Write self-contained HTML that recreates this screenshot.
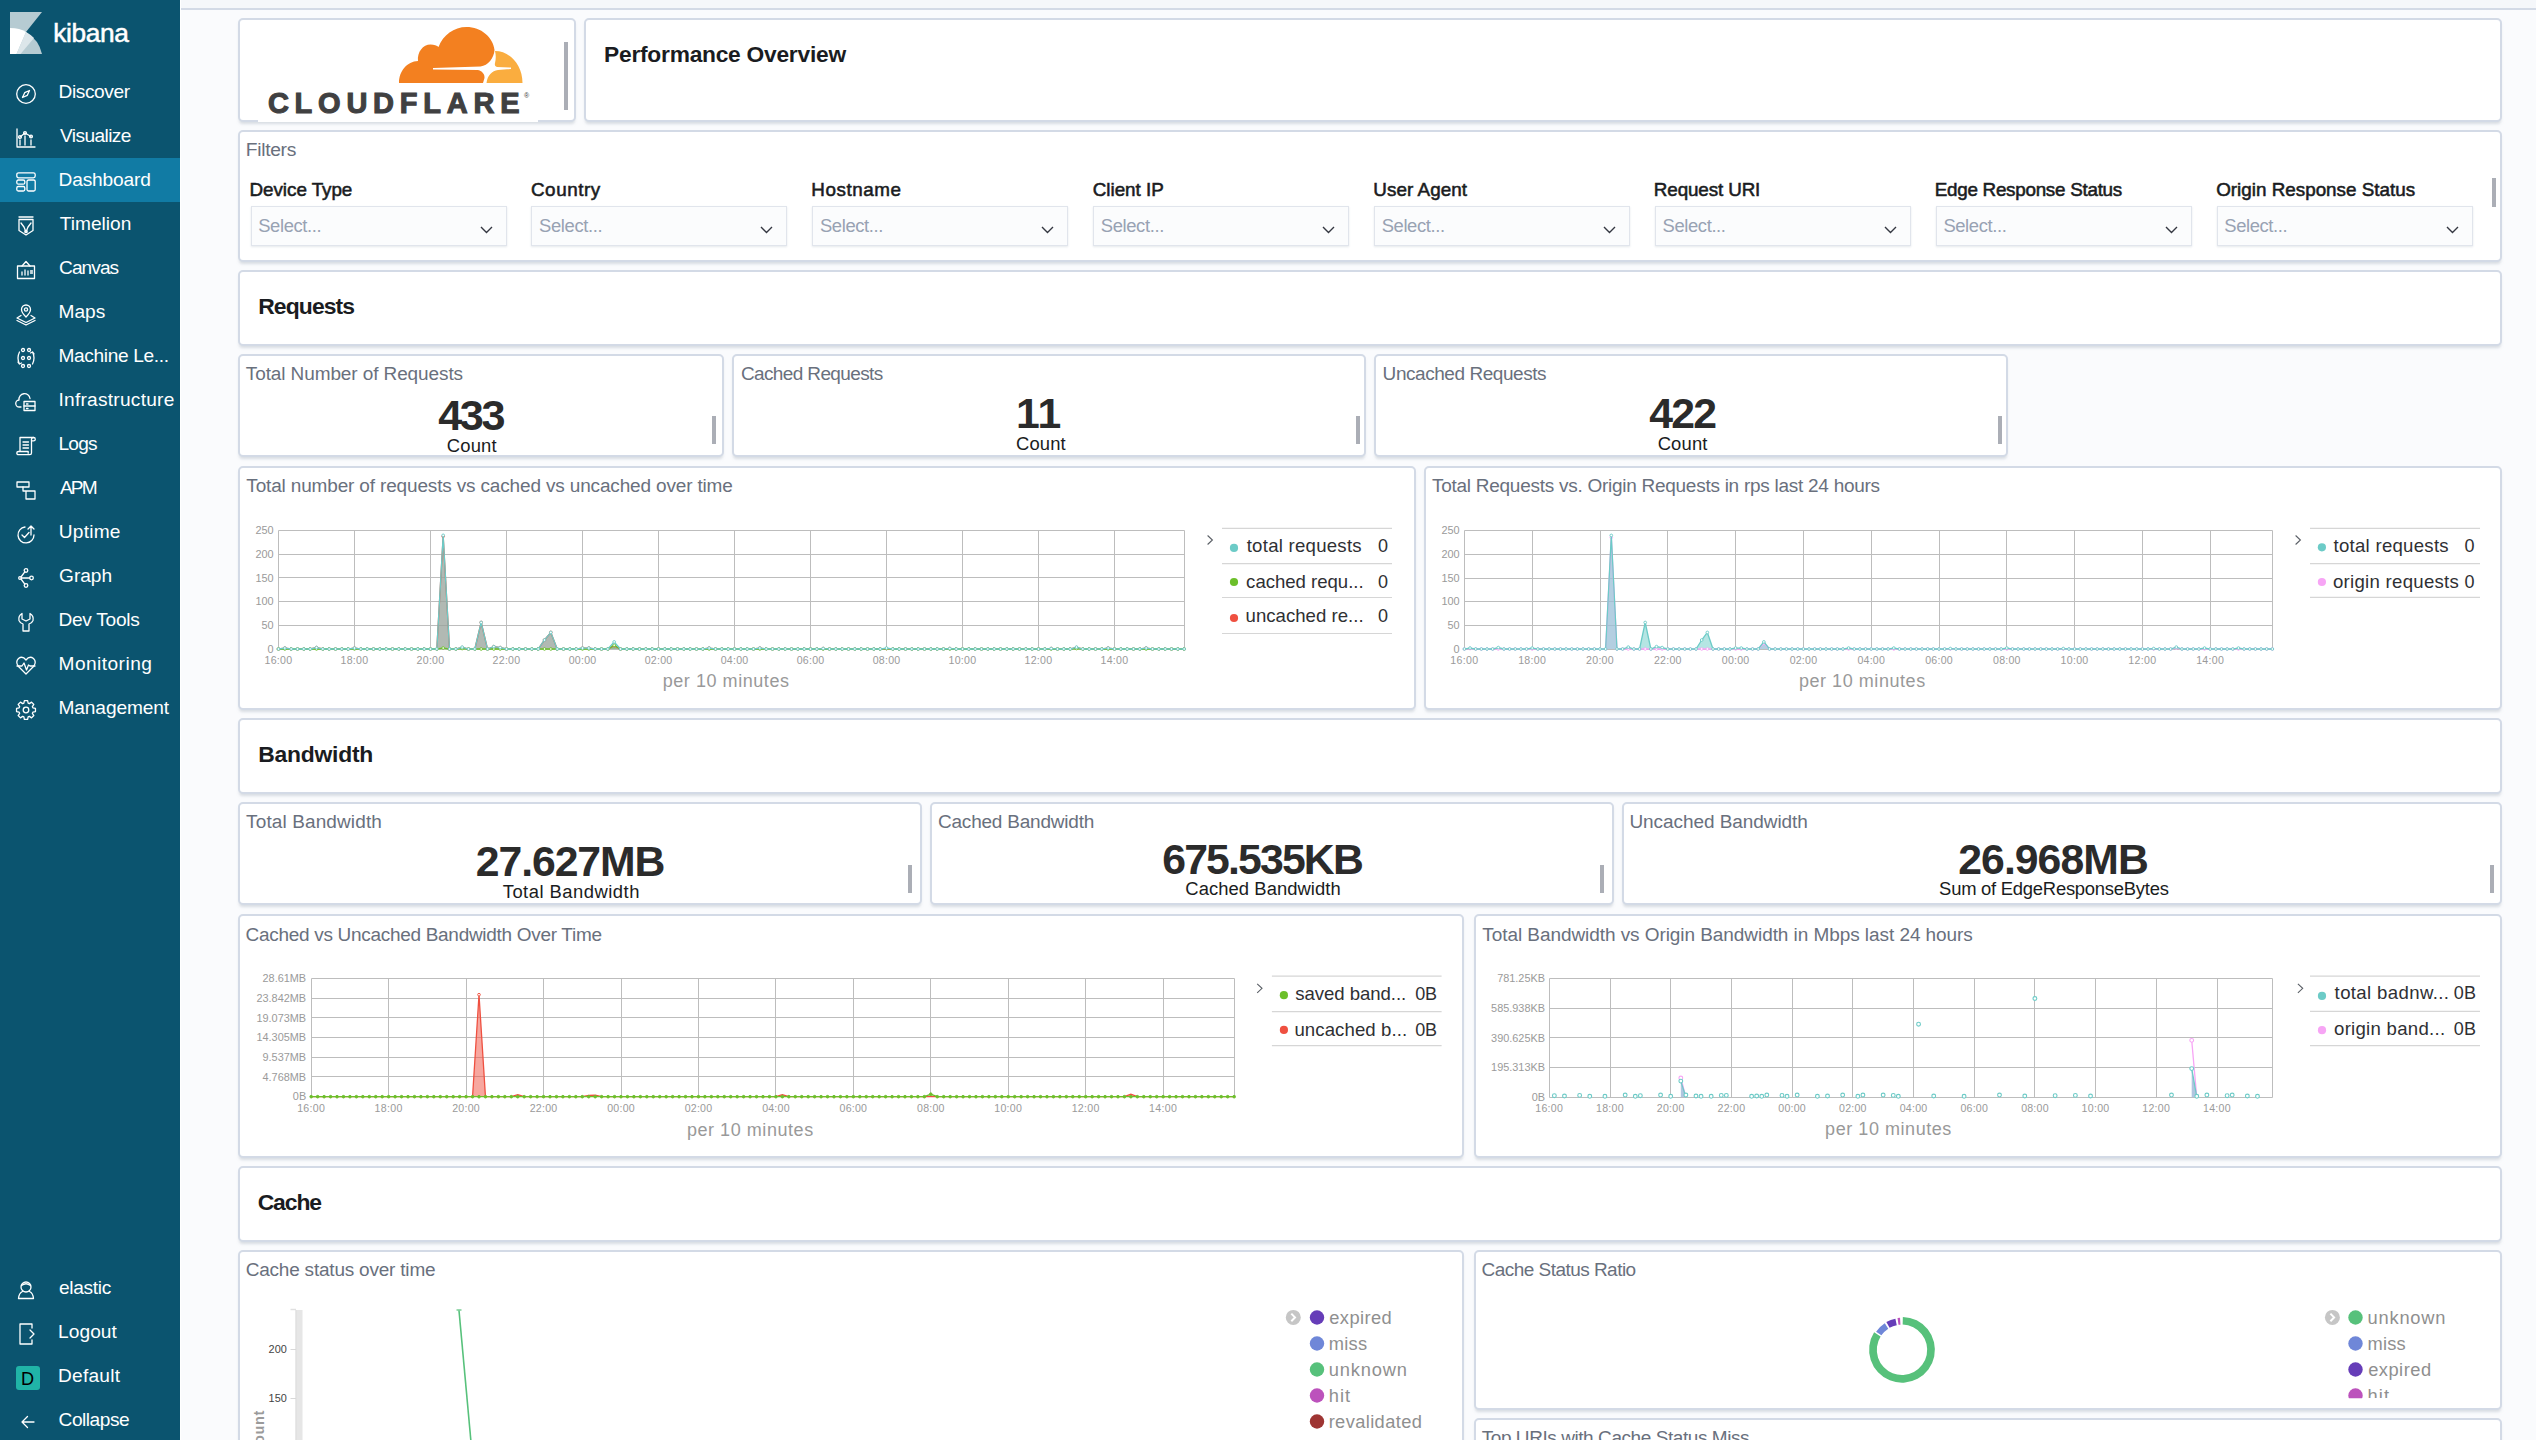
<!DOCTYPE html><html><head><meta charset="utf-8"><title>Performance Overview - Kibana</title><style>

*{margin:0;padding:0;box-sizing:border-box}
html,body{width:2536px;height:1440px;overflow:hidden;background:#fafbfd;font-family:"Liberation Sans",sans-serif}
.t{position:absolute;line-height:0;white-space:pre}
.a{position:absolute}
.p{position:absolute;background:#fff;border:2px solid #d3dae6;border-radius:5px;box-shadow:0 3px 3px -1px rgba(152,162,179,.35)}
.sel{position:absolute;background:#fbfcfd;border:1px solid #e1e5ec;box-shadow:0 1px 2px rgba(152,162,179,.25)}
.sb{position:absolute;background:#abaeb6;width:4px}
svg{position:absolute;overflow:visible}

</style></head><body>
<div class="a" style="left:180px;top:0;width:2356px;height:8px;background:#f5f7fa"></div>
<div class="a" style="left:180px;top:8px;width:2356px;height:2px;background:#d3dae6"></div>
<div class="a" style="left:0;top:0;width:180px;height:1440px;background:#0b546f"></div>
<div class="a" style="left:180px;top:0;width:1px;height:1440px;background:#ffffff"></div>
<div class="a" style="left:0;top:158px;width:180px;height:44px;background:#117ba4"></div>
<svg style="left:10px;top:12px" width="32" height="42" viewBox="0 0 32 42" ><path d="M0 0 H32 L16 20 Q29 28 32 42 H0 Z" fill="#b6cbd2"/><path d="M0 16 Q10 16 16 20 L6.5 42 H0 Z" fill="#ffffff"/><path d="M16 20 Q20.5 22.5 24 26 L10.5 42 H6.5 Z" fill="#dce6ea"/></svg>
<svg style="left:16px;top:83.5px" width="20" height="20" viewBox="0 0 20 20" ><circle cx="10" cy="10" r="9.3" fill="none" stroke="#fff" stroke-width="1.3" stroke-linejoin="round" stroke-linecap="round"/><path d="M13.5 6.5 L11.3 11.3 L6.5 13.5 L8.7 8.7 Z" fill="none" stroke="#fff" stroke-width="1.3" stroke-linejoin="round" stroke-linecap="round"/></svg>
<svg style="left:16px;top:127.5px" width="20" height="20" viewBox="0 0 20 20" ><path d="M1 1 V19 H19" fill="none" stroke="#fff" stroke-width="1.3" stroke-linejoin="round" stroke-linecap="round"/><path d="M4 9 L9 5 L15 8.5" fill="none" stroke="#fff" stroke-width="1.3" stroke-linejoin="round" stroke-linecap="round"/><circle cx="4" cy="9" r="1.4" fill="none" stroke="#fff" stroke-width="1.3" stroke-linejoin="round" stroke-linecap="round"/><circle cx="9" cy="5" r="1.4" fill="none" stroke="#fff" stroke-width="1.3" stroke-linejoin="round" stroke-linecap="round"/><circle cx="15" cy="8.5" r="1.4" fill="none" stroke="#fff" stroke-width="1.3" stroke-linejoin="round" stroke-linecap="round"/><path d="M4 12 V17 M9 8 V17 M15 12 V17" fill="none" stroke="#fff" stroke-width="1.3" stroke-linejoin="round" stroke-linecap="round"/></svg>
<svg style="left:16px;top:171.5px" width="20" height="20" viewBox="0 0 20 20" ><rect x="0.8" y="0.8" width="18.4" height="5" rx="1.8" fill="none" stroke="#fff" stroke-width="1.3" stroke-linejoin="round" stroke-linecap="round"/><rect x="0.8" y="8" width="8" height="4.2" rx="1.5" fill="none" stroke="#fff" stroke-width="1.3" stroke-linejoin="round" stroke-linecap="round"/><rect x="0.8" y="14.5" width="8" height="4.5" rx="1.5" fill="none" stroke="#fff" stroke-width="1.3" stroke-linejoin="round" stroke-linecap="round"/><rect x="11" y="8" width="8.2" height="11" rx="1.5" fill="none" stroke="#fff" stroke-width="1.3" stroke-linejoin="round" stroke-linecap="round"/></svg>
<svg style="left:16px;top:215.5px" width="20" height="20" viewBox="0 0 20 20" ><path d="M3 1 H17" fill="none" stroke="#fff" stroke-width="1.3" stroke-linejoin="round" stroke-linecap="round"/><path d="M3 3.5 H17 V14.5 L10 19 L3 14.5 Z" fill="none" stroke="#fff" stroke-width="1.3" stroke-linejoin="round" stroke-linecap="round"/><path d="M5 7 L8 11 L10 16 L12 11 L15 7" fill="none" stroke="#fff" stroke-width="1.3" stroke-linejoin="round" stroke-linecap="round"/><circle cx="10" cy="15.5" r="1.2" fill="none" stroke="#fff" stroke-width="1.3" stroke-linejoin="round" stroke-linecap="round"/></svg>
<svg style="left:16px;top:259.5px" width="20" height="20" viewBox="0 0 20 20" ><path d="M1.5 6 H18.5 V18.5 H1.5 Z" fill="none" stroke="#fff" stroke-width="1.3" stroke-linejoin="round" stroke-linecap="round"/><path d="M6 6 L10 1.5 L14 6" fill="none" stroke="#fff" stroke-width="1.3" stroke-linejoin="round" stroke-linecap="round"/><path d="M6 15 V12 M9 15 V10 M12 15 V11 M14.5 11 H16.5 M14.5 13 H16.5" fill="none" stroke="#fff" stroke-width="1.3" stroke-linejoin="round" stroke-linecap="round"/></svg>
<svg style="left:16px;top:303.5px" width="20" height="20" viewBox="0 0 20 20" ><path d="M10 13 C6 9 5.5 7.5 5.5 5.5 A4.5 4.5 0 0 1 14.5 5.5 C14.5 7.5 14 9 10 13 Z" fill="none" stroke="#fff" stroke-width="1.3" stroke-linejoin="round" stroke-linecap="round"/><circle cx="10" cy="5.5" r="1.6" fill="none" stroke="#fff" stroke-width="1.3" stroke-linejoin="round" stroke-linecap="round"/><path d="M5 11.5 L1 14 L10 18.5 L19 14 L15 11.5" fill="none" stroke="#fff" stroke-width="1.3" stroke-linejoin="round" stroke-linecap="round"/><path d="M1 16.5 L10 21 L19 16.5" fill="none" stroke="#fff" stroke-width="1.3" stroke-linejoin="round" stroke-linecap="round"/></svg>
<svg style="left:16px;top:347.5px" width="20" height="20" viewBox="0 0 20 20" ><circle cx="7" cy="2" r="1.5" fill="none" stroke="#fff" stroke-width="1.3" stroke-linejoin="round" stroke-linecap="round"/><circle cx="13" cy="2" r="1.5" fill="none" stroke="#fff" stroke-width="1.3" stroke-linejoin="round" stroke-linecap="round"/><circle cx="7" cy="10" r="1.5" fill="none" stroke="#fff" stroke-width="1.3" stroke-linejoin="round" stroke-linecap="round"/><circle cx="13" cy="10" r="1.5" fill="none" stroke="#fff" stroke-width="1.3" stroke-linejoin="round" stroke-linecap="round"/><circle cx="7" cy="18" r="1.5" fill="none" stroke="#fff" stroke-width="1.3" stroke-linejoin="round" stroke-linecap="round"/><circle cx="13" cy="18" r="1.5" fill="none" stroke="#fff" stroke-width="1.3" stroke-linejoin="round" stroke-linecap="round"/><path d="M3.5 4 Q0.5 10 3.5 16 M16.5 4 Q19.5 10 16.5 16 M2 14 L3.5 16 L5.5 15 M18 6 L16.5 4 L14.5 5" fill="none" stroke="#fff" stroke-width="1.3" stroke-linejoin="round" stroke-linecap="round"/></svg>
<svg style="left:16px;top:391.5px" width="20" height="20" viewBox="0 0 20 20" ><path d="M5 15 H3.5 A3.5 3.5 0 0 1 3 8 A5.5 5.5 0 0 1 14 6.5" fill="none" stroke="#fff" stroke-width="1.3" stroke-linejoin="round" stroke-linecap="round"/><rect x="8" y="9.5" width="11" height="9" fill="none" stroke="#fff" stroke-width="1.3" stroke-linejoin="round" stroke-linecap="round"/><path d="M8 14 H19 M10.5 12 H12 M10.5 16.5 H12" fill="none" stroke="#fff" stroke-width="1.3" stroke-linejoin="round" stroke-linecap="round"/></svg>
<svg style="left:16px;top:435.5px" width="20" height="20" viewBox="0 0 20 20" ><path d="M4 15.5 V1.5 H17.5 Q19.3 1.5 19.3 3.2 Q19.3 4.8 17.5 4.8 H15.5 V17 Q15.5 18.7 13.8 18.7 H2.5 Q0.8 18.7 0.8 17.1 Q0.8 15.5 2.5 15.5 H12.2 V17.2" fill="none" stroke="#fff" stroke-width="1.3" stroke-linejoin="round" stroke-linecap="round"/><path d="M15.5 4.8 V3.2 Q15.5 1.5 17.5 1.5 M7 6 H12.5 M7 9 H12.5 M7 12 H12.5" fill="none" stroke="#fff" stroke-width="1.3" stroke-linejoin="round" stroke-linecap="round"/></svg>
<svg style="left:16px;top:479.5px" width="20" height="20" viewBox="0 0 20 20" ><path d="M1 2 H13 V7 H1 Z" fill="none" stroke="#fff" stroke-width="1.3" stroke-linejoin="round" stroke-linecap="round"/><path d="M7 7 V11 H19 V19 H10 V11" fill="none" stroke="#fff" stroke-width="1.3" stroke-linejoin="round" stroke-linecap="round"/></svg>
<svg style="left:16px;top:523.5px" width="20" height="20" viewBox="0 0 20 20" ><path d="M9 3 A8 8 0 1 0 18 11" fill="none" stroke="#fff" stroke-width="1.3" stroke-linejoin="round" stroke-linecap="round"/><path d="M15 11 V2 M12 5 L15 2 L18 5" fill="none" stroke="#fff" stroke-width="1.3" stroke-linejoin="round" stroke-linecap="round"/><path d="M6 11 L8.5 13.5 L13 8.5" fill="none" stroke="#fff" stroke-width="1.3" stroke-linejoin="round" stroke-linecap="round"/></svg>
<svg style="left:16px;top:567.5px" width="20" height="20" viewBox="0 0 20 20" ><circle cx="10" cy="2.5" r="1.8" fill="none" stroke="#fff" stroke-width="1.3" stroke-linejoin="round" stroke-linecap="round"/><circle cx="15.5" cy="10" r="1.8" fill="none" stroke="#fff" stroke-width="1.3" stroke-linejoin="round" stroke-linecap="round"/><circle cx="10" cy="17.5" r="1.8" fill="none" stroke="#fff" stroke-width="1.3" stroke-linejoin="round" stroke-linecap="round"/><circle cx="4" cy="10" r="1.3" fill="none" stroke="#fff" stroke-width="1.3" stroke-linejoin="round" stroke-linecap="round"/><path d="M5.3 10 H13.7 M5 9 L8.8 3.8 M5 11 L8.8 16.2" fill="none" stroke="#fff" stroke-width="1.3" stroke-linejoin="round" stroke-linecap="round"/></svg>
<svg style="left:16px;top:611.5px" width="20" height="20" viewBox="0 0 20 20" ><path d="M6 1.5 Q2 4 3 8.5 Q4 11 7 12 V19 H13 V12 Q16 11 17 8.5 Q18 4 14 1.5 V7 L10 9 L6 7 Z" fill="none" stroke="#fff" stroke-width="1.3" stroke-linejoin="round" stroke-linecap="round"/></svg>
<svg style="left:16px;top:655.5px" width="20" height="20" viewBox="0 0 20 20" ><path d="M10 18 L2.5 10.5 Q-1 6 2.5 2.5 Q6.5 -0.5 10 4 Q13.5 -0.5 17.5 2.5 Q21 6 17.5 10.5 Z" fill="none" stroke="#fff" stroke-width="1.3" stroke-linejoin="round" stroke-linecap="round"/><path d="M1 10 H6 L8 7 L10.5 14 L12.5 9 L14 10 H19" fill="none" stroke="#fff" stroke-width="1.3" stroke-linejoin="round" stroke-linecap="round"/></svg>
<svg style="left:16px;top:699.5px" width="20" height="20" viewBox="0 0 20 20" ><path d="M16.88 7.87 L19.46 8.38 L19.46 11.62 L16.88 12.13 L16.37 13.36 L17.84 15.54 L15.54 17.84 L13.36 16.37 L12.13 16.88 L11.62 19.46 L8.38 19.46 L7.87 16.88 L6.64 16.37 L4.46 17.84 L2.16 15.54 L3.63 13.36 L3.12 12.13 L0.54 11.62 L0.54 8.38 L3.12 7.87 L3.63 6.64 L2.16 4.46 L4.46 2.16 L6.64 3.63 L7.87 3.12 L8.38 0.54 L11.62 0.54 L12.13 3.12 L13.36 3.63 L15.54 2.16 L17.84 4.46 L16.37 6.64 Z" fill="none" stroke="#fff" stroke-width="1.3" stroke-linejoin="round" stroke-linecap="round"/><circle cx="10" cy="10" r="2.8" fill="none" stroke="#fff" stroke-width="1.3" stroke-linejoin="round" stroke-linecap="round"/></svg>
<svg style="left:16px;top:1280px" width="20" height="20" viewBox="0 0 20 20" ><circle cx="10" cy="7" r="5" fill="none" stroke="#fff" stroke-width="1.3" stroke-linejoin="round" stroke-linecap="round"/><path d="M5.5 5.5 Q10 2 14.5 5.5" fill="none" stroke="#fff" stroke-width="1.3" stroke-linejoin="round" stroke-linecap="round"/><path d="M6.5 11.5 Q3 13 2.5 18.5 H17.5 Q17 13 13.5 11.5" fill="none" stroke="#fff" stroke-width="1.3" stroke-linejoin="round" stroke-linecap="round"/></svg>
<svg style="left:16px;top:1323px" width="20" height="22" viewBox="0 0 20 22" ><path d="M16 5 V1 H4 V21 H16 V17" fill="none" stroke="#fff" stroke-width="1.3" stroke-linejoin="round" stroke-linecap="round"/><path d="M14 7 L18 11 L14 15" fill="none" stroke="#fff" stroke-width="1.3" stroke-linejoin="round" stroke-linecap="round"/></svg>
<div class="a" style="left:16px;top:1366px;width:24px;height:24px;background:#20b4a7;border-radius:3px"></div>
<svg style="left:20px;top:1414px" width="16" height="16" viewBox="0 0 16 16" ><path d="M14 8 H2 M7.5 2.5 L2 8 L7.5 13.5" fill="none" stroke="#fff" stroke-width="1.3" stroke-linejoin="round" stroke-linecap="round"/></svg>
<div class="p" style="left:238px;top:18px;width:338px;height:104px"></div>
<div class="p" style="left:584px;top:18px;width:1918px;height:104px"></div>
<div class="p" style="left:238px;top:130px;width:2264px;height:132px"></div>
<div class="p" style="left:238px;top:270px;width:2264px;height:76px"></div>
<div class="p" style="left:238px;top:354px;width:486px;height:103px"></div>
<div class="p" style="left:732px;top:354px;width:634px;height:103px"></div>
<div class="p" style="left:1374px;top:354px;width:634px;height:103px"></div>
<div class="p" style="left:238px;top:466px;width:1178px;height:244px"></div>
<div class="p" style="left:1424px;top:466px;width:1078px;height:244px"></div>
<div class="p" style="left:238px;top:718px;width:2264px;height:76px"></div>
<div class="p" style="left:238px;top:802px;width:684px;height:103px"></div>
<div class="p" style="left:930px;top:802px;width:684px;height:103px"></div>
<div class="p" style="left:1622px;top:802px;width:880px;height:103px"></div>
<div class="p" style="left:238px;top:914px;width:1226px;height:244px"></div>
<div class="p" style="left:1474px;top:914px;width:1028px;height:244px"></div>
<div class="p" style="left:238px;top:1166px;width:2264px;height:76px"></div>
<div class="p" style="left:238px;top:1250px;width:1226px;height:210px"></div>
<div class="p" style="left:1474px;top:1250px;width:1028px;height:160px"></div>
<div class="p" style="left:1474px;top:1418px;width:1028px;height:42px"></div>
<div class="sb" style="left:564px;top:42px;height:68px"></div>
<div class="sb" style="left:712px;top:416px;height:28px"></div>
<div class="sb" style="left:1356px;top:416px;height:28px"></div>
<div class="sb" style="left:1998px;top:416px;height:28px"></div>
<div class="sb" style="left:2492px;top:178px;height:29px"></div>
<div class="sb" style="left:908px;top:865px;height:28px"></div>
<div class="sb" style="left:1600px;top:865px;height:28px"></div>
<div class="sb" style="left:2490px;top:865px;height:28px"></div>
<svg style="left:399px;top:27px" width="124" height="56" viewBox="0 0 124 56" ><path d="M0 56 C0 44 8 34.5 19 34 C18 25 24 17.5 31.5 17.5 C35 17.5 38 18.5 39.5 20 C44 8 55 0 67.5 0 C82 0 94 10 95.5 23 C95 31 89 38.5 81.5 39.5 L34 41 L34 42.5 L78.5 43 C83 43.5 86 47.5 85.5 51 L84 56 Z" fill="#f38020"/><path d="M96 24 C111 24 123.5 38 123.5 56 H87.5 C88.5 48 93 44 99 43 L112 42 L112 40.5 L98 40 C96 39.5 95.5 38 96 36 C97 32 97 28 96 24 Z" fill="#faad3f"/></svg>
<div class="a" style="left:258px;top:119px;width:280px;height:3px;background:#fff"></div>
<div class="sel" style="left:250.5px;top:206px;width:256px;height:40px"></div>
<svg style="left:479.5px;top:226px" width="13" height="8"><path d="M1 1 L6.5 6.5 L12 1" fill="none" stroke="#343741" stroke-width="1.4"/></svg>
<div class="sel" style="left:531.4px;top:206px;width:256px;height:40px"></div>
<svg style="left:760.4px;top:226px" width="13" height="8"><path d="M1 1 L6.5 6.5 L12 1" fill="none" stroke="#343741" stroke-width="1.4"/></svg>
<div class="sel" style="left:812.2px;top:206px;width:256px;height:40px"></div>
<svg style="left:1041.2px;top:226px" width="13" height="8"><path d="M1 1 L6.5 6.5 L12 1" fill="none" stroke="#343741" stroke-width="1.4"/></svg>
<div class="sel" style="left:1093.1px;top:206px;width:256px;height:40px"></div>
<svg style="left:1322.1px;top:226px" width="13" height="8"><path d="M1 1 L6.5 6.5 L12 1" fill="none" stroke="#343741" stroke-width="1.4"/></svg>
<div class="sel" style="left:1373.9px;top:206px;width:256px;height:40px"></div>
<svg style="left:1602.9px;top:226px" width="13" height="8"><path d="M1 1 L6.5 6.5 L12 1" fill="none" stroke="#343741" stroke-width="1.4"/></svg>
<div class="sel" style="left:1654.8px;top:206px;width:256px;height:40px"></div>
<svg style="left:1883.8px;top:226px" width="13" height="8"><path d="M1 1 L6.5 6.5 L12 1" fill="none" stroke="#343741" stroke-width="1.4"/></svg>
<div class="sel" style="left:1935.7px;top:206px;width:256px;height:40px"></div>
<svg style="left:2164.7px;top:226px" width="13" height="8"><path d="M1 1 L6.5 6.5 L12 1" fill="none" stroke="#343741" stroke-width="1.4"/></svg>
<div class="sel" style="left:2216.5px;top:206px;width:256px;height:40px"></div>
<svg style="left:2445.5px;top:226px" width="13" height="8"><path d="M1 1 L6.5 6.5 L12 1" fill="none" stroke="#343741" stroke-width="1.4"/></svg>
<svg style="left:0;top:0" width="2536" height="1440"><path d="M278.50 530.50 H1184.50" stroke="#bdbdbd" stroke-width="1"/><path d="M278.50 554.50 H1184.50" stroke="#bdbdbd" stroke-width="1"/><path d="M278.50 577.50 H1184.50" stroke="#bdbdbd" stroke-width="1"/><path d="M278.50 601.50 H1184.50" stroke="#bdbdbd" stroke-width="1"/><path d="M278.50 625.50 H1184.50" stroke="#bdbdbd" stroke-width="1"/><path d="M278.50 649.50 H1184.50" stroke="#bdbdbd" stroke-width="1"/><path d="M278.50 530.50 V649.50" stroke="#bdbdbd" stroke-width="1"/><path d="M354.50 530.50 V649.50" stroke="#bdbdbd" stroke-width="1"/><path d="M430.50 530.50 V649.50" stroke="#bdbdbd" stroke-width="1"/><path d="M506.50 530.50 V649.50" stroke="#bdbdbd" stroke-width="1"/><path d="M582.50 530.50 V649.50" stroke="#bdbdbd" stroke-width="1"/><path d="M658.50 530.50 V649.50" stroke="#bdbdbd" stroke-width="1"/><path d="M734.50 530.50 V649.50" stroke="#bdbdbd" stroke-width="1"/><path d="M810.50 530.50 V649.50" stroke="#bdbdbd" stroke-width="1"/><path d="M886.50 530.50 V649.50" stroke="#bdbdbd" stroke-width="1"/><path d="M962.50 530.50 V649.50" stroke="#bdbdbd" stroke-width="1"/><path d="M1038.50 530.50 V649.50" stroke="#bdbdbd" stroke-width="1"/><path d="M1114.50 530.50 V649.50" stroke="#bdbdbd" stroke-width="1"/><path d="M1184.50 530.50 V649.50" stroke="#bdbdbd" stroke-width="1"/><path d="M278.50 649.00 L284.83 648.05 L291.17 649.00 L297.50 649.00 L303.83 649.00 L310.17 649.00 L316.50 647.58 L322.83 649.00 L329.17 649.00 L335.50 649.00 L341.83 649.00 L348.17 649.00 L354.50 648.05 L360.83 649.00 L367.17 649.00 L373.50 649.00 L379.83 649.00 L386.17 649.00 L392.50 649.00 L398.83 649.00 L405.17 649.00 L411.50 649.00 L417.83 649.00 L424.17 649.00 L430.50 649.00 L436.83 649.00 L443.17 536.28 L449.50 649.00 L455.83 649.00 L462.17 647.58 L468.50 649.00 L474.83 649.00 L481.17 622.48 L487.50 649.00 L493.83 646.63 L500.17 647.58 L506.50 649.00 L512.83 649.00 L519.17 649.00 L525.50 649.00 L531.83 649.00 L538.17 649.00 L544.50 640.00 L550.83 632.42 L557.17 649.00 L563.50 649.00 L569.83 649.00 L576.17 649.00 L582.50 648.05 L588.83 648.05 L595.17 649.00 L601.50 649.00 L607.83 649.00 L614.17 645.68 L620.50 649.00 L626.83 649.00 L633.17 649.00 L639.50 649.00 L645.83 649.00 L652.17 649.00 L658.50 649.00 L664.83 649.00 L671.17 649.00 L677.50 649.00 L683.83 649.00 L690.17 649.00 L696.50 649.00 L702.83 649.00 L709.17 648.05 L715.50 649.00 L721.83 649.00 L728.17 649.00 L734.50 649.00 L740.83 649.00 L747.17 649.00 L753.50 649.00 L759.83 648.05 L766.17 649.00 L772.50 649.00 L778.83 649.00 L785.17 649.00 L791.50 649.00 L797.83 649.00 L804.17 649.00 L810.50 649.00 L816.83 649.00 L823.17 648.53 L829.50 649.00 L835.83 649.00 L842.17 649.00 L848.50 649.00 L854.83 649.00 L861.17 649.00 L867.50 649.00 L873.83 649.00 L880.17 649.00 L886.50 648.53 L892.83 649.00 L899.17 649.00 L905.50 649.00 L911.83 649.00 L918.17 649.00 L924.50 649.00 L930.83 649.00 L937.17 649.00 L943.50 649.00 L949.83 648.53 L956.17 649.00 L962.50 649.00 L968.83 649.00 L975.17 649.00 L981.50 649.00 L987.83 649.00 L994.17 649.00 L1000.50 649.00 L1006.83 649.00 L1013.17 649.00 L1019.50 649.00 L1025.83 649.00 L1032.17 649.00 L1038.50 649.00 L1044.83 649.00 L1051.17 648.53 L1057.50 649.00 L1063.83 649.00 L1070.17 649.00 L1076.50 647.58 L1082.83 649.00 L1089.17 649.00 L1095.50 649.00 L1101.83 649.00 L1108.17 648.05 L1114.50 649.00 L1120.83 649.00 L1127.17 649.00 L1133.50 649.00 L1139.83 649.00 L1146.17 648.05 L1152.50 649.00 L1158.83 649.00 L1165.17 649.00 L1171.50 649.00 L1177.83 649.00 L1184.17 649.00 L1184.17 649.00 L278.50 649.00 Z" fill="#ef5040" fill-opacity="0.5" stroke="none"/><path d="M278.50 649.00 L284.83 649.00 L291.17 649.00 L297.50 649.00 L303.83 649.00 L310.17 649.00 L316.50 649.00 L322.83 649.00 L329.17 649.00 L335.50 649.00 L341.83 649.00 L348.17 649.00 L354.50 649.00 L360.83 649.00 L367.17 649.00 L373.50 649.00 L379.83 649.00 L386.17 649.00 L392.50 649.00 L398.83 649.00 L405.17 649.00 L411.50 649.00 L417.83 649.00 L424.17 649.00 L430.50 649.00 L436.83 649.00 L443.17 648.05 L449.50 649.00 L455.83 649.00 L462.17 648.53 L468.50 649.00 L474.83 649.00 L481.17 649.00 L487.50 649.00 L493.83 649.00 L500.17 649.00 L506.50 649.00 L512.83 649.00 L519.17 649.00 L525.50 649.00 L531.83 649.00 L538.17 649.00 L544.50 649.00 L550.83 649.00 L557.17 649.00 L563.50 649.00 L569.83 649.00 L576.17 649.00 L582.50 649.00 L588.83 649.00 L595.17 649.00 L601.50 649.00 L607.83 649.00 L614.17 645.21 L620.50 649.00 L626.83 649.00 L633.17 649.00 L639.50 649.00 L645.83 649.00 L652.17 649.00 L658.50 649.00 L664.83 649.00 L671.17 649.00 L677.50 649.00 L683.83 649.00 L690.17 649.00 L696.50 649.00 L702.83 649.00 L709.17 649.00 L715.50 649.00 L721.83 649.00 L728.17 649.00 L734.50 649.00 L740.83 649.00 L747.17 649.00 L753.50 649.00 L759.83 649.00 L766.17 649.00 L772.50 649.00 L778.83 649.00 L785.17 649.00 L791.50 649.00 L797.83 649.00 L804.17 649.00 L810.50 649.00 L816.83 649.00 L823.17 649.00 L829.50 649.00 L835.83 649.00 L842.17 649.00 L848.50 649.00 L854.83 649.00 L861.17 649.00 L867.50 649.00 L873.83 649.00 L880.17 649.00 L886.50 648.53 L892.83 649.00 L899.17 649.00 L905.50 649.00 L911.83 649.00 L918.17 649.00 L924.50 649.00 L930.83 649.00 L937.17 649.00 L943.50 649.00 L949.83 649.00 L956.17 649.00 L962.50 649.00 L968.83 649.00 L975.17 649.00 L981.50 649.00 L987.83 649.00 L994.17 649.00 L1000.50 649.00 L1006.83 649.00 L1013.17 649.00 L1019.50 649.00 L1025.83 649.00 L1032.17 649.00 L1038.50 649.00 L1044.83 649.00 L1051.17 649.00 L1057.50 649.00 L1063.83 649.00 L1070.17 649.00 L1076.50 648.53 L1082.83 649.00 L1089.17 649.00 L1095.50 649.00 L1101.83 649.00 L1108.17 649.00 L1114.50 649.00 L1120.83 649.00 L1127.17 649.00 L1133.50 649.00 L1139.83 649.00 L1146.17 649.00 L1152.50 649.00 L1158.83 649.00 L1165.17 649.00 L1171.50 649.00 L1177.83 649.00 L1184.17 649.00 L1184.17 649.00 L278.50 649.00 Z" fill="#6cbf2a" fill-opacity="0.5" stroke="none"/><path d="M278.50 649.00 L284.83 648.05 L291.17 649.00 L297.50 649.00 L303.83 649.00 L310.17 649.00 L316.50 647.58 L322.83 649.00 L329.17 649.00 L335.50 649.00 L341.83 649.00 L348.17 649.00 L354.50 648.05 L360.83 649.00 L367.17 649.00 L373.50 649.00 L379.83 649.00 L386.17 649.00 L392.50 649.00 L398.83 649.00 L405.17 649.00 L411.50 649.00 L417.83 649.00 L424.17 649.00 L430.50 649.00 L436.83 649.00 L443.17 535.34 L449.50 649.00 L455.83 649.00 L462.17 647.11 L468.50 649.00 L474.83 649.00 L481.17 622.48 L487.50 649.00 L493.83 646.63 L500.17 647.58 L506.50 649.00 L512.83 649.00 L519.17 649.00 L525.50 649.00 L531.83 649.00 L538.17 649.00 L544.50 640.00 L550.83 632.42 L557.17 649.00 L563.50 649.00 L569.83 649.00 L576.17 649.00 L582.50 648.05 L588.83 648.05 L595.17 649.00 L601.50 649.00 L607.83 649.00 L614.17 641.90 L620.50 649.00 L626.83 649.00 L633.17 649.00 L639.50 649.00 L645.83 649.00 L652.17 649.00 L658.50 649.00 L664.83 649.00 L671.17 649.00 L677.50 649.00 L683.83 649.00 L690.17 649.00 L696.50 649.00 L702.83 649.00 L709.17 648.05 L715.50 649.00 L721.83 649.00 L728.17 649.00 L734.50 649.00 L740.83 649.00 L747.17 649.00 L753.50 649.00 L759.83 648.05 L766.17 649.00 L772.50 649.00 L778.83 649.00 L785.17 649.00 L791.50 649.00 L797.83 649.00 L804.17 649.00 L810.50 649.00 L816.83 649.00 L823.17 648.53 L829.50 649.00 L835.83 649.00 L842.17 649.00 L848.50 649.00 L854.83 649.00 L861.17 649.00 L867.50 649.00 L873.83 649.00 L880.17 649.00 L886.50 648.05 L892.83 649.00 L899.17 649.00 L905.50 649.00 L911.83 649.00 L918.17 649.00 L924.50 649.00 L930.83 649.00 L937.17 649.00 L943.50 649.00 L949.83 648.53 L956.17 649.00 L962.50 649.00 L968.83 649.00 L975.17 649.00 L981.50 649.00 L987.83 649.00 L994.17 649.00 L1000.50 649.00 L1006.83 649.00 L1013.17 649.00 L1019.50 649.00 L1025.83 649.00 L1032.17 649.00 L1038.50 649.00 L1044.83 649.00 L1051.17 648.53 L1057.50 649.00 L1063.83 649.00 L1070.17 649.00 L1076.50 647.11 L1082.83 649.00 L1089.17 649.00 L1095.50 649.00 L1101.83 649.00 L1108.17 648.05 L1114.50 649.00 L1120.83 649.00 L1127.17 649.00 L1133.50 649.00 L1139.83 649.00 L1146.17 648.05 L1152.50 649.00 L1158.83 649.00 L1165.17 649.00 L1171.50 649.00 L1177.83 649.00 L1184.17 649.00 L1184.17 649.00 L278.50 649.00 Z" fill="#6ccbc7" fill-opacity="0.5" stroke="none"/><path d="M278.50 649.00 L284.83 648.05 L291.17 649.00 L297.50 649.00 L303.83 649.00 L310.17 649.00 L316.50 647.58 L322.83 649.00 L329.17 649.00 L335.50 649.00 L341.83 649.00 L348.17 649.00 L354.50 648.05 L360.83 649.00 L367.17 649.00 L373.50 649.00 L379.83 649.00 L386.17 649.00 L392.50 649.00 L398.83 649.00 L405.17 649.00 L411.50 649.00 L417.83 649.00 L424.17 649.00 L430.50 649.00 L436.83 649.00 L443.17 536.28 L449.50 649.00 L455.83 649.00 L462.17 647.58 L468.50 649.00 L474.83 649.00 L481.17 622.48 L487.50 649.00 L493.83 646.63 L500.17 647.58 L506.50 649.00 L512.83 649.00 L519.17 649.00 L525.50 649.00 L531.83 649.00 L538.17 649.00 L544.50 640.00 L550.83 632.42 L557.17 649.00 L563.50 649.00 L569.83 649.00 L576.17 649.00 L582.50 648.05 L588.83 648.05 L595.17 649.00 L601.50 649.00 L607.83 649.00 L614.17 645.68 L620.50 649.00 L626.83 649.00 L633.17 649.00 L639.50 649.00 L645.83 649.00 L652.17 649.00 L658.50 649.00 L664.83 649.00 L671.17 649.00 L677.50 649.00 L683.83 649.00 L690.17 649.00 L696.50 649.00 L702.83 649.00 L709.17 648.05 L715.50 649.00 L721.83 649.00 L728.17 649.00 L734.50 649.00 L740.83 649.00 L747.17 649.00 L753.50 649.00 L759.83 648.05 L766.17 649.00 L772.50 649.00 L778.83 649.00 L785.17 649.00 L791.50 649.00 L797.83 649.00 L804.17 649.00 L810.50 649.00 L816.83 649.00 L823.17 648.53 L829.50 649.00 L835.83 649.00 L842.17 649.00 L848.50 649.00 L854.83 649.00 L861.17 649.00 L867.50 649.00 L873.83 649.00 L880.17 649.00 L886.50 648.53 L892.83 649.00 L899.17 649.00 L905.50 649.00 L911.83 649.00 L918.17 649.00 L924.50 649.00 L930.83 649.00 L937.17 649.00 L943.50 649.00 L949.83 648.53 L956.17 649.00 L962.50 649.00 L968.83 649.00 L975.17 649.00 L981.50 649.00 L987.83 649.00 L994.17 649.00 L1000.50 649.00 L1006.83 649.00 L1013.17 649.00 L1019.50 649.00 L1025.83 649.00 L1032.17 649.00 L1038.50 649.00 L1044.83 649.00 L1051.17 648.53 L1057.50 649.00 L1063.83 649.00 L1070.17 649.00 L1076.50 647.58 L1082.83 649.00 L1089.17 649.00 L1095.50 649.00 L1101.83 649.00 L1108.17 648.05 L1114.50 649.00 L1120.83 649.00 L1127.17 649.00 L1133.50 649.00 L1139.83 649.00 L1146.17 648.05 L1152.50 649.00 L1158.83 649.00 L1165.17 649.00 L1171.50 649.00 L1177.83 649.00 L1184.17 649.00" fill="none" stroke="#ef5040" stroke-width="1.3"/><circle cx="278.50" cy="649.00" r="1.35" fill="#fff" stroke="#ef5040" stroke-width="0.9"/><circle cx="284.83" cy="648.05" r="1.35" fill="#fff" stroke="#ef5040" stroke-width="0.9"/><circle cx="291.17" cy="649.00" r="1.35" fill="#fff" stroke="#ef5040" stroke-width="0.9"/><circle cx="297.50" cy="649.00" r="1.35" fill="#fff" stroke="#ef5040" stroke-width="0.9"/><circle cx="303.83" cy="649.00" r="1.35" fill="#fff" stroke="#ef5040" stroke-width="0.9"/><circle cx="310.17" cy="649.00" r="1.35" fill="#fff" stroke="#ef5040" stroke-width="0.9"/><circle cx="316.50" cy="647.58" r="1.35" fill="#fff" stroke="#ef5040" stroke-width="0.9"/><circle cx="322.83" cy="649.00" r="1.35" fill="#fff" stroke="#ef5040" stroke-width="0.9"/><circle cx="329.17" cy="649.00" r="1.35" fill="#fff" stroke="#ef5040" stroke-width="0.9"/><circle cx="335.50" cy="649.00" r="1.35" fill="#fff" stroke="#ef5040" stroke-width="0.9"/><circle cx="341.83" cy="649.00" r="1.35" fill="#fff" stroke="#ef5040" stroke-width="0.9"/><circle cx="348.17" cy="649.00" r="1.35" fill="#fff" stroke="#ef5040" stroke-width="0.9"/><circle cx="354.50" cy="648.05" r="1.35" fill="#fff" stroke="#ef5040" stroke-width="0.9"/><circle cx="360.83" cy="649.00" r="1.35" fill="#fff" stroke="#ef5040" stroke-width="0.9"/><circle cx="367.17" cy="649.00" r="1.35" fill="#fff" stroke="#ef5040" stroke-width="0.9"/><circle cx="373.50" cy="649.00" r="1.35" fill="#fff" stroke="#ef5040" stroke-width="0.9"/><circle cx="379.83" cy="649.00" r="1.35" fill="#fff" stroke="#ef5040" stroke-width="0.9"/><circle cx="386.17" cy="649.00" r="1.35" fill="#fff" stroke="#ef5040" stroke-width="0.9"/><circle cx="392.50" cy="649.00" r="1.35" fill="#fff" stroke="#ef5040" stroke-width="0.9"/><circle cx="398.83" cy="649.00" r="1.35" fill="#fff" stroke="#ef5040" stroke-width="0.9"/><circle cx="405.17" cy="649.00" r="1.35" fill="#fff" stroke="#ef5040" stroke-width="0.9"/><circle cx="411.50" cy="649.00" r="1.35" fill="#fff" stroke="#ef5040" stroke-width="0.9"/><circle cx="417.83" cy="649.00" r="1.35" fill="#fff" stroke="#ef5040" stroke-width="0.9"/><circle cx="424.17" cy="649.00" r="1.35" fill="#fff" stroke="#ef5040" stroke-width="0.9"/><circle cx="430.50" cy="649.00" r="1.35" fill="#fff" stroke="#ef5040" stroke-width="0.9"/><circle cx="436.83" cy="649.00" r="1.35" fill="#fff" stroke="#ef5040" stroke-width="0.9"/><circle cx="443.17" cy="536.28" r="1.35" fill="#fff" stroke="#ef5040" stroke-width="0.9"/><circle cx="449.50" cy="649.00" r="1.35" fill="#fff" stroke="#ef5040" stroke-width="0.9"/><circle cx="455.83" cy="649.00" r="1.35" fill="#fff" stroke="#ef5040" stroke-width="0.9"/><circle cx="462.17" cy="647.58" r="1.35" fill="#fff" stroke="#ef5040" stroke-width="0.9"/><circle cx="468.50" cy="649.00" r="1.35" fill="#fff" stroke="#ef5040" stroke-width="0.9"/><circle cx="474.83" cy="649.00" r="1.35" fill="#fff" stroke="#ef5040" stroke-width="0.9"/><circle cx="481.17" cy="622.48" r="1.35" fill="#fff" stroke="#ef5040" stroke-width="0.9"/><circle cx="487.50" cy="649.00" r="1.35" fill="#fff" stroke="#ef5040" stroke-width="0.9"/><circle cx="493.83" cy="646.63" r="1.35" fill="#fff" stroke="#ef5040" stroke-width="0.9"/><circle cx="500.17" cy="647.58" r="1.35" fill="#fff" stroke="#ef5040" stroke-width="0.9"/><circle cx="506.50" cy="649.00" r="1.35" fill="#fff" stroke="#ef5040" stroke-width="0.9"/><circle cx="512.83" cy="649.00" r="1.35" fill="#fff" stroke="#ef5040" stroke-width="0.9"/><circle cx="519.17" cy="649.00" r="1.35" fill="#fff" stroke="#ef5040" stroke-width="0.9"/><circle cx="525.50" cy="649.00" r="1.35" fill="#fff" stroke="#ef5040" stroke-width="0.9"/><circle cx="531.83" cy="649.00" r="1.35" fill="#fff" stroke="#ef5040" stroke-width="0.9"/><circle cx="538.17" cy="649.00" r="1.35" fill="#fff" stroke="#ef5040" stroke-width="0.9"/><circle cx="544.50" cy="640.00" r="1.35" fill="#fff" stroke="#ef5040" stroke-width="0.9"/><circle cx="550.83" cy="632.42" r="1.35" fill="#fff" stroke="#ef5040" stroke-width="0.9"/><circle cx="557.17" cy="649.00" r="1.35" fill="#fff" stroke="#ef5040" stroke-width="0.9"/><circle cx="563.50" cy="649.00" r="1.35" fill="#fff" stroke="#ef5040" stroke-width="0.9"/><circle cx="569.83" cy="649.00" r="1.35" fill="#fff" stroke="#ef5040" stroke-width="0.9"/><circle cx="576.17" cy="649.00" r="1.35" fill="#fff" stroke="#ef5040" stroke-width="0.9"/><circle cx="582.50" cy="648.05" r="1.35" fill="#fff" stroke="#ef5040" stroke-width="0.9"/><circle cx="588.83" cy="648.05" r="1.35" fill="#fff" stroke="#ef5040" stroke-width="0.9"/><circle cx="595.17" cy="649.00" r="1.35" fill="#fff" stroke="#ef5040" stroke-width="0.9"/><circle cx="601.50" cy="649.00" r="1.35" fill="#fff" stroke="#ef5040" stroke-width="0.9"/><circle cx="607.83" cy="649.00" r="1.35" fill="#fff" stroke="#ef5040" stroke-width="0.9"/><circle cx="614.17" cy="645.68" r="1.35" fill="#fff" stroke="#ef5040" stroke-width="0.9"/><circle cx="620.50" cy="649.00" r="1.35" fill="#fff" stroke="#ef5040" stroke-width="0.9"/><circle cx="626.83" cy="649.00" r="1.35" fill="#fff" stroke="#ef5040" stroke-width="0.9"/><circle cx="633.17" cy="649.00" r="1.35" fill="#fff" stroke="#ef5040" stroke-width="0.9"/><circle cx="639.50" cy="649.00" r="1.35" fill="#fff" stroke="#ef5040" stroke-width="0.9"/><circle cx="645.83" cy="649.00" r="1.35" fill="#fff" stroke="#ef5040" stroke-width="0.9"/><circle cx="652.17" cy="649.00" r="1.35" fill="#fff" stroke="#ef5040" stroke-width="0.9"/><circle cx="658.50" cy="649.00" r="1.35" fill="#fff" stroke="#ef5040" stroke-width="0.9"/><circle cx="664.83" cy="649.00" r="1.35" fill="#fff" stroke="#ef5040" stroke-width="0.9"/><circle cx="671.17" cy="649.00" r="1.35" fill="#fff" stroke="#ef5040" stroke-width="0.9"/><circle cx="677.50" cy="649.00" r="1.35" fill="#fff" stroke="#ef5040" stroke-width="0.9"/><circle cx="683.83" cy="649.00" r="1.35" fill="#fff" stroke="#ef5040" stroke-width="0.9"/><circle cx="690.17" cy="649.00" r="1.35" fill="#fff" stroke="#ef5040" stroke-width="0.9"/><circle cx="696.50" cy="649.00" r="1.35" fill="#fff" stroke="#ef5040" stroke-width="0.9"/><circle cx="702.83" cy="649.00" r="1.35" fill="#fff" stroke="#ef5040" stroke-width="0.9"/><circle cx="709.17" cy="648.05" r="1.35" fill="#fff" stroke="#ef5040" stroke-width="0.9"/><circle cx="715.50" cy="649.00" r="1.35" fill="#fff" stroke="#ef5040" stroke-width="0.9"/><circle cx="721.83" cy="649.00" r="1.35" fill="#fff" stroke="#ef5040" stroke-width="0.9"/><circle cx="728.17" cy="649.00" r="1.35" fill="#fff" stroke="#ef5040" stroke-width="0.9"/><circle cx="734.50" cy="649.00" r="1.35" fill="#fff" stroke="#ef5040" stroke-width="0.9"/><circle cx="740.83" cy="649.00" r="1.35" fill="#fff" stroke="#ef5040" stroke-width="0.9"/><circle cx="747.17" cy="649.00" r="1.35" fill="#fff" stroke="#ef5040" stroke-width="0.9"/><circle cx="753.50" cy="649.00" r="1.35" fill="#fff" stroke="#ef5040" stroke-width="0.9"/><circle cx="759.83" cy="648.05" r="1.35" fill="#fff" stroke="#ef5040" stroke-width="0.9"/><circle cx="766.17" cy="649.00" r="1.35" fill="#fff" stroke="#ef5040" stroke-width="0.9"/><circle cx="772.50" cy="649.00" r="1.35" fill="#fff" stroke="#ef5040" stroke-width="0.9"/><circle cx="778.83" cy="649.00" r="1.35" fill="#fff" stroke="#ef5040" stroke-width="0.9"/><circle cx="785.17" cy="649.00" r="1.35" fill="#fff" stroke="#ef5040" stroke-width="0.9"/><circle cx="791.50" cy="649.00" r="1.35" fill="#fff" stroke="#ef5040" stroke-width="0.9"/><circle cx="797.83" cy="649.00" r="1.35" fill="#fff" stroke="#ef5040" stroke-width="0.9"/><circle cx="804.17" cy="649.00" r="1.35" fill="#fff" stroke="#ef5040" stroke-width="0.9"/><circle cx="810.50" cy="649.00" r="1.35" fill="#fff" stroke="#ef5040" stroke-width="0.9"/><circle cx="816.83" cy="649.00" r="1.35" fill="#fff" stroke="#ef5040" stroke-width="0.9"/><circle cx="823.17" cy="648.53" r="1.35" fill="#fff" stroke="#ef5040" stroke-width="0.9"/><circle cx="829.50" cy="649.00" r="1.35" fill="#fff" stroke="#ef5040" stroke-width="0.9"/><circle cx="835.83" cy="649.00" r="1.35" fill="#fff" stroke="#ef5040" stroke-width="0.9"/><circle cx="842.17" cy="649.00" r="1.35" fill="#fff" stroke="#ef5040" stroke-width="0.9"/><circle cx="848.50" cy="649.00" r="1.35" fill="#fff" stroke="#ef5040" stroke-width="0.9"/><circle cx="854.83" cy="649.00" r="1.35" fill="#fff" stroke="#ef5040" stroke-width="0.9"/><circle cx="861.17" cy="649.00" r="1.35" fill="#fff" stroke="#ef5040" stroke-width="0.9"/><circle cx="867.50" cy="649.00" r="1.35" fill="#fff" stroke="#ef5040" stroke-width="0.9"/><circle cx="873.83" cy="649.00" r="1.35" fill="#fff" stroke="#ef5040" stroke-width="0.9"/><circle cx="880.17" cy="649.00" r="1.35" fill="#fff" stroke="#ef5040" stroke-width="0.9"/><circle cx="886.50" cy="648.53" r="1.35" fill="#fff" stroke="#ef5040" stroke-width="0.9"/><circle cx="892.83" cy="649.00" r="1.35" fill="#fff" stroke="#ef5040" stroke-width="0.9"/><circle cx="899.17" cy="649.00" r="1.35" fill="#fff" stroke="#ef5040" stroke-width="0.9"/><circle cx="905.50" cy="649.00" r="1.35" fill="#fff" stroke="#ef5040" stroke-width="0.9"/><circle cx="911.83" cy="649.00" r="1.35" fill="#fff" stroke="#ef5040" stroke-width="0.9"/><circle cx="918.17" cy="649.00" r="1.35" fill="#fff" stroke="#ef5040" stroke-width="0.9"/><circle cx="924.50" cy="649.00" r="1.35" fill="#fff" stroke="#ef5040" stroke-width="0.9"/><circle cx="930.83" cy="649.00" r="1.35" fill="#fff" stroke="#ef5040" stroke-width="0.9"/><circle cx="937.17" cy="649.00" r="1.35" fill="#fff" stroke="#ef5040" stroke-width="0.9"/><circle cx="943.50" cy="649.00" r="1.35" fill="#fff" stroke="#ef5040" stroke-width="0.9"/><circle cx="949.83" cy="648.53" r="1.35" fill="#fff" stroke="#ef5040" stroke-width="0.9"/><circle cx="956.17" cy="649.00" r="1.35" fill="#fff" stroke="#ef5040" stroke-width="0.9"/><circle cx="962.50" cy="649.00" r="1.35" fill="#fff" stroke="#ef5040" stroke-width="0.9"/><circle cx="968.83" cy="649.00" r="1.35" fill="#fff" stroke="#ef5040" stroke-width="0.9"/><circle cx="975.17" cy="649.00" r="1.35" fill="#fff" stroke="#ef5040" stroke-width="0.9"/><circle cx="981.50" cy="649.00" r="1.35" fill="#fff" stroke="#ef5040" stroke-width="0.9"/><circle cx="987.83" cy="649.00" r="1.35" fill="#fff" stroke="#ef5040" stroke-width="0.9"/><circle cx="994.17" cy="649.00" r="1.35" fill="#fff" stroke="#ef5040" stroke-width="0.9"/><circle cx="1000.50" cy="649.00" r="1.35" fill="#fff" stroke="#ef5040" stroke-width="0.9"/><circle cx="1006.83" cy="649.00" r="1.35" fill="#fff" stroke="#ef5040" stroke-width="0.9"/><circle cx="1013.17" cy="649.00" r="1.35" fill="#fff" stroke="#ef5040" stroke-width="0.9"/><circle cx="1019.50" cy="649.00" r="1.35" fill="#fff" stroke="#ef5040" stroke-width="0.9"/><circle cx="1025.83" cy="649.00" r="1.35" fill="#fff" stroke="#ef5040" stroke-width="0.9"/><circle cx="1032.17" cy="649.00" r="1.35" fill="#fff" stroke="#ef5040" stroke-width="0.9"/><circle cx="1038.50" cy="649.00" r="1.35" fill="#fff" stroke="#ef5040" stroke-width="0.9"/><circle cx="1044.83" cy="649.00" r="1.35" fill="#fff" stroke="#ef5040" stroke-width="0.9"/><circle cx="1051.17" cy="648.53" r="1.35" fill="#fff" stroke="#ef5040" stroke-width="0.9"/><circle cx="1057.50" cy="649.00" r="1.35" fill="#fff" stroke="#ef5040" stroke-width="0.9"/><circle cx="1063.83" cy="649.00" r="1.35" fill="#fff" stroke="#ef5040" stroke-width="0.9"/><circle cx="1070.17" cy="649.00" r="1.35" fill="#fff" stroke="#ef5040" stroke-width="0.9"/><circle cx="1076.50" cy="647.58" r="1.35" fill="#fff" stroke="#ef5040" stroke-width="0.9"/><circle cx="1082.83" cy="649.00" r="1.35" fill="#fff" stroke="#ef5040" stroke-width="0.9"/><circle cx="1089.17" cy="649.00" r="1.35" fill="#fff" stroke="#ef5040" stroke-width="0.9"/><circle cx="1095.50" cy="649.00" r="1.35" fill="#fff" stroke="#ef5040" stroke-width="0.9"/><circle cx="1101.83" cy="649.00" r="1.35" fill="#fff" stroke="#ef5040" stroke-width="0.9"/><circle cx="1108.17" cy="648.05" r="1.35" fill="#fff" stroke="#ef5040" stroke-width="0.9"/><circle cx="1114.50" cy="649.00" r="1.35" fill="#fff" stroke="#ef5040" stroke-width="0.9"/><circle cx="1120.83" cy="649.00" r="1.35" fill="#fff" stroke="#ef5040" stroke-width="0.9"/><circle cx="1127.17" cy="649.00" r="1.35" fill="#fff" stroke="#ef5040" stroke-width="0.9"/><circle cx="1133.50" cy="649.00" r="1.35" fill="#fff" stroke="#ef5040" stroke-width="0.9"/><circle cx="1139.83" cy="649.00" r="1.35" fill="#fff" stroke="#ef5040" stroke-width="0.9"/><circle cx="1146.17" cy="648.05" r="1.35" fill="#fff" stroke="#ef5040" stroke-width="0.9"/><circle cx="1152.50" cy="649.00" r="1.35" fill="#fff" stroke="#ef5040" stroke-width="0.9"/><circle cx="1158.83" cy="649.00" r="1.35" fill="#fff" stroke="#ef5040" stroke-width="0.9"/><circle cx="1165.17" cy="649.00" r="1.35" fill="#fff" stroke="#ef5040" stroke-width="0.9"/><circle cx="1171.50" cy="649.00" r="1.35" fill="#fff" stroke="#ef5040" stroke-width="0.9"/><circle cx="1177.83" cy="649.00" r="1.35" fill="#fff" stroke="#ef5040" stroke-width="0.9"/><circle cx="1184.17" cy="649.00" r="1.35" fill="#fff" stroke="#ef5040" stroke-width="0.9"/><path d="M278.50 649.00 L284.83 649.00 L291.17 649.00 L297.50 649.00 L303.83 649.00 L310.17 649.00 L316.50 649.00 L322.83 649.00 L329.17 649.00 L335.50 649.00 L341.83 649.00 L348.17 649.00 L354.50 649.00 L360.83 649.00 L367.17 649.00 L373.50 649.00 L379.83 649.00 L386.17 649.00 L392.50 649.00 L398.83 649.00 L405.17 649.00 L411.50 649.00 L417.83 649.00 L424.17 649.00 L430.50 649.00 L436.83 649.00 L443.17 648.05 L449.50 649.00 L455.83 649.00 L462.17 648.53 L468.50 649.00 L474.83 649.00 L481.17 649.00 L487.50 649.00 L493.83 649.00 L500.17 649.00 L506.50 649.00 L512.83 649.00 L519.17 649.00 L525.50 649.00 L531.83 649.00 L538.17 649.00 L544.50 649.00 L550.83 649.00 L557.17 649.00 L563.50 649.00 L569.83 649.00 L576.17 649.00 L582.50 649.00 L588.83 649.00 L595.17 649.00 L601.50 649.00 L607.83 649.00 L614.17 645.21 L620.50 649.00 L626.83 649.00 L633.17 649.00 L639.50 649.00 L645.83 649.00 L652.17 649.00 L658.50 649.00 L664.83 649.00 L671.17 649.00 L677.50 649.00 L683.83 649.00 L690.17 649.00 L696.50 649.00 L702.83 649.00 L709.17 649.00 L715.50 649.00 L721.83 649.00 L728.17 649.00 L734.50 649.00 L740.83 649.00 L747.17 649.00 L753.50 649.00 L759.83 649.00 L766.17 649.00 L772.50 649.00 L778.83 649.00 L785.17 649.00 L791.50 649.00 L797.83 649.00 L804.17 649.00 L810.50 649.00 L816.83 649.00 L823.17 649.00 L829.50 649.00 L835.83 649.00 L842.17 649.00 L848.50 649.00 L854.83 649.00 L861.17 649.00 L867.50 649.00 L873.83 649.00 L880.17 649.00 L886.50 648.53 L892.83 649.00 L899.17 649.00 L905.50 649.00 L911.83 649.00 L918.17 649.00 L924.50 649.00 L930.83 649.00 L937.17 649.00 L943.50 649.00 L949.83 649.00 L956.17 649.00 L962.50 649.00 L968.83 649.00 L975.17 649.00 L981.50 649.00 L987.83 649.00 L994.17 649.00 L1000.50 649.00 L1006.83 649.00 L1013.17 649.00 L1019.50 649.00 L1025.83 649.00 L1032.17 649.00 L1038.50 649.00 L1044.83 649.00 L1051.17 649.00 L1057.50 649.00 L1063.83 649.00 L1070.17 649.00 L1076.50 648.53 L1082.83 649.00 L1089.17 649.00 L1095.50 649.00 L1101.83 649.00 L1108.17 649.00 L1114.50 649.00 L1120.83 649.00 L1127.17 649.00 L1133.50 649.00 L1139.83 649.00 L1146.17 649.00 L1152.50 649.00 L1158.83 649.00 L1165.17 649.00 L1171.50 649.00 L1177.83 649.00 L1184.17 649.00" fill="none" stroke="#6cbf2a" stroke-width="1.3"/><circle cx="278.50" cy="649.00" r="1.35" fill="#fff" stroke="#6cbf2a" stroke-width="0.9"/><circle cx="284.83" cy="649.00" r="1.35" fill="#fff" stroke="#6cbf2a" stroke-width="0.9"/><circle cx="291.17" cy="649.00" r="1.35" fill="#fff" stroke="#6cbf2a" stroke-width="0.9"/><circle cx="297.50" cy="649.00" r="1.35" fill="#fff" stroke="#6cbf2a" stroke-width="0.9"/><circle cx="303.83" cy="649.00" r="1.35" fill="#fff" stroke="#6cbf2a" stroke-width="0.9"/><circle cx="310.17" cy="649.00" r="1.35" fill="#fff" stroke="#6cbf2a" stroke-width="0.9"/><circle cx="316.50" cy="649.00" r="1.35" fill="#fff" stroke="#6cbf2a" stroke-width="0.9"/><circle cx="322.83" cy="649.00" r="1.35" fill="#fff" stroke="#6cbf2a" stroke-width="0.9"/><circle cx="329.17" cy="649.00" r="1.35" fill="#fff" stroke="#6cbf2a" stroke-width="0.9"/><circle cx="335.50" cy="649.00" r="1.35" fill="#fff" stroke="#6cbf2a" stroke-width="0.9"/><circle cx="341.83" cy="649.00" r="1.35" fill="#fff" stroke="#6cbf2a" stroke-width="0.9"/><circle cx="348.17" cy="649.00" r="1.35" fill="#fff" stroke="#6cbf2a" stroke-width="0.9"/><circle cx="354.50" cy="649.00" r="1.35" fill="#fff" stroke="#6cbf2a" stroke-width="0.9"/><circle cx="360.83" cy="649.00" r="1.35" fill="#fff" stroke="#6cbf2a" stroke-width="0.9"/><circle cx="367.17" cy="649.00" r="1.35" fill="#fff" stroke="#6cbf2a" stroke-width="0.9"/><circle cx="373.50" cy="649.00" r="1.35" fill="#fff" stroke="#6cbf2a" stroke-width="0.9"/><circle cx="379.83" cy="649.00" r="1.35" fill="#fff" stroke="#6cbf2a" stroke-width="0.9"/><circle cx="386.17" cy="649.00" r="1.35" fill="#fff" stroke="#6cbf2a" stroke-width="0.9"/><circle cx="392.50" cy="649.00" r="1.35" fill="#fff" stroke="#6cbf2a" stroke-width="0.9"/><circle cx="398.83" cy="649.00" r="1.35" fill="#fff" stroke="#6cbf2a" stroke-width="0.9"/><circle cx="405.17" cy="649.00" r="1.35" fill="#fff" stroke="#6cbf2a" stroke-width="0.9"/><circle cx="411.50" cy="649.00" r="1.35" fill="#fff" stroke="#6cbf2a" stroke-width="0.9"/><circle cx="417.83" cy="649.00" r="1.35" fill="#fff" stroke="#6cbf2a" stroke-width="0.9"/><circle cx="424.17" cy="649.00" r="1.35" fill="#fff" stroke="#6cbf2a" stroke-width="0.9"/><circle cx="430.50" cy="649.00" r="1.35" fill="#fff" stroke="#6cbf2a" stroke-width="0.9"/><circle cx="436.83" cy="649.00" r="1.35" fill="#fff" stroke="#6cbf2a" stroke-width="0.9"/><circle cx="443.17" cy="648.05" r="1.35" fill="#fff" stroke="#6cbf2a" stroke-width="0.9"/><circle cx="449.50" cy="649.00" r="1.35" fill="#fff" stroke="#6cbf2a" stroke-width="0.9"/><circle cx="455.83" cy="649.00" r="1.35" fill="#fff" stroke="#6cbf2a" stroke-width="0.9"/><circle cx="462.17" cy="648.53" r="1.35" fill="#fff" stroke="#6cbf2a" stroke-width="0.9"/><circle cx="468.50" cy="649.00" r="1.35" fill="#fff" stroke="#6cbf2a" stroke-width="0.9"/><circle cx="474.83" cy="649.00" r="1.35" fill="#fff" stroke="#6cbf2a" stroke-width="0.9"/><circle cx="481.17" cy="649.00" r="1.35" fill="#fff" stroke="#6cbf2a" stroke-width="0.9"/><circle cx="487.50" cy="649.00" r="1.35" fill="#fff" stroke="#6cbf2a" stroke-width="0.9"/><circle cx="493.83" cy="649.00" r="1.35" fill="#fff" stroke="#6cbf2a" stroke-width="0.9"/><circle cx="500.17" cy="649.00" r="1.35" fill="#fff" stroke="#6cbf2a" stroke-width="0.9"/><circle cx="506.50" cy="649.00" r="1.35" fill="#fff" stroke="#6cbf2a" stroke-width="0.9"/><circle cx="512.83" cy="649.00" r="1.35" fill="#fff" stroke="#6cbf2a" stroke-width="0.9"/><circle cx="519.17" cy="649.00" r="1.35" fill="#fff" stroke="#6cbf2a" stroke-width="0.9"/><circle cx="525.50" cy="649.00" r="1.35" fill="#fff" stroke="#6cbf2a" stroke-width="0.9"/><circle cx="531.83" cy="649.00" r="1.35" fill="#fff" stroke="#6cbf2a" stroke-width="0.9"/><circle cx="538.17" cy="649.00" r="1.35" fill="#fff" stroke="#6cbf2a" stroke-width="0.9"/><circle cx="544.50" cy="649.00" r="1.35" fill="#fff" stroke="#6cbf2a" stroke-width="0.9"/><circle cx="550.83" cy="649.00" r="1.35" fill="#fff" stroke="#6cbf2a" stroke-width="0.9"/><circle cx="557.17" cy="649.00" r="1.35" fill="#fff" stroke="#6cbf2a" stroke-width="0.9"/><circle cx="563.50" cy="649.00" r="1.35" fill="#fff" stroke="#6cbf2a" stroke-width="0.9"/><circle cx="569.83" cy="649.00" r="1.35" fill="#fff" stroke="#6cbf2a" stroke-width="0.9"/><circle cx="576.17" cy="649.00" r="1.35" fill="#fff" stroke="#6cbf2a" stroke-width="0.9"/><circle cx="582.50" cy="649.00" r="1.35" fill="#fff" stroke="#6cbf2a" stroke-width="0.9"/><circle cx="588.83" cy="649.00" r="1.35" fill="#fff" stroke="#6cbf2a" stroke-width="0.9"/><circle cx="595.17" cy="649.00" r="1.35" fill="#fff" stroke="#6cbf2a" stroke-width="0.9"/><circle cx="601.50" cy="649.00" r="1.35" fill="#fff" stroke="#6cbf2a" stroke-width="0.9"/><circle cx="607.83" cy="649.00" r="1.35" fill="#fff" stroke="#6cbf2a" stroke-width="0.9"/><circle cx="614.17" cy="645.21" r="1.35" fill="#fff" stroke="#6cbf2a" stroke-width="0.9"/><circle cx="620.50" cy="649.00" r="1.35" fill="#fff" stroke="#6cbf2a" stroke-width="0.9"/><circle cx="626.83" cy="649.00" r="1.35" fill="#fff" stroke="#6cbf2a" stroke-width="0.9"/><circle cx="633.17" cy="649.00" r="1.35" fill="#fff" stroke="#6cbf2a" stroke-width="0.9"/><circle cx="639.50" cy="649.00" r="1.35" fill="#fff" stroke="#6cbf2a" stroke-width="0.9"/><circle cx="645.83" cy="649.00" r="1.35" fill="#fff" stroke="#6cbf2a" stroke-width="0.9"/><circle cx="652.17" cy="649.00" r="1.35" fill="#fff" stroke="#6cbf2a" stroke-width="0.9"/><circle cx="658.50" cy="649.00" r="1.35" fill="#fff" stroke="#6cbf2a" stroke-width="0.9"/><circle cx="664.83" cy="649.00" r="1.35" fill="#fff" stroke="#6cbf2a" stroke-width="0.9"/><circle cx="671.17" cy="649.00" r="1.35" fill="#fff" stroke="#6cbf2a" stroke-width="0.9"/><circle cx="677.50" cy="649.00" r="1.35" fill="#fff" stroke="#6cbf2a" stroke-width="0.9"/><circle cx="683.83" cy="649.00" r="1.35" fill="#fff" stroke="#6cbf2a" stroke-width="0.9"/><circle cx="690.17" cy="649.00" r="1.35" fill="#fff" stroke="#6cbf2a" stroke-width="0.9"/><circle cx="696.50" cy="649.00" r="1.35" fill="#fff" stroke="#6cbf2a" stroke-width="0.9"/><circle cx="702.83" cy="649.00" r="1.35" fill="#fff" stroke="#6cbf2a" stroke-width="0.9"/><circle cx="709.17" cy="649.00" r="1.35" fill="#fff" stroke="#6cbf2a" stroke-width="0.9"/><circle cx="715.50" cy="649.00" r="1.35" fill="#fff" stroke="#6cbf2a" stroke-width="0.9"/><circle cx="721.83" cy="649.00" r="1.35" fill="#fff" stroke="#6cbf2a" stroke-width="0.9"/><circle cx="728.17" cy="649.00" r="1.35" fill="#fff" stroke="#6cbf2a" stroke-width="0.9"/><circle cx="734.50" cy="649.00" r="1.35" fill="#fff" stroke="#6cbf2a" stroke-width="0.9"/><circle cx="740.83" cy="649.00" r="1.35" fill="#fff" stroke="#6cbf2a" stroke-width="0.9"/><circle cx="747.17" cy="649.00" r="1.35" fill="#fff" stroke="#6cbf2a" stroke-width="0.9"/><circle cx="753.50" cy="649.00" r="1.35" fill="#fff" stroke="#6cbf2a" stroke-width="0.9"/><circle cx="759.83" cy="649.00" r="1.35" fill="#fff" stroke="#6cbf2a" stroke-width="0.9"/><circle cx="766.17" cy="649.00" r="1.35" fill="#fff" stroke="#6cbf2a" stroke-width="0.9"/><circle cx="772.50" cy="649.00" r="1.35" fill="#fff" stroke="#6cbf2a" stroke-width="0.9"/><circle cx="778.83" cy="649.00" r="1.35" fill="#fff" stroke="#6cbf2a" stroke-width="0.9"/><circle cx="785.17" cy="649.00" r="1.35" fill="#fff" stroke="#6cbf2a" stroke-width="0.9"/><circle cx="791.50" cy="649.00" r="1.35" fill="#fff" stroke="#6cbf2a" stroke-width="0.9"/><circle cx="797.83" cy="649.00" r="1.35" fill="#fff" stroke="#6cbf2a" stroke-width="0.9"/><circle cx="804.17" cy="649.00" r="1.35" fill="#fff" stroke="#6cbf2a" stroke-width="0.9"/><circle cx="810.50" cy="649.00" r="1.35" fill="#fff" stroke="#6cbf2a" stroke-width="0.9"/><circle cx="816.83" cy="649.00" r="1.35" fill="#fff" stroke="#6cbf2a" stroke-width="0.9"/><circle cx="823.17" cy="649.00" r="1.35" fill="#fff" stroke="#6cbf2a" stroke-width="0.9"/><circle cx="829.50" cy="649.00" r="1.35" fill="#fff" stroke="#6cbf2a" stroke-width="0.9"/><circle cx="835.83" cy="649.00" r="1.35" fill="#fff" stroke="#6cbf2a" stroke-width="0.9"/><circle cx="842.17" cy="649.00" r="1.35" fill="#fff" stroke="#6cbf2a" stroke-width="0.9"/><circle cx="848.50" cy="649.00" r="1.35" fill="#fff" stroke="#6cbf2a" stroke-width="0.9"/><circle cx="854.83" cy="649.00" r="1.35" fill="#fff" stroke="#6cbf2a" stroke-width="0.9"/><circle cx="861.17" cy="649.00" r="1.35" fill="#fff" stroke="#6cbf2a" stroke-width="0.9"/><circle cx="867.50" cy="649.00" r="1.35" fill="#fff" stroke="#6cbf2a" stroke-width="0.9"/><circle cx="873.83" cy="649.00" r="1.35" fill="#fff" stroke="#6cbf2a" stroke-width="0.9"/><circle cx="880.17" cy="649.00" r="1.35" fill="#fff" stroke="#6cbf2a" stroke-width="0.9"/><circle cx="886.50" cy="648.53" r="1.35" fill="#fff" stroke="#6cbf2a" stroke-width="0.9"/><circle cx="892.83" cy="649.00" r="1.35" fill="#fff" stroke="#6cbf2a" stroke-width="0.9"/><circle cx="899.17" cy="649.00" r="1.35" fill="#fff" stroke="#6cbf2a" stroke-width="0.9"/><circle cx="905.50" cy="649.00" r="1.35" fill="#fff" stroke="#6cbf2a" stroke-width="0.9"/><circle cx="911.83" cy="649.00" r="1.35" fill="#fff" stroke="#6cbf2a" stroke-width="0.9"/><circle cx="918.17" cy="649.00" r="1.35" fill="#fff" stroke="#6cbf2a" stroke-width="0.9"/><circle cx="924.50" cy="649.00" r="1.35" fill="#fff" stroke="#6cbf2a" stroke-width="0.9"/><circle cx="930.83" cy="649.00" r="1.35" fill="#fff" stroke="#6cbf2a" stroke-width="0.9"/><circle cx="937.17" cy="649.00" r="1.35" fill="#fff" stroke="#6cbf2a" stroke-width="0.9"/><circle cx="943.50" cy="649.00" r="1.35" fill="#fff" stroke="#6cbf2a" stroke-width="0.9"/><circle cx="949.83" cy="649.00" r="1.35" fill="#fff" stroke="#6cbf2a" stroke-width="0.9"/><circle cx="956.17" cy="649.00" r="1.35" fill="#fff" stroke="#6cbf2a" stroke-width="0.9"/><circle cx="962.50" cy="649.00" r="1.35" fill="#fff" stroke="#6cbf2a" stroke-width="0.9"/><circle cx="968.83" cy="649.00" r="1.35" fill="#fff" stroke="#6cbf2a" stroke-width="0.9"/><circle cx="975.17" cy="649.00" r="1.35" fill="#fff" stroke="#6cbf2a" stroke-width="0.9"/><circle cx="981.50" cy="649.00" r="1.35" fill="#fff" stroke="#6cbf2a" stroke-width="0.9"/><circle cx="987.83" cy="649.00" r="1.35" fill="#fff" stroke="#6cbf2a" stroke-width="0.9"/><circle cx="994.17" cy="649.00" r="1.35" fill="#fff" stroke="#6cbf2a" stroke-width="0.9"/><circle cx="1000.50" cy="649.00" r="1.35" fill="#fff" stroke="#6cbf2a" stroke-width="0.9"/><circle cx="1006.83" cy="649.00" r="1.35" fill="#fff" stroke="#6cbf2a" stroke-width="0.9"/><circle cx="1013.17" cy="649.00" r="1.35" fill="#fff" stroke="#6cbf2a" stroke-width="0.9"/><circle cx="1019.50" cy="649.00" r="1.35" fill="#fff" stroke="#6cbf2a" stroke-width="0.9"/><circle cx="1025.83" cy="649.00" r="1.35" fill="#fff" stroke="#6cbf2a" stroke-width="0.9"/><circle cx="1032.17" cy="649.00" r="1.35" fill="#fff" stroke="#6cbf2a" stroke-width="0.9"/><circle cx="1038.50" cy="649.00" r="1.35" fill="#fff" stroke="#6cbf2a" stroke-width="0.9"/><circle cx="1044.83" cy="649.00" r="1.35" fill="#fff" stroke="#6cbf2a" stroke-width="0.9"/><circle cx="1051.17" cy="649.00" r="1.35" fill="#fff" stroke="#6cbf2a" stroke-width="0.9"/><circle cx="1057.50" cy="649.00" r="1.35" fill="#fff" stroke="#6cbf2a" stroke-width="0.9"/><circle cx="1063.83" cy="649.00" r="1.35" fill="#fff" stroke="#6cbf2a" stroke-width="0.9"/><circle cx="1070.17" cy="649.00" r="1.35" fill="#fff" stroke="#6cbf2a" stroke-width="0.9"/><circle cx="1076.50" cy="648.53" r="1.35" fill="#fff" stroke="#6cbf2a" stroke-width="0.9"/><circle cx="1082.83" cy="649.00" r="1.35" fill="#fff" stroke="#6cbf2a" stroke-width="0.9"/><circle cx="1089.17" cy="649.00" r="1.35" fill="#fff" stroke="#6cbf2a" stroke-width="0.9"/><circle cx="1095.50" cy="649.00" r="1.35" fill="#fff" stroke="#6cbf2a" stroke-width="0.9"/><circle cx="1101.83" cy="649.00" r="1.35" fill="#fff" stroke="#6cbf2a" stroke-width="0.9"/><circle cx="1108.17" cy="649.00" r="1.35" fill="#fff" stroke="#6cbf2a" stroke-width="0.9"/><circle cx="1114.50" cy="649.00" r="1.35" fill="#fff" stroke="#6cbf2a" stroke-width="0.9"/><circle cx="1120.83" cy="649.00" r="1.35" fill="#fff" stroke="#6cbf2a" stroke-width="0.9"/><circle cx="1127.17" cy="649.00" r="1.35" fill="#fff" stroke="#6cbf2a" stroke-width="0.9"/><circle cx="1133.50" cy="649.00" r="1.35" fill="#fff" stroke="#6cbf2a" stroke-width="0.9"/><circle cx="1139.83" cy="649.00" r="1.35" fill="#fff" stroke="#6cbf2a" stroke-width="0.9"/><circle cx="1146.17" cy="649.00" r="1.35" fill="#fff" stroke="#6cbf2a" stroke-width="0.9"/><circle cx="1152.50" cy="649.00" r="1.35" fill="#fff" stroke="#6cbf2a" stroke-width="0.9"/><circle cx="1158.83" cy="649.00" r="1.35" fill="#fff" stroke="#6cbf2a" stroke-width="0.9"/><circle cx="1165.17" cy="649.00" r="1.35" fill="#fff" stroke="#6cbf2a" stroke-width="0.9"/><circle cx="1171.50" cy="649.00" r="1.35" fill="#fff" stroke="#6cbf2a" stroke-width="0.9"/><circle cx="1177.83" cy="649.00" r="1.35" fill="#fff" stroke="#6cbf2a" stroke-width="0.9"/><circle cx="1184.17" cy="649.00" r="1.35" fill="#fff" stroke="#6cbf2a" stroke-width="0.9"/><path d="M278.50 649.00 L284.83 648.05 L291.17 649.00 L297.50 649.00 L303.83 649.00 L310.17 649.00 L316.50 647.58 L322.83 649.00 L329.17 649.00 L335.50 649.00 L341.83 649.00 L348.17 649.00 L354.50 648.05 L360.83 649.00 L367.17 649.00 L373.50 649.00 L379.83 649.00 L386.17 649.00 L392.50 649.00 L398.83 649.00 L405.17 649.00 L411.50 649.00 L417.83 649.00 L424.17 649.00 L430.50 649.00 L436.83 649.00 L443.17 535.34 L449.50 649.00 L455.83 649.00 L462.17 647.11 L468.50 649.00 L474.83 649.00 L481.17 622.48 L487.50 649.00 L493.83 646.63 L500.17 647.58 L506.50 649.00 L512.83 649.00 L519.17 649.00 L525.50 649.00 L531.83 649.00 L538.17 649.00 L544.50 640.00 L550.83 632.42 L557.17 649.00 L563.50 649.00 L569.83 649.00 L576.17 649.00 L582.50 648.05 L588.83 648.05 L595.17 649.00 L601.50 649.00 L607.83 649.00 L614.17 641.90 L620.50 649.00 L626.83 649.00 L633.17 649.00 L639.50 649.00 L645.83 649.00 L652.17 649.00 L658.50 649.00 L664.83 649.00 L671.17 649.00 L677.50 649.00 L683.83 649.00 L690.17 649.00 L696.50 649.00 L702.83 649.00 L709.17 648.05 L715.50 649.00 L721.83 649.00 L728.17 649.00 L734.50 649.00 L740.83 649.00 L747.17 649.00 L753.50 649.00 L759.83 648.05 L766.17 649.00 L772.50 649.00 L778.83 649.00 L785.17 649.00 L791.50 649.00 L797.83 649.00 L804.17 649.00 L810.50 649.00 L816.83 649.00 L823.17 648.53 L829.50 649.00 L835.83 649.00 L842.17 649.00 L848.50 649.00 L854.83 649.00 L861.17 649.00 L867.50 649.00 L873.83 649.00 L880.17 649.00 L886.50 648.05 L892.83 649.00 L899.17 649.00 L905.50 649.00 L911.83 649.00 L918.17 649.00 L924.50 649.00 L930.83 649.00 L937.17 649.00 L943.50 649.00 L949.83 648.53 L956.17 649.00 L962.50 649.00 L968.83 649.00 L975.17 649.00 L981.50 649.00 L987.83 649.00 L994.17 649.00 L1000.50 649.00 L1006.83 649.00 L1013.17 649.00 L1019.50 649.00 L1025.83 649.00 L1032.17 649.00 L1038.50 649.00 L1044.83 649.00 L1051.17 648.53 L1057.50 649.00 L1063.83 649.00 L1070.17 649.00 L1076.50 647.11 L1082.83 649.00 L1089.17 649.00 L1095.50 649.00 L1101.83 649.00 L1108.17 648.05 L1114.50 649.00 L1120.83 649.00 L1127.17 649.00 L1133.50 649.00 L1139.83 649.00 L1146.17 648.05 L1152.50 649.00 L1158.83 649.00 L1165.17 649.00 L1171.50 649.00 L1177.83 649.00 L1184.17 649.00" fill="none" stroke="#6ccbc7" stroke-width="1.3"/><circle cx="278.50" cy="649.00" r="1.35" fill="#fff" stroke="#6ccbc7" stroke-width="0.9"/><circle cx="284.83" cy="648.05" r="1.35" fill="#fff" stroke="#6ccbc7" stroke-width="0.9"/><circle cx="291.17" cy="649.00" r="1.35" fill="#fff" stroke="#6ccbc7" stroke-width="0.9"/><circle cx="297.50" cy="649.00" r="1.35" fill="#fff" stroke="#6ccbc7" stroke-width="0.9"/><circle cx="303.83" cy="649.00" r="1.35" fill="#fff" stroke="#6ccbc7" stroke-width="0.9"/><circle cx="310.17" cy="649.00" r="1.35" fill="#fff" stroke="#6ccbc7" stroke-width="0.9"/><circle cx="316.50" cy="647.58" r="1.35" fill="#fff" stroke="#6ccbc7" stroke-width="0.9"/><circle cx="322.83" cy="649.00" r="1.35" fill="#fff" stroke="#6ccbc7" stroke-width="0.9"/><circle cx="329.17" cy="649.00" r="1.35" fill="#fff" stroke="#6ccbc7" stroke-width="0.9"/><circle cx="335.50" cy="649.00" r="1.35" fill="#fff" stroke="#6ccbc7" stroke-width="0.9"/><circle cx="341.83" cy="649.00" r="1.35" fill="#fff" stroke="#6ccbc7" stroke-width="0.9"/><circle cx="348.17" cy="649.00" r="1.35" fill="#fff" stroke="#6ccbc7" stroke-width="0.9"/><circle cx="354.50" cy="648.05" r="1.35" fill="#fff" stroke="#6ccbc7" stroke-width="0.9"/><circle cx="360.83" cy="649.00" r="1.35" fill="#fff" stroke="#6ccbc7" stroke-width="0.9"/><circle cx="367.17" cy="649.00" r="1.35" fill="#fff" stroke="#6ccbc7" stroke-width="0.9"/><circle cx="373.50" cy="649.00" r="1.35" fill="#fff" stroke="#6ccbc7" stroke-width="0.9"/><circle cx="379.83" cy="649.00" r="1.35" fill="#fff" stroke="#6ccbc7" stroke-width="0.9"/><circle cx="386.17" cy="649.00" r="1.35" fill="#fff" stroke="#6ccbc7" stroke-width="0.9"/><circle cx="392.50" cy="649.00" r="1.35" fill="#fff" stroke="#6ccbc7" stroke-width="0.9"/><circle cx="398.83" cy="649.00" r="1.35" fill="#fff" stroke="#6ccbc7" stroke-width="0.9"/><circle cx="405.17" cy="649.00" r="1.35" fill="#fff" stroke="#6ccbc7" stroke-width="0.9"/><circle cx="411.50" cy="649.00" r="1.35" fill="#fff" stroke="#6ccbc7" stroke-width="0.9"/><circle cx="417.83" cy="649.00" r="1.35" fill="#fff" stroke="#6ccbc7" stroke-width="0.9"/><circle cx="424.17" cy="649.00" r="1.35" fill="#fff" stroke="#6ccbc7" stroke-width="0.9"/><circle cx="430.50" cy="649.00" r="1.35" fill="#fff" stroke="#6ccbc7" stroke-width="0.9"/><circle cx="436.83" cy="649.00" r="1.35" fill="#fff" stroke="#6ccbc7" stroke-width="0.9"/><circle cx="443.17" cy="535.34" r="1.35" fill="#fff" stroke="#6ccbc7" stroke-width="0.9"/><circle cx="449.50" cy="649.00" r="1.35" fill="#fff" stroke="#6ccbc7" stroke-width="0.9"/><circle cx="455.83" cy="649.00" r="1.35" fill="#fff" stroke="#6ccbc7" stroke-width="0.9"/><circle cx="462.17" cy="647.11" r="1.35" fill="#fff" stroke="#6ccbc7" stroke-width="0.9"/><circle cx="468.50" cy="649.00" r="1.35" fill="#fff" stroke="#6ccbc7" stroke-width="0.9"/><circle cx="474.83" cy="649.00" r="1.35" fill="#fff" stroke="#6ccbc7" stroke-width="0.9"/><circle cx="481.17" cy="622.48" r="1.35" fill="#fff" stroke="#6ccbc7" stroke-width="0.9"/><circle cx="487.50" cy="649.00" r="1.35" fill="#fff" stroke="#6ccbc7" stroke-width="0.9"/><circle cx="493.83" cy="646.63" r="1.35" fill="#fff" stroke="#6ccbc7" stroke-width="0.9"/><circle cx="500.17" cy="647.58" r="1.35" fill="#fff" stroke="#6ccbc7" stroke-width="0.9"/><circle cx="506.50" cy="649.00" r="1.35" fill="#fff" stroke="#6ccbc7" stroke-width="0.9"/><circle cx="512.83" cy="649.00" r="1.35" fill="#fff" stroke="#6ccbc7" stroke-width="0.9"/><circle cx="519.17" cy="649.00" r="1.35" fill="#fff" stroke="#6ccbc7" stroke-width="0.9"/><circle cx="525.50" cy="649.00" r="1.35" fill="#fff" stroke="#6ccbc7" stroke-width="0.9"/><circle cx="531.83" cy="649.00" r="1.35" fill="#fff" stroke="#6ccbc7" stroke-width="0.9"/><circle cx="538.17" cy="649.00" r="1.35" fill="#fff" stroke="#6ccbc7" stroke-width="0.9"/><circle cx="544.50" cy="640.00" r="1.35" fill="#fff" stroke="#6ccbc7" stroke-width="0.9"/><circle cx="550.83" cy="632.42" r="1.35" fill="#fff" stroke="#6ccbc7" stroke-width="0.9"/><circle cx="557.17" cy="649.00" r="1.35" fill="#fff" stroke="#6ccbc7" stroke-width="0.9"/><circle cx="563.50" cy="649.00" r="1.35" fill="#fff" stroke="#6ccbc7" stroke-width="0.9"/><circle cx="569.83" cy="649.00" r="1.35" fill="#fff" stroke="#6ccbc7" stroke-width="0.9"/><circle cx="576.17" cy="649.00" r="1.35" fill="#fff" stroke="#6ccbc7" stroke-width="0.9"/><circle cx="582.50" cy="648.05" r="1.35" fill="#fff" stroke="#6ccbc7" stroke-width="0.9"/><circle cx="588.83" cy="648.05" r="1.35" fill="#fff" stroke="#6ccbc7" stroke-width="0.9"/><circle cx="595.17" cy="649.00" r="1.35" fill="#fff" stroke="#6ccbc7" stroke-width="0.9"/><circle cx="601.50" cy="649.00" r="1.35" fill="#fff" stroke="#6ccbc7" stroke-width="0.9"/><circle cx="607.83" cy="649.00" r="1.35" fill="#fff" stroke="#6ccbc7" stroke-width="0.9"/><circle cx="614.17" cy="641.90" r="1.35" fill="#fff" stroke="#6ccbc7" stroke-width="0.9"/><circle cx="620.50" cy="649.00" r="1.35" fill="#fff" stroke="#6ccbc7" stroke-width="0.9"/><circle cx="626.83" cy="649.00" r="1.35" fill="#fff" stroke="#6ccbc7" stroke-width="0.9"/><circle cx="633.17" cy="649.00" r="1.35" fill="#fff" stroke="#6ccbc7" stroke-width="0.9"/><circle cx="639.50" cy="649.00" r="1.35" fill="#fff" stroke="#6ccbc7" stroke-width="0.9"/><circle cx="645.83" cy="649.00" r="1.35" fill="#fff" stroke="#6ccbc7" stroke-width="0.9"/><circle cx="652.17" cy="649.00" r="1.35" fill="#fff" stroke="#6ccbc7" stroke-width="0.9"/><circle cx="658.50" cy="649.00" r="1.35" fill="#fff" stroke="#6ccbc7" stroke-width="0.9"/><circle cx="664.83" cy="649.00" r="1.35" fill="#fff" stroke="#6ccbc7" stroke-width="0.9"/><circle cx="671.17" cy="649.00" r="1.35" fill="#fff" stroke="#6ccbc7" stroke-width="0.9"/><circle cx="677.50" cy="649.00" r="1.35" fill="#fff" stroke="#6ccbc7" stroke-width="0.9"/><circle cx="683.83" cy="649.00" r="1.35" fill="#fff" stroke="#6ccbc7" stroke-width="0.9"/><circle cx="690.17" cy="649.00" r="1.35" fill="#fff" stroke="#6ccbc7" stroke-width="0.9"/><circle cx="696.50" cy="649.00" r="1.35" fill="#fff" stroke="#6ccbc7" stroke-width="0.9"/><circle cx="702.83" cy="649.00" r="1.35" fill="#fff" stroke="#6ccbc7" stroke-width="0.9"/><circle cx="709.17" cy="648.05" r="1.35" fill="#fff" stroke="#6ccbc7" stroke-width="0.9"/><circle cx="715.50" cy="649.00" r="1.35" fill="#fff" stroke="#6ccbc7" stroke-width="0.9"/><circle cx="721.83" cy="649.00" r="1.35" fill="#fff" stroke="#6ccbc7" stroke-width="0.9"/><circle cx="728.17" cy="649.00" r="1.35" fill="#fff" stroke="#6ccbc7" stroke-width="0.9"/><circle cx="734.50" cy="649.00" r="1.35" fill="#fff" stroke="#6ccbc7" stroke-width="0.9"/><circle cx="740.83" cy="649.00" r="1.35" fill="#fff" stroke="#6ccbc7" stroke-width="0.9"/><circle cx="747.17" cy="649.00" r="1.35" fill="#fff" stroke="#6ccbc7" stroke-width="0.9"/><circle cx="753.50" cy="649.00" r="1.35" fill="#fff" stroke="#6ccbc7" stroke-width="0.9"/><circle cx="759.83" cy="648.05" r="1.35" fill="#fff" stroke="#6ccbc7" stroke-width="0.9"/><circle cx="766.17" cy="649.00" r="1.35" fill="#fff" stroke="#6ccbc7" stroke-width="0.9"/><circle cx="772.50" cy="649.00" r="1.35" fill="#fff" stroke="#6ccbc7" stroke-width="0.9"/><circle cx="778.83" cy="649.00" r="1.35" fill="#fff" stroke="#6ccbc7" stroke-width="0.9"/><circle cx="785.17" cy="649.00" r="1.35" fill="#fff" stroke="#6ccbc7" stroke-width="0.9"/><circle cx="791.50" cy="649.00" r="1.35" fill="#fff" stroke="#6ccbc7" stroke-width="0.9"/><circle cx="797.83" cy="649.00" r="1.35" fill="#fff" stroke="#6ccbc7" stroke-width="0.9"/><circle cx="804.17" cy="649.00" r="1.35" fill="#fff" stroke="#6ccbc7" stroke-width="0.9"/><circle cx="810.50" cy="649.00" r="1.35" fill="#fff" stroke="#6ccbc7" stroke-width="0.9"/><circle cx="816.83" cy="649.00" r="1.35" fill="#fff" stroke="#6ccbc7" stroke-width="0.9"/><circle cx="823.17" cy="648.53" r="1.35" fill="#fff" stroke="#6ccbc7" stroke-width="0.9"/><circle cx="829.50" cy="649.00" r="1.35" fill="#fff" stroke="#6ccbc7" stroke-width="0.9"/><circle cx="835.83" cy="649.00" r="1.35" fill="#fff" stroke="#6ccbc7" stroke-width="0.9"/><circle cx="842.17" cy="649.00" r="1.35" fill="#fff" stroke="#6ccbc7" stroke-width="0.9"/><circle cx="848.50" cy="649.00" r="1.35" fill="#fff" stroke="#6ccbc7" stroke-width="0.9"/><circle cx="854.83" cy="649.00" r="1.35" fill="#fff" stroke="#6ccbc7" stroke-width="0.9"/><circle cx="861.17" cy="649.00" r="1.35" fill="#fff" stroke="#6ccbc7" stroke-width="0.9"/><circle cx="867.50" cy="649.00" r="1.35" fill="#fff" stroke="#6ccbc7" stroke-width="0.9"/><circle cx="873.83" cy="649.00" r="1.35" fill="#fff" stroke="#6ccbc7" stroke-width="0.9"/><circle cx="880.17" cy="649.00" r="1.35" fill="#fff" stroke="#6ccbc7" stroke-width="0.9"/><circle cx="886.50" cy="648.05" r="1.35" fill="#fff" stroke="#6ccbc7" stroke-width="0.9"/><circle cx="892.83" cy="649.00" r="1.35" fill="#fff" stroke="#6ccbc7" stroke-width="0.9"/><circle cx="899.17" cy="649.00" r="1.35" fill="#fff" stroke="#6ccbc7" stroke-width="0.9"/><circle cx="905.50" cy="649.00" r="1.35" fill="#fff" stroke="#6ccbc7" stroke-width="0.9"/><circle cx="911.83" cy="649.00" r="1.35" fill="#fff" stroke="#6ccbc7" stroke-width="0.9"/><circle cx="918.17" cy="649.00" r="1.35" fill="#fff" stroke="#6ccbc7" stroke-width="0.9"/><circle cx="924.50" cy="649.00" r="1.35" fill="#fff" stroke="#6ccbc7" stroke-width="0.9"/><circle cx="930.83" cy="649.00" r="1.35" fill="#fff" stroke="#6ccbc7" stroke-width="0.9"/><circle cx="937.17" cy="649.00" r="1.35" fill="#fff" stroke="#6ccbc7" stroke-width="0.9"/><circle cx="943.50" cy="649.00" r="1.35" fill="#fff" stroke="#6ccbc7" stroke-width="0.9"/><circle cx="949.83" cy="648.53" r="1.35" fill="#fff" stroke="#6ccbc7" stroke-width="0.9"/><circle cx="956.17" cy="649.00" r="1.35" fill="#fff" stroke="#6ccbc7" stroke-width="0.9"/><circle cx="962.50" cy="649.00" r="1.35" fill="#fff" stroke="#6ccbc7" stroke-width="0.9"/><circle cx="968.83" cy="649.00" r="1.35" fill="#fff" stroke="#6ccbc7" stroke-width="0.9"/><circle cx="975.17" cy="649.00" r="1.35" fill="#fff" stroke="#6ccbc7" stroke-width="0.9"/><circle cx="981.50" cy="649.00" r="1.35" fill="#fff" stroke="#6ccbc7" stroke-width="0.9"/><circle cx="987.83" cy="649.00" r="1.35" fill="#fff" stroke="#6ccbc7" stroke-width="0.9"/><circle cx="994.17" cy="649.00" r="1.35" fill="#fff" stroke="#6ccbc7" stroke-width="0.9"/><circle cx="1000.50" cy="649.00" r="1.35" fill="#fff" stroke="#6ccbc7" stroke-width="0.9"/><circle cx="1006.83" cy="649.00" r="1.35" fill="#fff" stroke="#6ccbc7" stroke-width="0.9"/><circle cx="1013.17" cy="649.00" r="1.35" fill="#fff" stroke="#6ccbc7" stroke-width="0.9"/><circle cx="1019.50" cy="649.00" r="1.35" fill="#fff" stroke="#6ccbc7" stroke-width="0.9"/><circle cx="1025.83" cy="649.00" r="1.35" fill="#fff" stroke="#6ccbc7" stroke-width="0.9"/><circle cx="1032.17" cy="649.00" r="1.35" fill="#fff" stroke="#6ccbc7" stroke-width="0.9"/><circle cx="1038.50" cy="649.00" r="1.35" fill="#fff" stroke="#6ccbc7" stroke-width="0.9"/><circle cx="1044.83" cy="649.00" r="1.35" fill="#fff" stroke="#6ccbc7" stroke-width="0.9"/><circle cx="1051.17" cy="648.53" r="1.35" fill="#fff" stroke="#6ccbc7" stroke-width="0.9"/><circle cx="1057.50" cy="649.00" r="1.35" fill="#fff" stroke="#6ccbc7" stroke-width="0.9"/><circle cx="1063.83" cy="649.00" r="1.35" fill="#fff" stroke="#6ccbc7" stroke-width="0.9"/><circle cx="1070.17" cy="649.00" r="1.35" fill="#fff" stroke="#6ccbc7" stroke-width="0.9"/><circle cx="1076.50" cy="647.11" r="1.35" fill="#fff" stroke="#6ccbc7" stroke-width="0.9"/><circle cx="1082.83" cy="649.00" r="1.35" fill="#fff" stroke="#6ccbc7" stroke-width="0.9"/><circle cx="1089.17" cy="649.00" r="1.35" fill="#fff" stroke="#6ccbc7" stroke-width="0.9"/><circle cx="1095.50" cy="649.00" r="1.35" fill="#fff" stroke="#6ccbc7" stroke-width="0.9"/><circle cx="1101.83" cy="649.00" r="1.35" fill="#fff" stroke="#6ccbc7" stroke-width="0.9"/><circle cx="1108.17" cy="648.05" r="1.35" fill="#fff" stroke="#6ccbc7" stroke-width="0.9"/><circle cx="1114.50" cy="649.00" r="1.35" fill="#fff" stroke="#6ccbc7" stroke-width="0.9"/><circle cx="1120.83" cy="649.00" r="1.35" fill="#fff" stroke="#6ccbc7" stroke-width="0.9"/><circle cx="1127.17" cy="649.00" r="1.35" fill="#fff" stroke="#6ccbc7" stroke-width="0.9"/><circle cx="1133.50" cy="649.00" r="1.35" fill="#fff" stroke="#6ccbc7" stroke-width="0.9"/><circle cx="1139.83" cy="649.00" r="1.35" fill="#fff" stroke="#6ccbc7" stroke-width="0.9"/><circle cx="1146.17" cy="648.05" r="1.35" fill="#fff" stroke="#6ccbc7" stroke-width="0.9"/><circle cx="1152.50" cy="649.00" r="1.35" fill="#fff" stroke="#6ccbc7" stroke-width="0.9"/><circle cx="1158.83" cy="649.00" r="1.35" fill="#fff" stroke="#6ccbc7" stroke-width="0.9"/><circle cx="1165.17" cy="649.00" r="1.35" fill="#fff" stroke="#6ccbc7" stroke-width="0.9"/><circle cx="1171.50" cy="649.00" r="1.35" fill="#fff" stroke="#6ccbc7" stroke-width="0.9"/><circle cx="1177.83" cy="649.00" r="1.35" fill="#fff" stroke="#6ccbc7" stroke-width="0.9"/><circle cx="1184.17" cy="649.00" r="1.35" fill="#fff" stroke="#6ccbc7" stroke-width="0.9"/></svg>
<svg style="left:0;top:0" width="2536" height="1440"><path d="M1207.60 535.50 L1212.40 540.00 L1207.60 544.50" fill="none" stroke="#5a5f66" stroke-width="1.1"/><path d="M1222.00 528.40 H1392.00" stroke="#d6d6d6" stroke-width="1.2"/><path d="M1222.00 563.60 H1392.00" stroke="#d6d6d6" stroke-width="1.2"/><path d="M1222.00 597.50 H1392.00" stroke="#d6d6d6" stroke-width="1.2"/><path d="M1222.00 633.50 H1392.00" stroke="#d6d6d6" stroke-width="1.2"/><circle cx="1234.00" cy="547.90" r="4.1" fill="#6ccbc7"/><circle cx="1234.00" cy="582.00" r="4.1" fill="#6cbf2a"/><circle cx="1234.00" cy="618.00" r="4.1" fill="#ef5040"/></svg>
<svg style="left:0;top:0" width="2536" height="1440"><path d="M1464.50 530.50 H2272.50" stroke="#bdbdbd" stroke-width="1"/><path d="M1464.50 554.50 H2272.50" stroke="#bdbdbd" stroke-width="1"/><path d="M1464.50 578.50 H2272.50" stroke="#bdbdbd" stroke-width="1"/><path d="M1464.50 601.50 H2272.50" stroke="#bdbdbd" stroke-width="1"/><path d="M1464.50 625.50 H2272.50" stroke="#bdbdbd" stroke-width="1"/><path d="M1464.50 649.50 H2272.50" stroke="#bdbdbd" stroke-width="1"/><path d="M1464.50 530.50 V649.50" stroke="#bdbdbd" stroke-width="1"/><path d="M1532.50 530.50 V649.50" stroke="#bdbdbd" stroke-width="1"/><path d="M1600.50 530.50 V649.50" stroke="#bdbdbd" stroke-width="1"/><path d="M1667.50 530.50 V649.50" stroke="#bdbdbd" stroke-width="1"/><path d="M1735.50 530.50 V649.50" stroke="#bdbdbd" stroke-width="1"/><path d="M1803.50 530.50 V649.50" stroke="#bdbdbd" stroke-width="1"/><path d="M1871.50 530.50 V649.50" stroke="#bdbdbd" stroke-width="1"/><path d="M1939.50 530.50 V649.50" stroke="#bdbdbd" stroke-width="1"/><path d="M2006.50 530.50 V649.50" stroke="#bdbdbd" stroke-width="1"/><path d="M2074.50 530.50 V649.50" stroke="#bdbdbd" stroke-width="1"/><path d="M2142.50 530.50 V649.50" stroke="#bdbdbd" stroke-width="1"/><path d="M2210.50 530.50 V649.50" stroke="#bdbdbd" stroke-width="1"/><path d="M2272.50 530.50 V649.50" stroke="#bdbdbd" stroke-width="1"/><path d="M1464.40 649.00 L1470.05 648.53 L1475.70 649.00 L1481.35 649.00 L1487.00 649.00 L1492.65 649.00 L1498.30 649.00 L1503.95 649.00 L1509.60 649.00 L1515.25 649.00 L1520.90 649.00 L1526.55 649.00 L1532.20 649.00 L1537.85 649.00 L1543.50 649.00 L1549.15 649.00 L1554.80 649.00 L1560.45 649.00 L1566.10 649.00 L1571.75 649.00 L1577.40 649.00 L1583.05 649.00 L1588.70 649.00 L1594.35 649.00 L1600.00 649.00 L1605.65 649.00 L1611.30 537.32 L1616.95 649.00 L1622.60 649.00 L1628.25 649.00 L1633.90 649.00 L1639.55 649.00 L1645.20 649.00 L1650.85 649.00 L1656.50 649.00 L1662.15 649.00 L1667.80 649.00 L1673.45 649.00 L1679.10 649.00 L1684.75 649.00 L1690.40 649.00 L1696.05 649.00 L1701.70 649.00 L1707.35 649.00 L1713.00 649.00 L1718.65 649.00 L1724.30 649.00 L1729.95 649.00 L1735.60 649.00 L1741.25 649.00 L1746.90 649.00 L1752.55 649.00 L1758.20 649.00 L1763.85 643.32 L1769.50 649.00 L1775.15 649.00 L1780.80 649.00 L1786.45 649.00 L1792.10 649.00 L1797.75 649.00 L1803.40 649.00 L1809.05 649.00 L1814.70 649.00 L1820.35 649.00 L1826.00 649.00 L1831.65 649.00 L1837.30 649.00 L1842.95 649.00 L1848.60 649.00 L1854.25 649.00 L1859.90 649.00 L1865.55 649.00 L1871.20 649.00 L1876.85 649.00 L1882.50 649.00 L1888.15 649.00 L1893.80 649.00 L1899.45 649.00 L1905.10 649.00 L1910.75 649.00 L1916.40 649.00 L1922.05 649.00 L1927.70 649.00 L1933.35 649.00 L1939.00 649.00 L1944.65 649.00 L1950.30 649.00 L1955.95 649.00 L1961.60 649.00 L1967.25 649.00 L1972.90 649.00 L1978.55 649.00 L1984.20 649.00 L1989.85 649.00 L1995.50 649.00 L2001.15 649.00 L2006.80 649.00 L2012.45 649.00 L2018.10 649.00 L2023.75 649.00 L2029.40 649.00 L2035.05 649.00 L2040.70 649.00 L2046.35 649.00 L2052.00 649.00 L2057.65 649.00 L2063.30 649.00 L2068.95 649.00 L2074.60 649.00 L2080.25 649.00 L2085.90 649.00 L2091.55 649.00 L2097.20 649.00 L2102.85 649.00 L2108.50 649.00 L2114.15 649.00 L2119.80 649.00 L2125.45 649.00 L2131.10 649.00 L2136.75 649.00 L2142.40 649.00 L2148.05 649.00 L2153.70 649.00 L2159.35 649.00 L2165.00 649.00 L2170.65 649.00 L2176.30 648.05 L2181.95 649.00 L2187.60 649.00 L2193.25 649.00 L2198.90 649.00 L2204.55 649.00 L2210.20 649.00 L2215.85 649.00 L2221.50 649.00 L2227.15 649.00 L2232.80 649.00 L2238.45 649.00 L2244.10 649.00 L2249.75 649.00 L2255.40 649.00 L2261.05 649.00 L2266.70 649.00 L2272.35 649.00 L2272.35 649.00 L1464.40 649.00 Z" fill="#f7a5f5" fill-opacity="0.5" stroke="none"/><path d="M1464.40 649.00 L1470.05 648.05 L1475.70 649.00 L1481.35 649.00 L1487.00 649.00 L1492.65 649.00 L1498.30 647.58 L1503.95 649.00 L1509.60 649.00 L1515.25 649.00 L1520.90 649.00 L1526.55 649.00 L1532.20 648.05 L1537.85 649.00 L1543.50 649.00 L1549.15 649.00 L1554.80 649.00 L1560.45 649.00 L1566.10 649.00 L1571.75 649.00 L1577.40 649.00 L1583.05 649.00 L1588.70 649.00 L1594.35 649.00 L1600.00 649.00 L1605.65 649.00 L1611.30 535.43 L1616.95 649.00 L1622.60 649.00 L1628.25 647.11 L1633.90 649.00 L1639.55 649.00 L1645.20 622.50 L1650.85 649.00 L1656.50 646.63 L1662.15 647.58 L1667.80 649.00 L1673.45 649.00 L1679.10 649.00 L1684.75 649.00 L1690.40 649.00 L1696.05 649.00 L1701.70 640.01 L1707.35 632.44 L1713.00 649.00 L1718.65 649.00 L1724.30 649.00 L1729.95 649.00 L1735.60 648.05 L1741.25 648.05 L1746.90 649.00 L1752.55 649.00 L1758.20 649.00 L1763.85 641.90 L1769.50 649.00 L1775.15 649.00 L1780.80 649.00 L1786.45 649.00 L1792.10 649.00 L1797.75 649.00 L1803.40 649.00 L1809.05 649.00 L1814.70 649.00 L1820.35 649.00 L1826.00 649.00 L1831.65 649.00 L1837.30 649.00 L1842.95 649.00 L1848.60 648.05 L1854.25 649.00 L1859.90 649.00 L1865.55 649.00 L1871.20 649.00 L1876.85 649.00 L1882.50 649.00 L1888.15 649.00 L1893.80 648.05 L1899.45 649.00 L1905.10 649.00 L1910.75 649.00 L1916.40 649.00 L1922.05 649.00 L1927.70 649.00 L1933.35 649.00 L1939.00 649.00 L1944.65 649.00 L1950.30 648.53 L1955.95 649.00 L1961.60 649.00 L1967.25 649.00 L1972.90 649.00 L1978.55 649.00 L1984.20 649.00 L1989.85 649.00 L1995.50 649.00 L2001.15 649.00 L2006.80 648.05 L2012.45 649.00 L2018.10 649.00 L2023.75 649.00 L2029.40 649.00 L2035.05 649.00 L2040.70 649.00 L2046.35 649.00 L2052.00 649.00 L2057.65 649.00 L2063.30 648.53 L2068.95 649.00 L2074.60 649.00 L2080.25 649.00 L2085.90 649.00 L2091.55 649.00 L2097.20 649.00 L2102.85 649.00 L2108.50 649.00 L2114.15 649.00 L2119.80 649.00 L2125.45 649.00 L2131.10 649.00 L2136.75 649.00 L2142.40 649.00 L2148.05 649.00 L2153.70 648.53 L2159.35 649.00 L2165.00 649.00 L2170.65 649.00 L2176.30 647.11 L2181.95 649.00 L2187.60 649.00 L2193.25 649.00 L2198.90 649.00 L2204.55 648.05 L2210.20 649.00 L2215.85 649.00 L2221.50 649.00 L2227.15 649.00 L2232.80 649.00 L2238.45 648.05 L2244.10 649.00 L2249.75 649.00 L2255.40 649.00 L2261.05 649.00 L2266.70 649.00 L2272.35 649.00 L2272.35 649.00 L1464.40 649.00 Z" fill="#6ccbc7" fill-opacity="0.5" stroke="none"/><path d="M1464.40 649.00 L1470.05 648.53 L1475.70 649.00 L1481.35 649.00 L1487.00 649.00 L1492.65 649.00 L1498.30 649.00 L1503.95 649.00 L1509.60 649.00 L1515.25 649.00 L1520.90 649.00 L1526.55 649.00 L1532.20 649.00 L1537.85 649.00 L1543.50 649.00 L1549.15 649.00 L1554.80 649.00 L1560.45 649.00 L1566.10 649.00 L1571.75 649.00 L1577.40 649.00 L1583.05 649.00 L1588.70 649.00 L1594.35 649.00 L1600.00 649.00 L1605.65 649.00 L1611.30 537.32 L1616.95 649.00 L1622.60 649.00 L1628.25 649.00 L1633.90 649.00 L1639.55 649.00 L1645.20 649.00 L1650.85 649.00 L1656.50 649.00 L1662.15 649.00 L1667.80 649.00 L1673.45 649.00 L1679.10 649.00 L1684.75 649.00 L1690.40 649.00 L1696.05 649.00 L1701.70 649.00 L1707.35 649.00 L1713.00 649.00 L1718.65 649.00 L1724.30 649.00 L1729.95 649.00 L1735.60 649.00 L1741.25 649.00 L1746.90 649.00 L1752.55 649.00 L1758.20 649.00 L1763.85 643.32 L1769.50 649.00 L1775.15 649.00 L1780.80 649.00 L1786.45 649.00 L1792.10 649.00 L1797.75 649.00 L1803.40 649.00 L1809.05 649.00 L1814.70 649.00 L1820.35 649.00 L1826.00 649.00 L1831.65 649.00 L1837.30 649.00 L1842.95 649.00 L1848.60 649.00 L1854.25 649.00 L1859.90 649.00 L1865.55 649.00 L1871.20 649.00 L1876.85 649.00 L1882.50 649.00 L1888.15 649.00 L1893.80 649.00 L1899.45 649.00 L1905.10 649.00 L1910.75 649.00 L1916.40 649.00 L1922.05 649.00 L1927.70 649.00 L1933.35 649.00 L1939.00 649.00 L1944.65 649.00 L1950.30 649.00 L1955.95 649.00 L1961.60 649.00 L1967.25 649.00 L1972.90 649.00 L1978.55 649.00 L1984.20 649.00 L1989.85 649.00 L1995.50 649.00 L2001.15 649.00 L2006.80 649.00 L2012.45 649.00 L2018.10 649.00 L2023.75 649.00 L2029.40 649.00 L2035.05 649.00 L2040.70 649.00 L2046.35 649.00 L2052.00 649.00 L2057.65 649.00 L2063.30 649.00 L2068.95 649.00 L2074.60 649.00 L2080.25 649.00 L2085.90 649.00 L2091.55 649.00 L2097.20 649.00 L2102.85 649.00 L2108.50 649.00 L2114.15 649.00 L2119.80 649.00 L2125.45 649.00 L2131.10 649.00 L2136.75 649.00 L2142.40 649.00 L2148.05 649.00 L2153.70 649.00 L2159.35 649.00 L2165.00 649.00 L2170.65 649.00 L2176.30 648.05 L2181.95 649.00 L2187.60 649.00 L2193.25 649.00 L2198.90 649.00 L2204.55 649.00 L2210.20 649.00 L2215.85 649.00 L2221.50 649.00 L2227.15 649.00 L2232.80 649.00 L2238.45 649.00 L2244.10 649.00 L2249.75 649.00 L2255.40 649.00 L2261.05 649.00 L2266.70 649.00 L2272.35 649.00" fill="none" stroke="#f7a5f5" stroke-width="1.3"/><circle cx="1464.40" cy="649.00" r="1.35" fill="#fff" stroke="#f7a5f5" stroke-width="0.9"/><circle cx="1470.05" cy="648.53" r="1.35" fill="#fff" stroke="#f7a5f5" stroke-width="0.9"/><circle cx="1475.70" cy="649.00" r="1.35" fill="#fff" stroke="#f7a5f5" stroke-width="0.9"/><circle cx="1481.35" cy="649.00" r="1.35" fill="#fff" stroke="#f7a5f5" stroke-width="0.9"/><circle cx="1487.00" cy="649.00" r="1.35" fill="#fff" stroke="#f7a5f5" stroke-width="0.9"/><circle cx="1492.65" cy="649.00" r="1.35" fill="#fff" stroke="#f7a5f5" stroke-width="0.9"/><circle cx="1498.30" cy="649.00" r="1.35" fill="#fff" stroke="#f7a5f5" stroke-width="0.9"/><circle cx="1503.95" cy="649.00" r="1.35" fill="#fff" stroke="#f7a5f5" stroke-width="0.9"/><circle cx="1509.60" cy="649.00" r="1.35" fill="#fff" stroke="#f7a5f5" stroke-width="0.9"/><circle cx="1515.25" cy="649.00" r="1.35" fill="#fff" stroke="#f7a5f5" stroke-width="0.9"/><circle cx="1520.90" cy="649.00" r="1.35" fill="#fff" stroke="#f7a5f5" stroke-width="0.9"/><circle cx="1526.55" cy="649.00" r="1.35" fill="#fff" stroke="#f7a5f5" stroke-width="0.9"/><circle cx="1532.20" cy="649.00" r="1.35" fill="#fff" stroke="#f7a5f5" stroke-width="0.9"/><circle cx="1537.85" cy="649.00" r="1.35" fill="#fff" stroke="#f7a5f5" stroke-width="0.9"/><circle cx="1543.50" cy="649.00" r="1.35" fill="#fff" stroke="#f7a5f5" stroke-width="0.9"/><circle cx="1549.15" cy="649.00" r="1.35" fill="#fff" stroke="#f7a5f5" stroke-width="0.9"/><circle cx="1554.80" cy="649.00" r="1.35" fill="#fff" stroke="#f7a5f5" stroke-width="0.9"/><circle cx="1560.45" cy="649.00" r="1.35" fill="#fff" stroke="#f7a5f5" stroke-width="0.9"/><circle cx="1566.10" cy="649.00" r="1.35" fill="#fff" stroke="#f7a5f5" stroke-width="0.9"/><circle cx="1571.75" cy="649.00" r="1.35" fill="#fff" stroke="#f7a5f5" stroke-width="0.9"/><circle cx="1577.40" cy="649.00" r="1.35" fill="#fff" stroke="#f7a5f5" stroke-width="0.9"/><circle cx="1583.05" cy="649.00" r="1.35" fill="#fff" stroke="#f7a5f5" stroke-width="0.9"/><circle cx="1588.70" cy="649.00" r="1.35" fill="#fff" stroke="#f7a5f5" stroke-width="0.9"/><circle cx="1594.35" cy="649.00" r="1.35" fill="#fff" stroke="#f7a5f5" stroke-width="0.9"/><circle cx="1600.00" cy="649.00" r="1.35" fill="#fff" stroke="#f7a5f5" stroke-width="0.9"/><circle cx="1605.65" cy="649.00" r="1.35" fill="#fff" stroke="#f7a5f5" stroke-width="0.9"/><circle cx="1611.30" cy="537.32" r="1.35" fill="#fff" stroke="#f7a5f5" stroke-width="0.9"/><circle cx="1616.95" cy="649.00" r="1.35" fill="#fff" stroke="#f7a5f5" stroke-width="0.9"/><circle cx="1622.60" cy="649.00" r="1.35" fill="#fff" stroke="#f7a5f5" stroke-width="0.9"/><circle cx="1628.25" cy="649.00" r="1.35" fill="#fff" stroke="#f7a5f5" stroke-width="0.9"/><circle cx="1633.90" cy="649.00" r="1.35" fill="#fff" stroke="#f7a5f5" stroke-width="0.9"/><circle cx="1639.55" cy="649.00" r="1.35" fill="#fff" stroke="#f7a5f5" stroke-width="0.9"/><circle cx="1645.20" cy="649.00" r="1.35" fill="#fff" stroke="#f7a5f5" stroke-width="0.9"/><circle cx="1650.85" cy="649.00" r="1.35" fill="#fff" stroke="#f7a5f5" stroke-width="0.9"/><circle cx="1656.50" cy="649.00" r="1.35" fill="#fff" stroke="#f7a5f5" stroke-width="0.9"/><circle cx="1662.15" cy="649.00" r="1.35" fill="#fff" stroke="#f7a5f5" stroke-width="0.9"/><circle cx="1667.80" cy="649.00" r="1.35" fill="#fff" stroke="#f7a5f5" stroke-width="0.9"/><circle cx="1673.45" cy="649.00" r="1.35" fill="#fff" stroke="#f7a5f5" stroke-width="0.9"/><circle cx="1679.10" cy="649.00" r="1.35" fill="#fff" stroke="#f7a5f5" stroke-width="0.9"/><circle cx="1684.75" cy="649.00" r="1.35" fill="#fff" stroke="#f7a5f5" stroke-width="0.9"/><circle cx="1690.40" cy="649.00" r="1.35" fill="#fff" stroke="#f7a5f5" stroke-width="0.9"/><circle cx="1696.05" cy="649.00" r="1.35" fill="#fff" stroke="#f7a5f5" stroke-width="0.9"/><circle cx="1701.70" cy="649.00" r="1.35" fill="#fff" stroke="#f7a5f5" stroke-width="0.9"/><circle cx="1707.35" cy="649.00" r="1.35" fill="#fff" stroke="#f7a5f5" stroke-width="0.9"/><circle cx="1713.00" cy="649.00" r="1.35" fill="#fff" stroke="#f7a5f5" stroke-width="0.9"/><circle cx="1718.65" cy="649.00" r="1.35" fill="#fff" stroke="#f7a5f5" stroke-width="0.9"/><circle cx="1724.30" cy="649.00" r="1.35" fill="#fff" stroke="#f7a5f5" stroke-width="0.9"/><circle cx="1729.95" cy="649.00" r="1.35" fill="#fff" stroke="#f7a5f5" stroke-width="0.9"/><circle cx="1735.60" cy="649.00" r="1.35" fill="#fff" stroke="#f7a5f5" stroke-width="0.9"/><circle cx="1741.25" cy="649.00" r="1.35" fill="#fff" stroke="#f7a5f5" stroke-width="0.9"/><circle cx="1746.90" cy="649.00" r="1.35" fill="#fff" stroke="#f7a5f5" stroke-width="0.9"/><circle cx="1752.55" cy="649.00" r="1.35" fill="#fff" stroke="#f7a5f5" stroke-width="0.9"/><circle cx="1758.20" cy="649.00" r="1.35" fill="#fff" stroke="#f7a5f5" stroke-width="0.9"/><circle cx="1763.85" cy="643.32" r="1.35" fill="#fff" stroke="#f7a5f5" stroke-width="0.9"/><circle cx="1769.50" cy="649.00" r="1.35" fill="#fff" stroke="#f7a5f5" stroke-width="0.9"/><circle cx="1775.15" cy="649.00" r="1.35" fill="#fff" stroke="#f7a5f5" stroke-width="0.9"/><circle cx="1780.80" cy="649.00" r="1.35" fill="#fff" stroke="#f7a5f5" stroke-width="0.9"/><circle cx="1786.45" cy="649.00" r="1.35" fill="#fff" stroke="#f7a5f5" stroke-width="0.9"/><circle cx="1792.10" cy="649.00" r="1.35" fill="#fff" stroke="#f7a5f5" stroke-width="0.9"/><circle cx="1797.75" cy="649.00" r="1.35" fill="#fff" stroke="#f7a5f5" stroke-width="0.9"/><circle cx="1803.40" cy="649.00" r="1.35" fill="#fff" stroke="#f7a5f5" stroke-width="0.9"/><circle cx="1809.05" cy="649.00" r="1.35" fill="#fff" stroke="#f7a5f5" stroke-width="0.9"/><circle cx="1814.70" cy="649.00" r="1.35" fill="#fff" stroke="#f7a5f5" stroke-width="0.9"/><circle cx="1820.35" cy="649.00" r="1.35" fill="#fff" stroke="#f7a5f5" stroke-width="0.9"/><circle cx="1826.00" cy="649.00" r="1.35" fill="#fff" stroke="#f7a5f5" stroke-width="0.9"/><circle cx="1831.65" cy="649.00" r="1.35" fill="#fff" stroke="#f7a5f5" stroke-width="0.9"/><circle cx="1837.30" cy="649.00" r="1.35" fill="#fff" stroke="#f7a5f5" stroke-width="0.9"/><circle cx="1842.95" cy="649.00" r="1.35" fill="#fff" stroke="#f7a5f5" stroke-width="0.9"/><circle cx="1848.60" cy="649.00" r="1.35" fill="#fff" stroke="#f7a5f5" stroke-width="0.9"/><circle cx="1854.25" cy="649.00" r="1.35" fill="#fff" stroke="#f7a5f5" stroke-width="0.9"/><circle cx="1859.90" cy="649.00" r="1.35" fill="#fff" stroke="#f7a5f5" stroke-width="0.9"/><circle cx="1865.55" cy="649.00" r="1.35" fill="#fff" stroke="#f7a5f5" stroke-width="0.9"/><circle cx="1871.20" cy="649.00" r="1.35" fill="#fff" stroke="#f7a5f5" stroke-width="0.9"/><circle cx="1876.85" cy="649.00" r="1.35" fill="#fff" stroke="#f7a5f5" stroke-width="0.9"/><circle cx="1882.50" cy="649.00" r="1.35" fill="#fff" stroke="#f7a5f5" stroke-width="0.9"/><circle cx="1888.15" cy="649.00" r="1.35" fill="#fff" stroke="#f7a5f5" stroke-width="0.9"/><circle cx="1893.80" cy="649.00" r="1.35" fill="#fff" stroke="#f7a5f5" stroke-width="0.9"/><circle cx="1899.45" cy="649.00" r="1.35" fill="#fff" stroke="#f7a5f5" stroke-width="0.9"/><circle cx="1905.10" cy="649.00" r="1.35" fill="#fff" stroke="#f7a5f5" stroke-width="0.9"/><circle cx="1910.75" cy="649.00" r="1.35" fill="#fff" stroke="#f7a5f5" stroke-width="0.9"/><circle cx="1916.40" cy="649.00" r="1.35" fill="#fff" stroke="#f7a5f5" stroke-width="0.9"/><circle cx="1922.05" cy="649.00" r="1.35" fill="#fff" stroke="#f7a5f5" stroke-width="0.9"/><circle cx="1927.70" cy="649.00" r="1.35" fill="#fff" stroke="#f7a5f5" stroke-width="0.9"/><circle cx="1933.35" cy="649.00" r="1.35" fill="#fff" stroke="#f7a5f5" stroke-width="0.9"/><circle cx="1939.00" cy="649.00" r="1.35" fill="#fff" stroke="#f7a5f5" stroke-width="0.9"/><circle cx="1944.65" cy="649.00" r="1.35" fill="#fff" stroke="#f7a5f5" stroke-width="0.9"/><circle cx="1950.30" cy="649.00" r="1.35" fill="#fff" stroke="#f7a5f5" stroke-width="0.9"/><circle cx="1955.95" cy="649.00" r="1.35" fill="#fff" stroke="#f7a5f5" stroke-width="0.9"/><circle cx="1961.60" cy="649.00" r="1.35" fill="#fff" stroke="#f7a5f5" stroke-width="0.9"/><circle cx="1967.25" cy="649.00" r="1.35" fill="#fff" stroke="#f7a5f5" stroke-width="0.9"/><circle cx="1972.90" cy="649.00" r="1.35" fill="#fff" stroke="#f7a5f5" stroke-width="0.9"/><circle cx="1978.55" cy="649.00" r="1.35" fill="#fff" stroke="#f7a5f5" stroke-width="0.9"/><circle cx="1984.20" cy="649.00" r="1.35" fill="#fff" stroke="#f7a5f5" stroke-width="0.9"/><circle cx="1989.85" cy="649.00" r="1.35" fill="#fff" stroke="#f7a5f5" stroke-width="0.9"/><circle cx="1995.50" cy="649.00" r="1.35" fill="#fff" stroke="#f7a5f5" stroke-width="0.9"/><circle cx="2001.15" cy="649.00" r="1.35" fill="#fff" stroke="#f7a5f5" stroke-width="0.9"/><circle cx="2006.80" cy="649.00" r="1.35" fill="#fff" stroke="#f7a5f5" stroke-width="0.9"/><circle cx="2012.45" cy="649.00" r="1.35" fill="#fff" stroke="#f7a5f5" stroke-width="0.9"/><circle cx="2018.10" cy="649.00" r="1.35" fill="#fff" stroke="#f7a5f5" stroke-width="0.9"/><circle cx="2023.75" cy="649.00" r="1.35" fill="#fff" stroke="#f7a5f5" stroke-width="0.9"/><circle cx="2029.40" cy="649.00" r="1.35" fill="#fff" stroke="#f7a5f5" stroke-width="0.9"/><circle cx="2035.05" cy="649.00" r="1.35" fill="#fff" stroke="#f7a5f5" stroke-width="0.9"/><circle cx="2040.70" cy="649.00" r="1.35" fill="#fff" stroke="#f7a5f5" stroke-width="0.9"/><circle cx="2046.35" cy="649.00" r="1.35" fill="#fff" stroke="#f7a5f5" stroke-width="0.9"/><circle cx="2052.00" cy="649.00" r="1.35" fill="#fff" stroke="#f7a5f5" stroke-width="0.9"/><circle cx="2057.65" cy="649.00" r="1.35" fill="#fff" stroke="#f7a5f5" stroke-width="0.9"/><circle cx="2063.30" cy="649.00" r="1.35" fill="#fff" stroke="#f7a5f5" stroke-width="0.9"/><circle cx="2068.95" cy="649.00" r="1.35" fill="#fff" stroke="#f7a5f5" stroke-width="0.9"/><circle cx="2074.60" cy="649.00" r="1.35" fill="#fff" stroke="#f7a5f5" stroke-width="0.9"/><circle cx="2080.25" cy="649.00" r="1.35" fill="#fff" stroke="#f7a5f5" stroke-width="0.9"/><circle cx="2085.90" cy="649.00" r="1.35" fill="#fff" stroke="#f7a5f5" stroke-width="0.9"/><circle cx="2091.55" cy="649.00" r="1.35" fill="#fff" stroke="#f7a5f5" stroke-width="0.9"/><circle cx="2097.20" cy="649.00" r="1.35" fill="#fff" stroke="#f7a5f5" stroke-width="0.9"/><circle cx="2102.85" cy="649.00" r="1.35" fill="#fff" stroke="#f7a5f5" stroke-width="0.9"/><circle cx="2108.50" cy="649.00" r="1.35" fill="#fff" stroke="#f7a5f5" stroke-width="0.9"/><circle cx="2114.15" cy="649.00" r="1.35" fill="#fff" stroke="#f7a5f5" stroke-width="0.9"/><circle cx="2119.80" cy="649.00" r="1.35" fill="#fff" stroke="#f7a5f5" stroke-width="0.9"/><circle cx="2125.45" cy="649.00" r="1.35" fill="#fff" stroke="#f7a5f5" stroke-width="0.9"/><circle cx="2131.10" cy="649.00" r="1.35" fill="#fff" stroke="#f7a5f5" stroke-width="0.9"/><circle cx="2136.75" cy="649.00" r="1.35" fill="#fff" stroke="#f7a5f5" stroke-width="0.9"/><circle cx="2142.40" cy="649.00" r="1.35" fill="#fff" stroke="#f7a5f5" stroke-width="0.9"/><circle cx="2148.05" cy="649.00" r="1.35" fill="#fff" stroke="#f7a5f5" stroke-width="0.9"/><circle cx="2153.70" cy="649.00" r="1.35" fill="#fff" stroke="#f7a5f5" stroke-width="0.9"/><circle cx="2159.35" cy="649.00" r="1.35" fill="#fff" stroke="#f7a5f5" stroke-width="0.9"/><circle cx="2165.00" cy="649.00" r="1.35" fill="#fff" stroke="#f7a5f5" stroke-width="0.9"/><circle cx="2170.65" cy="649.00" r="1.35" fill="#fff" stroke="#f7a5f5" stroke-width="0.9"/><circle cx="2176.30" cy="648.05" r="1.35" fill="#fff" stroke="#f7a5f5" stroke-width="0.9"/><circle cx="2181.95" cy="649.00" r="1.35" fill="#fff" stroke="#f7a5f5" stroke-width="0.9"/><circle cx="2187.60" cy="649.00" r="1.35" fill="#fff" stroke="#f7a5f5" stroke-width="0.9"/><circle cx="2193.25" cy="649.00" r="1.35" fill="#fff" stroke="#f7a5f5" stroke-width="0.9"/><circle cx="2198.90" cy="649.00" r="1.35" fill="#fff" stroke="#f7a5f5" stroke-width="0.9"/><circle cx="2204.55" cy="649.00" r="1.35" fill="#fff" stroke="#f7a5f5" stroke-width="0.9"/><circle cx="2210.20" cy="649.00" r="1.35" fill="#fff" stroke="#f7a5f5" stroke-width="0.9"/><circle cx="2215.85" cy="649.00" r="1.35" fill="#fff" stroke="#f7a5f5" stroke-width="0.9"/><circle cx="2221.50" cy="649.00" r="1.35" fill="#fff" stroke="#f7a5f5" stroke-width="0.9"/><circle cx="2227.15" cy="649.00" r="1.35" fill="#fff" stroke="#f7a5f5" stroke-width="0.9"/><circle cx="2232.80" cy="649.00" r="1.35" fill="#fff" stroke="#f7a5f5" stroke-width="0.9"/><circle cx="2238.45" cy="649.00" r="1.35" fill="#fff" stroke="#f7a5f5" stroke-width="0.9"/><circle cx="2244.10" cy="649.00" r="1.35" fill="#fff" stroke="#f7a5f5" stroke-width="0.9"/><circle cx="2249.75" cy="649.00" r="1.35" fill="#fff" stroke="#f7a5f5" stroke-width="0.9"/><circle cx="2255.40" cy="649.00" r="1.35" fill="#fff" stroke="#f7a5f5" stroke-width="0.9"/><circle cx="2261.05" cy="649.00" r="1.35" fill="#fff" stroke="#f7a5f5" stroke-width="0.9"/><circle cx="2266.70" cy="649.00" r="1.35" fill="#fff" stroke="#f7a5f5" stroke-width="0.9"/><circle cx="2272.35" cy="649.00" r="1.35" fill="#fff" stroke="#f7a5f5" stroke-width="0.9"/><path d="M1464.40 649.00 L1470.05 648.05 L1475.70 649.00 L1481.35 649.00 L1487.00 649.00 L1492.65 649.00 L1498.30 647.58 L1503.95 649.00 L1509.60 649.00 L1515.25 649.00 L1520.90 649.00 L1526.55 649.00 L1532.20 648.05 L1537.85 649.00 L1543.50 649.00 L1549.15 649.00 L1554.80 649.00 L1560.45 649.00 L1566.10 649.00 L1571.75 649.00 L1577.40 649.00 L1583.05 649.00 L1588.70 649.00 L1594.35 649.00 L1600.00 649.00 L1605.65 649.00 L1611.30 535.43 L1616.95 649.00 L1622.60 649.00 L1628.25 647.11 L1633.90 649.00 L1639.55 649.00 L1645.20 622.50 L1650.85 649.00 L1656.50 646.63 L1662.15 647.58 L1667.80 649.00 L1673.45 649.00 L1679.10 649.00 L1684.75 649.00 L1690.40 649.00 L1696.05 649.00 L1701.70 640.01 L1707.35 632.44 L1713.00 649.00 L1718.65 649.00 L1724.30 649.00 L1729.95 649.00 L1735.60 648.05 L1741.25 648.05 L1746.90 649.00 L1752.55 649.00 L1758.20 649.00 L1763.85 641.90 L1769.50 649.00 L1775.15 649.00 L1780.80 649.00 L1786.45 649.00 L1792.10 649.00 L1797.75 649.00 L1803.40 649.00 L1809.05 649.00 L1814.70 649.00 L1820.35 649.00 L1826.00 649.00 L1831.65 649.00 L1837.30 649.00 L1842.95 649.00 L1848.60 648.05 L1854.25 649.00 L1859.90 649.00 L1865.55 649.00 L1871.20 649.00 L1876.85 649.00 L1882.50 649.00 L1888.15 649.00 L1893.80 648.05 L1899.45 649.00 L1905.10 649.00 L1910.75 649.00 L1916.40 649.00 L1922.05 649.00 L1927.70 649.00 L1933.35 649.00 L1939.00 649.00 L1944.65 649.00 L1950.30 648.53 L1955.95 649.00 L1961.60 649.00 L1967.25 649.00 L1972.90 649.00 L1978.55 649.00 L1984.20 649.00 L1989.85 649.00 L1995.50 649.00 L2001.15 649.00 L2006.80 648.05 L2012.45 649.00 L2018.10 649.00 L2023.75 649.00 L2029.40 649.00 L2035.05 649.00 L2040.70 649.00 L2046.35 649.00 L2052.00 649.00 L2057.65 649.00 L2063.30 648.53 L2068.95 649.00 L2074.60 649.00 L2080.25 649.00 L2085.90 649.00 L2091.55 649.00 L2097.20 649.00 L2102.85 649.00 L2108.50 649.00 L2114.15 649.00 L2119.80 649.00 L2125.45 649.00 L2131.10 649.00 L2136.75 649.00 L2142.40 649.00 L2148.05 649.00 L2153.70 648.53 L2159.35 649.00 L2165.00 649.00 L2170.65 649.00 L2176.30 647.11 L2181.95 649.00 L2187.60 649.00 L2193.25 649.00 L2198.90 649.00 L2204.55 648.05 L2210.20 649.00 L2215.85 649.00 L2221.50 649.00 L2227.15 649.00 L2232.80 649.00 L2238.45 648.05 L2244.10 649.00 L2249.75 649.00 L2255.40 649.00 L2261.05 649.00 L2266.70 649.00 L2272.35 649.00" fill="none" stroke="#6ccbc7" stroke-width="1.3"/><circle cx="1464.40" cy="649.00" r="1.35" fill="#fff" stroke="#6ccbc7" stroke-width="0.9"/><circle cx="1470.05" cy="648.05" r="1.35" fill="#fff" stroke="#6ccbc7" stroke-width="0.9"/><circle cx="1475.70" cy="649.00" r="1.35" fill="#fff" stroke="#6ccbc7" stroke-width="0.9"/><circle cx="1481.35" cy="649.00" r="1.35" fill="#fff" stroke="#6ccbc7" stroke-width="0.9"/><circle cx="1487.00" cy="649.00" r="1.35" fill="#fff" stroke="#6ccbc7" stroke-width="0.9"/><circle cx="1492.65" cy="649.00" r="1.35" fill="#fff" stroke="#6ccbc7" stroke-width="0.9"/><circle cx="1498.30" cy="647.58" r="1.35" fill="#fff" stroke="#6ccbc7" stroke-width="0.9"/><circle cx="1503.95" cy="649.00" r="1.35" fill="#fff" stroke="#6ccbc7" stroke-width="0.9"/><circle cx="1509.60" cy="649.00" r="1.35" fill="#fff" stroke="#6ccbc7" stroke-width="0.9"/><circle cx="1515.25" cy="649.00" r="1.35" fill="#fff" stroke="#6ccbc7" stroke-width="0.9"/><circle cx="1520.90" cy="649.00" r="1.35" fill="#fff" stroke="#6ccbc7" stroke-width="0.9"/><circle cx="1526.55" cy="649.00" r="1.35" fill="#fff" stroke="#6ccbc7" stroke-width="0.9"/><circle cx="1532.20" cy="648.05" r="1.35" fill="#fff" stroke="#6ccbc7" stroke-width="0.9"/><circle cx="1537.85" cy="649.00" r="1.35" fill="#fff" stroke="#6ccbc7" stroke-width="0.9"/><circle cx="1543.50" cy="649.00" r="1.35" fill="#fff" stroke="#6ccbc7" stroke-width="0.9"/><circle cx="1549.15" cy="649.00" r="1.35" fill="#fff" stroke="#6ccbc7" stroke-width="0.9"/><circle cx="1554.80" cy="649.00" r="1.35" fill="#fff" stroke="#6ccbc7" stroke-width="0.9"/><circle cx="1560.45" cy="649.00" r="1.35" fill="#fff" stroke="#6ccbc7" stroke-width="0.9"/><circle cx="1566.10" cy="649.00" r="1.35" fill="#fff" stroke="#6ccbc7" stroke-width="0.9"/><circle cx="1571.75" cy="649.00" r="1.35" fill="#fff" stroke="#6ccbc7" stroke-width="0.9"/><circle cx="1577.40" cy="649.00" r="1.35" fill="#fff" stroke="#6ccbc7" stroke-width="0.9"/><circle cx="1583.05" cy="649.00" r="1.35" fill="#fff" stroke="#6ccbc7" stroke-width="0.9"/><circle cx="1588.70" cy="649.00" r="1.35" fill="#fff" stroke="#6ccbc7" stroke-width="0.9"/><circle cx="1594.35" cy="649.00" r="1.35" fill="#fff" stroke="#6ccbc7" stroke-width="0.9"/><circle cx="1600.00" cy="649.00" r="1.35" fill="#fff" stroke="#6ccbc7" stroke-width="0.9"/><circle cx="1605.65" cy="649.00" r="1.35" fill="#fff" stroke="#6ccbc7" stroke-width="0.9"/><circle cx="1611.30" cy="535.43" r="1.35" fill="#fff" stroke="#6ccbc7" stroke-width="0.9"/><circle cx="1616.95" cy="649.00" r="1.35" fill="#fff" stroke="#6ccbc7" stroke-width="0.9"/><circle cx="1622.60" cy="649.00" r="1.35" fill="#fff" stroke="#6ccbc7" stroke-width="0.9"/><circle cx="1628.25" cy="647.11" r="1.35" fill="#fff" stroke="#6ccbc7" stroke-width="0.9"/><circle cx="1633.90" cy="649.00" r="1.35" fill="#fff" stroke="#6ccbc7" stroke-width="0.9"/><circle cx="1639.55" cy="649.00" r="1.35" fill="#fff" stroke="#6ccbc7" stroke-width="0.9"/><circle cx="1645.20" cy="622.50" r="1.35" fill="#fff" stroke="#6ccbc7" stroke-width="0.9"/><circle cx="1650.85" cy="649.00" r="1.35" fill="#fff" stroke="#6ccbc7" stroke-width="0.9"/><circle cx="1656.50" cy="646.63" r="1.35" fill="#fff" stroke="#6ccbc7" stroke-width="0.9"/><circle cx="1662.15" cy="647.58" r="1.35" fill="#fff" stroke="#6ccbc7" stroke-width="0.9"/><circle cx="1667.80" cy="649.00" r="1.35" fill="#fff" stroke="#6ccbc7" stroke-width="0.9"/><circle cx="1673.45" cy="649.00" r="1.35" fill="#fff" stroke="#6ccbc7" stroke-width="0.9"/><circle cx="1679.10" cy="649.00" r="1.35" fill="#fff" stroke="#6ccbc7" stroke-width="0.9"/><circle cx="1684.75" cy="649.00" r="1.35" fill="#fff" stroke="#6ccbc7" stroke-width="0.9"/><circle cx="1690.40" cy="649.00" r="1.35" fill="#fff" stroke="#6ccbc7" stroke-width="0.9"/><circle cx="1696.05" cy="649.00" r="1.35" fill="#fff" stroke="#6ccbc7" stroke-width="0.9"/><circle cx="1701.70" cy="640.01" r="1.35" fill="#fff" stroke="#6ccbc7" stroke-width="0.9"/><circle cx="1707.35" cy="632.44" r="1.35" fill="#fff" stroke="#6ccbc7" stroke-width="0.9"/><circle cx="1713.00" cy="649.00" r="1.35" fill="#fff" stroke="#6ccbc7" stroke-width="0.9"/><circle cx="1718.65" cy="649.00" r="1.35" fill="#fff" stroke="#6ccbc7" stroke-width="0.9"/><circle cx="1724.30" cy="649.00" r="1.35" fill="#fff" stroke="#6ccbc7" stroke-width="0.9"/><circle cx="1729.95" cy="649.00" r="1.35" fill="#fff" stroke="#6ccbc7" stroke-width="0.9"/><circle cx="1735.60" cy="648.05" r="1.35" fill="#fff" stroke="#6ccbc7" stroke-width="0.9"/><circle cx="1741.25" cy="648.05" r="1.35" fill="#fff" stroke="#6ccbc7" stroke-width="0.9"/><circle cx="1746.90" cy="649.00" r="1.35" fill="#fff" stroke="#6ccbc7" stroke-width="0.9"/><circle cx="1752.55" cy="649.00" r="1.35" fill="#fff" stroke="#6ccbc7" stroke-width="0.9"/><circle cx="1758.20" cy="649.00" r="1.35" fill="#fff" stroke="#6ccbc7" stroke-width="0.9"/><circle cx="1763.85" cy="641.90" r="1.35" fill="#fff" stroke="#6ccbc7" stroke-width="0.9"/><circle cx="1769.50" cy="649.00" r="1.35" fill="#fff" stroke="#6ccbc7" stroke-width="0.9"/><circle cx="1775.15" cy="649.00" r="1.35" fill="#fff" stroke="#6ccbc7" stroke-width="0.9"/><circle cx="1780.80" cy="649.00" r="1.35" fill="#fff" stroke="#6ccbc7" stroke-width="0.9"/><circle cx="1786.45" cy="649.00" r="1.35" fill="#fff" stroke="#6ccbc7" stroke-width="0.9"/><circle cx="1792.10" cy="649.00" r="1.35" fill="#fff" stroke="#6ccbc7" stroke-width="0.9"/><circle cx="1797.75" cy="649.00" r="1.35" fill="#fff" stroke="#6ccbc7" stroke-width="0.9"/><circle cx="1803.40" cy="649.00" r="1.35" fill="#fff" stroke="#6ccbc7" stroke-width="0.9"/><circle cx="1809.05" cy="649.00" r="1.35" fill="#fff" stroke="#6ccbc7" stroke-width="0.9"/><circle cx="1814.70" cy="649.00" r="1.35" fill="#fff" stroke="#6ccbc7" stroke-width="0.9"/><circle cx="1820.35" cy="649.00" r="1.35" fill="#fff" stroke="#6ccbc7" stroke-width="0.9"/><circle cx="1826.00" cy="649.00" r="1.35" fill="#fff" stroke="#6ccbc7" stroke-width="0.9"/><circle cx="1831.65" cy="649.00" r="1.35" fill="#fff" stroke="#6ccbc7" stroke-width="0.9"/><circle cx="1837.30" cy="649.00" r="1.35" fill="#fff" stroke="#6ccbc7" stroke-width="0.9"/><circle cx="1842.95" cy="649.00" r="1.35" fill="#fff" stroke="#6ccbc7" stroke-width="0.9"/><circle cx="1848.60" cy="648.05" r="1.35" fill="#fff" stroke="#6ccbc7" stroke-width="0.9"/><circle cx="1854.25" cy="649.00" r="1.35" fill="#fff" stroke="#6ccbc7" stroke-width="0.9"/><circle cx="1859.90" cy="649.00" r="1.35" fill="#fff" stroke="#6ccbc7" stroke-width="0.9"/><circle cx="1865.55" cy="649.00" r="1.35" fill="#fff" stroke="#6ccbc7" stroke-width="0.9"/><circle cx="1871.20" cy="649.00" r="1.35" fill="#fff" stroke="#6ccbc7" stroke-width="0.9"/><circle cx="1876.85" cy="649.00" r="1.35" fill="#fff" stroke="#6ccbc7" stroke-width="0.9"/><circle cx="1882.50" cy="649.00" r="1.35" fill="#fff" stroke="#6ccbc7" stroke-width="0.9"/><circle cx="1888.15" cy="649.00" r="1.35" fill="#fff" stroke="#6ccbc7" stroke-width="0.9"/><circle cx="1893.80" cy="648.05" r="1.35" fill="#fff" stroke="#6ccbc7" stroke-width="0.9"/><circle cx="1899.45" cy="649.00" r="1.35" fill="#fff" stroke="#6ccbc7" stroke-width="0.9"/><circle cx="1905.10" cy="649.00" r="1.35" fill="#fff" stroke="#6ccbc7" stroke-width="0.9"/><circle cx="1910.75" cy="649.00" r="1.35" fill="#fff" stroke="#6ccbc7" stroke-width="0.9"/><circle cx="1916.40" cy="649.00" r="1.35" fill="#fff" stroke="#6ccbc7" stroke-width="0.9"/><circle cx="1922.05" cy="649.00" r="1.35" fill="#fff" stroke="#6ccbc7" stroke-width="0.9"/><circle cx="1927.70" cy="649.00" r="1.35" fill="#fff" stroke="#6ccbc7" stroke-width="0.9"/><circle cx="1933.35" cy="649.00" r="1.35" fill="#fff" stroke="#6ccbc7" stroke-width="0.9"/><circle cx="1939.00" cy="649.00" r="1.35" fill="#fff" stroke="#6ccbc7" stroke-width="0.9"/><circle cx="1944.65" cy="649.00" r="1.35" fill="#fff" stroke="#6ccbc7" stroke-width="0.9"/><circle cx="1950.30" cy="648.53" r="1.35" fill="#fff" stroke="#6ccbc7" stroke-width="0.9"/><circle cx="1955.95" cy="649.00" r="1.35" fill="#fff" stroke="#6ccbc7" stroke-width="0.9"/><circle cx="1961.60" cy="649.00" r="1.35" fill="#fff" stroke="#6ccbc7" stroke-width="0.9"/><circle cx="1967.25" cy="649.00" r="1.35" fill="#fff" stroke="#6ccbc7" stroke-width="0.9"/><circle cx="1972.90" cy="649.00" r="1.35" fill="#fff" stroke="#6ccbc7" stroke-width="0.9"/><circle cx="1978.55" cy="649.00" r="1.35" fill="#fff" stroke="#6ccbc7" stroke-width="0.9"/><circle cx="1984.20" cy="649.00" r="1.35" fill="#fff" stroke="#6ccbc7" stroke-width="0.9"/><circle cx="1989.85" cy="649.00" r="1.35" fill="#fff" stroke="#6ccbc7" stroke-width="0.9"/><circle cx="1995.50" cy="649.00" r="1.35" fill="#fff" stroke="#6ccbc7" stroke-width="0.9"/><circle cx="2001.15" cy="649.00" r="1.35" fill="#fff" stroke="#6ccbc7" stroke-width="0.9"/><circle cx="2006.80" cy="648.05" r="1.35" fill="#fff" stroke="#6ccbc7" stroke-width="0.9"/><circle cx="2012.45" cy="649.00" r="1.35" fill="#fff" stroke="#6ccbc7" stroke-width="0.9"/><circle cx="2018.10" cy="649.00" r="1.35" fill="#fff" stroke="#6ccbc7" stroke-width="0.9"/><circle cx="2023.75" cy="649.00" r="1.35" fill="#fff" stroke="#6ccbc7" stroke-width="0.9"/><circle cx="2029.40" cy="649.00" r="1.35" fill="#fff" stroke="#6ccbc7" stroke-width="0.9"/><circle cx="2035.05" cy="649.00" r="1.35" fill="#fff" stroke="#6ccbc7" stroke-width="0.9"/><circle cx="2040.70" cy="649.00" r="1.35" fill="#fff" stroke="#6ccbc7" stroke-width="0.9"/><circle cx="2046.35" cy="649.00" r="1.35" fill="#fff" stroke="#6ccbc7" stroke-width="0.9"/><circle cx="2052.00" cy="649.00" r="1.35" fill="#fff" stroke="#6ccbc7" stroke-width="0.9"/><circle cx="2057.65" cy="649.00" r="1.35" fill="#fff" stroke="#6ccbc7" stroke-width="0.9"/><circle cx="2063.30" cy="648.53" r="1.35" fill="#fff" stroke="#6ccbc7" stroke-width="0.9"/><circle cx="2068.95" cy="649.00" r="1.35" fill="#fff" stroke="#6ccbc7" stroke-width="0.9"/><circle cx="2074.60" cy="649.00" r="1.35" fill="#fff" stroke="#6ccbc7" stroke-width="0.9"/><circle cx="2080.25" cy="649.00" r="1.35" fill="#fff" stroke="#6ccbc7" stroke-width="0.9"/><circle cx="2085.90" cy="649.00" r="1.35" fill="#fff" stroke="#6ccbc7" stroke-width="0.9"/><circle cx="2091.55" cy="649.00" r="1.35" fill="#fff" stroke="#6ccbc7" stroke-width="0.9"/><circle cx="2097.20" cy="649.00" r="1.35" fill="#fff" stroke="#6ccbc7" stroke-width="0.9"/><circle cx="2102.85" cy="649.00" r="1.35" fill="#fff" stroke="#6ccbc7" stroke-width="0.9"/><circle cx="2108.50" cy="649.00" r="1.35" fill="#fff" stroke="#6ccbc7" stroke-width="0.9"/><circle cx="2114.15" cy="649.00" r="1.35" fill="#fff" stroke="#6ccbc7" stroke-width="0.9"/><circle cx="2119.80" cy="649.00" r="1.35" fill="#fff" stroke="#6ccbc7" stroke-width="0.9"/><circle cx="2125.45" cy="649.00" r="1.35" fill="#fff" stroke="#6ccbc7" stroke-width="0.9"/><circle cx="2131.10" cy="649.00" r="1.35" fill="#fff" stroke="#6ccbc7" stroke-width="0.9"/><circle cx="2136.75" cy="649.00" r="1.35" fill="#fff" stroke="#6ccbc7" stroke-width="0.9"/><circle cx="2142.40" cy="649.00" r="1.35" fill="#fff" stroke="#6ccbc7" stroke-width="0.9"/><circle cx="2148.05" cy="649.00" r="1.35" fill="#fff" stroke="#6ccbc7" stroke-width="0.9"/><circle cx="2153.70" cy="648.53" r="1.35" fill="#fff" stroke="#6ccbc7" stroke-width="0.9"/><circle cx="2159.35" cy="649.00" r="1.35" fill="#fff" stroke="#6ccbc7" stroke-width="0.9"/><circle cx="2165.00" cy="649.00" r="1.35" fill="#fff" stroke="#6ccbc7" stroke-width="0.9"/><circle cx="2170.65" cy="649.00" r="1.35" fill="#fff" stroke="#6ccbc7" stroke-width="0.9"/><circle cx="2176.30" cy="647.11" r="1.35" fill="#fff" stroke="#6ccbc7" stroke-width="0.9"/><circle cx="2181.95" cy="649.00" r="1.35" fill="#fff" stroke="#6ccbc7" stroke-width="0.9"/><circle cx="2187.60" cy="649.00" r="1.35" fill="#fff" stroke="#6ccbc7" stroke-width="0.9"/><circle cx="2193.25" cy="649.00" r="1.35" fill="#fff" stroke="#6ccbc7" stroke-width="0.9"/><circle cx="2198.90" cy="649.00" r="1.35" fill="#fff" stroke="#6ccbc7" stroke-width="0.9"/><circle cx="2204.55" cy="648.05" r="1.35" fill="#fff" stroke="#6ccbc7" stroke-width="0.9"/><circle cx="2210.20" cy="649.00" r="1.35" fill="#fff" stroke="#6ccbc7" stroke-width="0.9"/><circle cx="2215.85" cy="649.00" r="1.35" fill="#fff" stroke="#6ccbc7" stroke-width="0.9"/><circle cx="2221.50" cy="649.00" r="1.35" fill="#fff" stroke="#6ccbc7" stroke-width="0.9"/><circle cx="2227.15" cy="649.00" r="1.35" fill="#fff" stroke="#6ccbc7" stroke-width="0.9"/><circle cx="2232.80" cy="649.00" r="1.35" fill="#fff" stroke="#6ccbc7" stroke-width="0.9"/><circle cx="2238.45" cy="648.05" r="1.35" fill="#fff" stroke="#6ccbc7" stroke-width="0.9"/><circle cx="2244.10" cy="649.00" r="1.35" fill="#fff" stroke="#6ccbc7" stroke-width="0.9"/><circle cx="2249.75" cy="649.00" r="1.35" fill="#fff" stroke="#6ccbc7" stroke-width="0.9"/><circle cx="2255.40" cy="649.00" r="1.35" fill="#fff" stroke="#6ccbc7" stroke-width="0.9"/><circle cx="2261.05" cy="649.00" r="1.35" fill="#fff" stroke="#6ccbc7" stroke-width="0.9"/><circle cx="2266.70" cy="649.00" r="1.35" fill="#fff" stroke="#6ccbc7" stroke-width="0.9"/><circle cx="2272.35" cy="649.00" r="1.35" fill="#fff" stroke="#6ccbc7" stroke-width="0.9"/></svg>
<svg style="left:0;top:0" width="2536" height="1440"><path d="M2295.60 535.50 L2300.40 540.00 L2295.60 544.50" fill="none" stroke="#5a5f66" stroke-width="1.1"/><path d="M2310.00 528.30 H2480.00" stroke="#d6d6d6" stroke-width="1.2"/><path d="M2310.00 563.60 H2480.00" stroke="#d6d6d6" stroke-width="1.2"/><path d="M2310.00 597.40 H2480.00" stroke="#d6d6d6" stroke-width="1.2"/><circle cx="2321.90" cy="547.30" r="4.1" fill="#6ccbc7"/><circle cx="2321.90" cy="582.00" r="4.1" fill="#f7a5f5"/></svg>
<svg style="left:0;top:0" width="2536" height="1440"><path d="M311.50 978.50 H1234.50" stroke="#bdbdbd" stroke-width="1"/><path d="M311.50 998.50 H1234.50" stroke="#bdbdbd" stroke-width="1"/><path d="M311.50 1017.50 H1234.50" stroke="#bdbdbd" stroke-width="1"/><path d="M311.50 1037.50 H1234.50" stroke="#bdbdbd" stroke-width="1"/><path d="M311.50 1057.50 H1234.50" stroke="#bdbdbd" stroke-width="1"/><path d="M311.50 1076.50 H1234.50" stroke="#bdbdbd" stroke-width="1"/><path d="M311.50 1096.50 H1234.50" stroke="#bdbdbd" stroke-width="1"/><path d="M311.50 978.50 V1096.50" stroke="#bdbdbd" stroke-width="1"/><path d="M388.50 978.50 V1096.50" stroke="#bdbdbd" stroke-width="1"/><path d="M466.50 978.50 V1096.50" stroke="#bdbdbd" stroke-width="1"/><path d="M543.50 978.50 V1096.50" stroke="#bdbdbd" stroke-width="1"/><path d="M621.50 978.50 V1096.50" stroke="#bdbdbd" stroke-width="1"/><path d="M698.50 978.50 V1096.50" stroke="#bdbdbd" stroke-width="1"/><path d="M775.50 978.50 V1096.50" stroke="#bdbdbd" stroke-width="1"/><path d="M853.50 978.50 V1096.50" stroke="#bdbdbd" stroke-width="1"/><path d="M930.50 978.50 V1096.50" stroke="#bdbdbd" stroke-width="1"/><path d="M1008.50 978.50 V1096.50" stroke="#bdbdbd" stroke-width="1"/><path d="M1085.50 978.50 V1096.50" stroke="#bdbdbd" stroke-width="1"/><path d="M1163.50 978.50 V1096.50" stroke="#bdbdbd" stroke-width="1"/><path d="M1234.50 978.50 V1096.50" stroke="#bdbdbd" stroke-width="1"/><path d="M311.20 1096.70 L317.65 1096.70 L324.11 1096.70 L330.56 1096.70 L337.02 1096.70 L343.47 1096.70 L349.93 1096.70 L356.38 1096.70 L362.83 1096.70 L369.29 1096.70 L375.74 1096.70 L382.20 1096.70 L388.65 1096.70 L395.10 1096.70 L401.56 1096.70 L408.01 1096.70 L414.47 1096.70 L420.92 1096.70 L427.38 1096.70 L433.83 1096.70 L440.28 1096.70 L446.74 1096.70 L453.19 1096.70 L459.65 1096.70 L466.10 1096.70 L472.55 1096.70 L479.01 994.69 L485.46 1096.70 L491.92 1096.70 L498.37 1096.70 L504.82 1096.70 L511.28 1096.70 L517.73 1094.63 L524.19 1096.70 L530.64 1096.70 L537.10 1096.70 L543.55 1096.70 L550.00 1096.70 L556.46 1096.70 L562.91 1096.70 L569.37 1096.70 L575.82 1096.70 L582.27 1096.70 L588.73 1095.46 L595.18 1095.05 L601.64 1096.70 L608.09 1096.70 L614.55 1096.70 L621.00 1096.70 L627.45 1096.70 L633.91 1096.70 L640.36 1096.70 L646.82 1096.70 L653.27 1096.70 L659.72 1096.70 L666.18 1096.70 L672.63 1096.70 L679.09 1096.70 L685.54 1096.70 L692.00 1096.70 L698.45 1096.70 L704.90 1096.70 L711.36 1096.70 L717.81 1096.70 L724.27 1096.70 L730.72 1096.70 L737.17 1096.70 L743.63 1096.70 L750.08 1096.70 L756.54 1096.70 L762.99 1096.70 L769.45 1096.70 L775.90 1096.70 L782.35 1094.63 L788.81 1096.70 L795.26 1096.70 L801.72 1096.70 L808.17 1096.70 L814.62 1096.70 L821.08 1096.70 L827.53 1096.70 L833.99 1096.70 L840.44 1096.70 L846.90 1096.70 L853.35 1096.70 L859.80 1096.70 L866.26 1096.70 L872.71 1096.70 L879.17 1096.70 L885.62 1096.70 L892.08 1096.70 L898.53 1096.70 L904.98 1096.70 L911.44 1096.70 L917.89 1096.70 L924.35 1096.70 L930.80 1096.70 L937.25 1096.70 L943.71 1096.70 L950.16 1096.70 L956.62 1096.70 L963.07 1096.70 L969.53 1096.70 L975.98 1096.70 L982.43 1096.70 L988.89 1096.70 L995.34 1096.70 L1001.80 1096.70 L1008.25 1096.70 L1014.70 1096.70 L1021.16 1096.70 L1027.61 1096.70 L1034.07 1096.70 L1040.52 1096.70 L1046.97 1096.70 L1053.43 1096.70 L1059.88 1096.70 L1066.34 1096.70 L1072.79 1096.70 L1079.25 1096.70 L1085.70 1096.70 L1092.15 1096.70 L1098.61 1096.70 L1105.06 1096.70 L1111.52 1096.70 L1117.97 1096.70 L1124.42 1096.70 L1130.88 1094.22 L1137.33 1096.70 L1143.79 1096.70 L1150.24 1096.70 L1156.70 1096.70 L1163.15 1096.70 L1169.60 1096.70 L1176.06 1096.70 L1182.51 1096.70 L1188.97 1096.70 L1195.42 1096.70 L1201.88 1096.70 L1208.33 1096.70 L1214.78 1096.70 L1221.24 1096.70 L1227.69 1096.70 L1234.15 1096.70 L1234.15 1096.70 L311.20 1096.70 Z" fill="#ef5040" fill-opacity="0.5" stroke="none"/><path d="M311.20 1096.70 L317.65 1096.70 L324.11 1096.70 L330.56 1096.70 L337.02 1096.70 L343.47 1096.70 L349.93 1096.70 L356.38 1096.70 L362.83 1096.70 L369.29 1096.70 L375.74 1096.70 L382.20 1096.70 L388.65 1096.70 L395.10 1096.70 L401.56 1096.70 L408.01 1096.70 L414.47 1096.70 L420.92 1096.70 L427.38 1096.70 L433.83 1096.70 L440.28 1096.70 L446.74 1096.70 L453.19 1096.70 L459.65 1096.70 L466.10 1096.70 L472.55 1096.70 L479.01 1096.70 L485.46 1096.70 L491.92 1096.70 L498.37 1096.70 L504.82 1096.70 L511.28 1096.70 L517.73 1096.70 L524.19 1096.70 L530.64 1096.70 L537.10 1096.70 L543.55 1096.70 L550.00 1096.70 L556.46 1096.70 L562.91 1096.70 L569.37 1096.70 L575.82 1096.70 L582.27 1096.70 L588.73 1096.70 L595.18 1096.70 L601.64 1096.70 L608.09 1096.70 L614.55 1096.70 L621.00 1096.70 L627.45 1096.70 L633.91 1096.70 L640.36 1096.70 L646.82 1096.70 L653.27 1096.70 L659.72 1096.70 L666.18 1096.70 L672.63 1096.70 L679.09 1096.70 L685.54 1096.70 L692.00 1096.70 L698.45 1096.70 L704.90 1096.70 L711.36 1096.70 L717.81 1096.70 L724.27 1096.70 L730.72 1096.70 L737.17 1096.70 L743.63 1096.70 L750.08 1096.70 L756.54 1096.70 L762.99 1096.70 L769.45 1096.70 L775.90 1096.70 L782.35 1096.70 L788.81 1096.70 L795.26 1096.70 L801.72 1096.70 L808.17 1096.70 L814.62 1096.70 L821.08 1096.70 L827.53 1096.70 L833.99 1096.70 L840.44 1096.70 L846.90 1096.70 L853.35 1096.70 L859.80 1096.70 L866.26 1096.70 L872.71 1096.70 L879.17 1096.70 L885.62 1096.70 L892.08 1096.70 L898.53 1096.70 L904.98 1096.70 L911.44 1096.70 L917.89 1096.70 L924.35 1096.70 L930.80 1094.22 L937.25 1096.70 L943.71 1096.70 L950.16 1096.70 L956.62 1096.70 L963.07 1096.70 L969.53 1096.70 L975.98 1096.70 L982.43 1096.70 L988.89 1096.70 L995.34 1096.70 L1001.80 1096.70 L1008.25 1096.70 L1014.70 1096.70 L1021.16 1096.70 L1027.61 1096.70 L1034.07 1096.70 L1040.52 1096.70 L1046.97 1096.70 L1053.43 1096.70 L1059.88 1096.70 L1066.34 1096.70 L1072.79 1096.70 L1079.25 1096.70 L1085.70 1096.70 L1092.15 1096.70 L1098.61 1096.70 L1105.06 1096.70 L1111.52 1096.70 L1117.97 1096.70 L1124.42 1096.70 L1130.88 1096.70 L1137.33 1096.70 L1143.79 1096.70 L1150.24 1096.70 L1156.70 1096.70 L1163.15 1096.70 L1169.60 1096.70 L1176.06 1096.70 L1182.51 1096.70 L1188.97 1096.70 L1195.42 1096.70 L1201.88 1096.70 L1208.33 1096.70 L1214.78 1096.70 L1221.24 1096.70 L1227.69 1096.70 L1234.15 1096.70 L1234.15 1096.70 L311.20 1096.70 Z" fill="#6cbf2a" fill-opacity="0.4" stroke="none"/><path d="M311.20 1096.70 L317.65 1096.70 L324.11 1096.70 L330.56 1096.70 L337.02 1096.70 L343.47 1096.70 L349.93 1096.70 L356.38 1096.70 L362.83 1096.70 L369.29 1096.70 L375.74 1096.70 L382.20 1096.70 L388.65 1096.70 L395.10 1096.70 L401.56 1096.70 L408.01 1096.70 L414.47 1096.70 L420.92 1096.70 L427.38 1096.70 L433.83 1096.70 L440.28 1096.70 L446.74 1096.70 L453.19 1096.70 L459.65 1096.70 L466.10 1096.70 L472.55 1096.70 L479.01 994.69 L485.46 1096.70 L491.92 1096.70 L498.37 1096.70 L504.82 1096.70 L511.28 1096.70 L517.73 1094.63 L524.19 1096.70 L530.64 1096.70 L537.10 1096.70 L543.55 1096.70 L550.00 1096.70 L556.46 1096.70 L562.91 1096.70 L569.37 1096.70 L575.82 1096.70 L582.27 1096.70 L588.73 1095.46 L595.18 1095.05 L601.64 1096.70 L608.09 1096.70 L614.55 1096.70 L621.00 1096.70 L627.45 1096.70 L633.91 1096.70 L640.36 1096.70 L646.82 1096.70 L653.27 1096.70 L659.72 1096.70 L666.18 1096.70 L672.63 1096.70 L679.09 1096.70 L685.54 1096.70 L692.00 1096.70 L698.45 1096.70 L704.90 1096.70 L711.36 1096.70 L717.81 1096.70 L724.27 1096.70 L730.72 1096.70 L737.17 1096.70 L743.63 1096.70 L750.08 1096.70 L756.54 1096.70 L762.99 1096.70 L769.45 1096.70 L775.90 1096.70 L782.35 1094.63 L788.81 1096.70 L795.26 1096.70 L801.72 1096.70 L808.17 1096.70 L814.62 1096.70 L821.08 1096.70 L827.53 1096.70 L833.99 1096.70 L840.44 1096.70 L846.90 1096.70 L853.35 1096.70 L859.80 1096.70 L866.26 1096.70 L872.71 1096.70 L879.17 1096.70 L885.62 1096.70 L892.08 1096.70 L898.53 1096.70 L904.98 1096.70 L911.44 1096.70 L917.89 1096.70 L924.35 1096.70 L930.80 1096.70 L937.25 1096.70 L943.71 1096.70 L950.16 1096.70 L956.62 1096.70 L963.07 1096.70 L969.53 1096.70 L975.98 1096.70 L982.43 1096.70 L988.89 1096.70 L995.34 1096.70 L1001.80 1096.70 L1008.25 1096.70 L1014.70 1096.70 L1021.16 1096.70 L1027.61 1096.70 L1034.07 1096.70 L1040.52 1096.70 L1046.97 1096.70 L1053.43 1096.70 L1059.88 1096.70 L1066.34 1096.70 L1072.79 1096.70 L1079.25 1096.70 L1085.70 1096.70 L1092.15 1096.70 L1098.61 1096.70 L1105.06 1096.70 L1111.52 1096.70 L1117.97 1096.70 L1124.42 1096.70 L1130.88 1094.22 L1137.33 1096.70 L1143.79 1096.70 L1150.24 1096.70 L1156.70 1096.70 L1163.15 1096.70 L1169.60 1096.70 L1176.06 1096.70 L1182.51 1096.70 L1188.97 1096.70 L1195.42 1096.70 L1201.88 1096.70 L1208.33 1096.70 L1214.78 1096.70 L1221.24 1096.70 L1227.69 1096.70 L1234.15 1096.70" fill="none" stroke="#ef5040" stroke-width="1.3"/><circle cx="479.01" cy="994.69" r="1.35" fill="#fff" stroke="#ef5040" stroke-width="0.9"/><path d="M311.20 1096.70 L317.65 1096.70 L324.11 1096.70 L330.56 1096.70 L337.02 1096.70 L343.47 1096.70 L349.93 1096.70 L356.38 1096.70 L362.83 1096.70 L369.29 1096.70 L375.74 1096.70 L382.20 1096.70 L388.65 1096.70 L395.10 1096.70 L401.56 1096.70 L408.01 1096.70 L414.47 1096.70 L420.92 1096.70 L427.38 1096.70 L433.83 1096.70 L440.28 1096.70 L446.74 1096.70 L453.19 1096.70 L459.65 1096.70 L466.10 1096.70 L472.55 1096.70 L479.01 1096.70 L485.46 1096.70 L491.92 1096.70 L498.37 1096.70 L504.82 1096.70 L511.28 1096.70 L517.73 1096.70 L524.19 1096.70 L530.64 1096.70 L537.10 1096.70 L543.55 1096.70 L550.00 1096.70 L556.46 1096.70 L562.91 1096.70 L569.37 1096.70 L575.82 1096.70 L582.27 1096.70 L588.73 1096.70 L595.18 1096.70 L601.64 1096.70 L608.09 1096.70 L614.55 1096.70 L621.00 1096.70 L627.45 1096.70 L633.91 1096.70 L640.36 1096.70 L646.82 1096.70 L653.27 1096.70 L659.72 1096.70 L666.18 1096.70 L672.63 1096.70 L679.09 1096.70 L685.54 1096.70 L692.00 1096.70 L698.45 1096.70 L704.90 1096.70 L711.36 1096.70 L717.81 1096.70 L724.27 1096.70 L730.72 1096.70 L737.17 1096.70 L743.63 1096.70 L750.08 1096.70 L756.54 1096.70 L762.99 1096.70 L769.45 1096.70 L775.90 1096.70 L782.35 1096.70 L788.81 1096.70 L795.26 1096.70 L801.72 1096.70 L808.17 1096.70 L814.62 1096.70 L821.08 1096.70 L827.53 1096.70 L833.99 1096.70 L840.44 1096.70 L846.90 1096.70 L853.35 1096.70 L859.80 1096.70 L866.26 1096.70 L872.71 1096.70 L879.17 1096.70 L885.62 1096.70 L892.08 1096.70 L898.53 1096.70 L904.98 1096.70 L911.44 1096.70 L917.89 1096.70 L924.35 1096.70 L930.80 1094.22 L937.25 1096.70 L943.71 1096.70 L950.16 1096.70 L956.62 1096.70 L963.07 1096.70 L969.53 1096.70 L975.98 1096.70 L982.43 1096.70 L988.89 1096.70 L995.34 1096.70 L1001.80 1096.70 L1008.25 1096.70 L1014.70 1096.70 L1021.16 1096.70 L1027.61 1096.70 L1034.07 1096.70 L1040.52 1096.70 L1046.97 1096.70 L1053.43 1096.70 L1059.88 1096.70 L1066.34 1096.70 L1072.79 1096.70 L1079.25 1096.70 L1085.70 1096.70 L1092.15 1096.70 L1098.61 1096.70 L1105.06 1096.70 L1111.52 1096.70 L1117.97 1096.70 L1124.42 1096.70 L1130.88 1096.70 L1137.33 1096.70 L1143.79 1096.70 L1150.24 1096.70 L1156.70 1096.70 L1163.15 1096.70 L1169.60 1096.70 L1176.06 1096.70 L1182.51 1096.70 L1188.97 1096.70 L1195.42 1096.70 L1201.88 1096.70 L1208.33 1096.70 L1214.78 1096.70 L1221.24 1096.70 L1227.69 1096.70 L1234.15 1096.70" fill="none" stroke="#6cbf2a" stroke-width="1.3"/><circle cx="311.20" cy="1096.70" r="1.35" fill="#6cbf2a" stroke="#6cbf2a" stroke-width="0.9"/><circle cx="317.65" cy="1096.70" r="1.35" fill="#6cbf2a" stroke="#6cbf2a" stroke-width="0.9"/><circle cx="324.11" cy="1096.70" r="1.35" fill="#6cbf2a" stroke="#6cbf2a" stroke-width="0.9"/><circle cx="330.56" cy="1096.70" r="1.35" fill="#6cbf2a" stroke="#6cbf2a" stroke-width="0.9"/><circle cx="337.02" cy="1096.70" r="1.35" fill="#6cbf2a" stroke="#6cbf2a" stroke-width="0.9"/><circle cx="343.47" cy="1096.70" r="1.35" fill="#6cbf2a" stroke="#6cbf2a" stroke-width="0.9"/><circle cx="349.93" cy="1096.70" r="1.35" fill="#6cbf2a" stroke="#6cbf2a" stroke-width="0.9"/><circle cx="356.38" cy="1096.70" r="1.35" fill="#6cbf2a" stroke="#6cbf2a" stroke-width="0.9"/><circle cx="362.83" cy="1096.70" r="1.35" fill="#6cbf2a" stroke="#6cbf2a" stroke-width="0.9"/><circle cx="369.29" cy="1096.70" r="1.35" fill="#6cbf2a" stroke="#6cbf2a" stroke-width="0.9"/><circle cx="375.74" cy="1096.70" r="1.35" fill="#6cbf2a" stroke="#6cbf2a" stroke-width="0.9"/><circle cx="382.20" cy="1096.70" r="1.35" fill="#6cbf2a" stroke="#6cbf2a" stroke-width="0.9"/><circle cx="388.65" cy="1096.70" r="1.35" fill="#6cbf2a" stroke="#6cbf2a" stroke-width="0.9"/><circle cx="395.10" cy="1096.70" r="1.35" fill="#6cbf2a" stroke="#6cbf2a" stroke-width="0.9"/><circle cx="401.56" cy="1096.70" r="1.35" fill="#6cbf2a" stroke="#6cbf2a" stroke-width="0.9"/><circle cx="408.01" cy="1096.70" r="1.35" fill="#6cbf2a" stroke="#6cbf2a" stroke-width="0.9"/><circle cx="414.47" cy="1096.70" r="1.35" fill="#6cbf2a" stroke="#6cbf2a" stroke-width="0.9"/><circle cx="420.92" cy="1096.70" r="1.35" fill="#6cbf2a" stroke="#6cbf2a" stroke-width="0.9"/><circle cx="427.38" cy="1096.70" r="1.35" fill="#6cbf2a" stroke="#6cbf2a" stroke-width="0.9"/><circle cx="433.83" cy="1096.70" r="1.35" fill="#6cbf2a" stroke="#6cbf2a" stroke-width="0.9"/><circle cx="440.28" cy="1096.70" r="1.35" fill="#6cbf2a" stroke="#6cbf2a" stroke-width="0.9"/><circle cx="446.74" cy="1096.70" r="1.35" fill="#6cbf2a" stroke="#6cbf2a" stroke-width="0.9"/><circle cx="453.19" cy="1096.70" r="1.35" fill="#6cbf2a" stroke="#6cbf2a" stroke-width="0.9"/><circle cx="459.65" cy="1096.70" r="1.35" fill="#6cbf2a" stroke="#6cbf2a" stroke-width="0.9"/><circle cx="466.10" cy="1096.70" r="1.35" fill="#6cbf2a" stroke="#6cbf2a" stroke-width="0.9"/><circle cx="472.55" cy="1096.70" r="1.35" fill="#6cbf2a" stroke="#6cbf2a" stroke-width="0.9"/><circle cx="479.01" cy="1096.70" r="1.35" fill="#6cbf2a" stroke="#6cbf2a" stroke-width="0.9"/><circle cx="485.46" cy="1096.70" r="1.35" fill="#6cbf2a" stroke="#6cbf2a" stroke-width="0.9"/><circle cx="491.92" cy="1096.70" r="1.35" fill="#6cbf2a" stroke="#6cbf2a" stroke-width="0.9"/><circle cx="498.37" cy="1096.70" r="1.35" fill="#6cbf2a" stroke="#6cbf2a" stroke-width="0.9"/><circle cx="504.82" cy="1096.70" r="1.35" fill="#6cbf2a" stroke="#6cbf2a" stroke-width="0.9"/><circle cx="511.28" cy="1096.70" r="1.35" fill="#6cbf2a" stroke="#6cbf2a" stroke-width="0.9"/><circle cx="517.73" cy="1096.70" r="1.35" fill="#6cbf2a" stroke="#6cbf2a" stroke-width="0.9"/><circle cx="524.19" cy="1096.70" r="1.35" fill="#6cbf2a" stroke="#6cbf2a" stroke-width="0.9"/><circle cx="530.64" cy="1096.70" r="1.35" fill="#6cbf2a" stroke="#6cbf2a" stroke-width="0.9"/><circle cx="537.10" cy="1096.70" r="1.35" fill="#6cbf2a" stroke="#6cbf2a" stroke-width="0.9"/><circle cx="543.55" cy="1096.70" r="1.35" fill="#6cbf2a" stroke="#6cbf2a" stroke-width="0.9"/><circle cx="550.00" cy="1096.70" r="1.35" fill="#6cbf2a" stroke="#6cbf2a" stroke-width="0.9"/><circle cx="556.46" cy="1096.70" r="1.35" fill="#6cbf2a" stroke="#6cbf2a" stroke-width="0.9"/><circle cx="562.91" cy="1096.70" r="1.35" fill="#6cbf2a" stroke="#6cbf2a" stroke-width="0.9"/><circle cx="569.37" cy="1096.70" r="1.35" fill="#6cbf2a" stroke="#6cbf2a" stroke-width="0.9"/><circle cx="575.82" cy="1096.70" r="1.35" fill="#6cbf2a" stroke="#6cbf2a" stroke-width="0.9"/><circle cx="582.27" cy="1096.70" r="1.35" fill="#6cbf2a" stroke="#6cbf2a" stroke-width="0.9"/><circle cx="588.73" cy="1096.70" r="1.35" fill="#6cbf2a" stroke="#6cbf2a" stroke-width="0.9"/><circle cx="595.18" cy="1096.70" r="1.35" fill="#6cbf2a" stroke="#6cbf2a" stroke-width="0.9"/><circle cx="601.64" cy="1096.70" r="1.35" fill="#6cbf2a" stroke="#6cbf2a" stroke-width="0.9"/><circle cx="608.09" cy="1096.70" r="1.35" fill="#6cbf2a" stroke="#6cbf2a" stroke-width="0.9"/><circle cx="614.55" cy="1096.70" r="1.35" fill="#6cbf2a" stroke="#6cbf2a" stroke-width="0.9"/><circle cx="621.00" cy="1096.70" r="1.35" fill="#6cbf2a" stroke="#6cbf2a" stroke-width="0.9"/><circle cx="627.45" cy="1096.70" r="1.35" fill="#6cbf2a" stroke="#6cbf2a" stroke-width="0.9"/><circle cx="633.91" cy="1096.70" r="1.35" fill="#6cbf2a" stroke="#6cbf2a" stroke-width="0.9"/><circle cx="640.36" cy="1096.70" r="1.35" fill="#6cbf2a" stroke="#6cbf2a" stroke-width="0.9"/><circle cx="646.82" cy="1096.70" r="1.35" fill="#6cbf2a" stroke="#6cbf2a" stroke-width="0.9"/><circle cx="653.27" cy="1096.70" r="1.35" fill="#6cbf2a" stroke="#6cbf2a" stroke-width="0.9"/><circle cx="659.72" cy="1096.70" r="1.35" fill="#6cbf2a" stroke="#6cbf2a" stroke-width="0.9"/><circle cx="666.18" cy="1096.70" r="1.35" fill="#6cbf2a" stroke="#6cbf2a" stroke-width="0.9"/><circle cx="672.63" cy="1096.70" r="1.35" fill="#6cbf2a" stroke="#6cbf2a" stroke-width="0.9"/><circle cx="679.09" cy="1096.70" r="1.35" fill="#6cbf2a" stroke="#6cbf2a" stroke-width="0.9"/><circle cx="685.54" cy="1096.70" r="1.35" fill="#6cbf2a" stroke="#6cbf2a" stroke-width="0.9"/><circle cx="692.00" cy="1096.70" r="1.35" fill="#6cbf2a" stroke="#6cbf2a" stroke-width="0.9"/><circle cx="698.45" cy="1096.70" r="1.35" fill="#6cbf2a" stroke="#6cbf2a" stroke-width="0.9"/><circle cx="704.90" cy="1096.70" r="1.35" fill="#6cbf2a" stroke="#6cbf2a" stroke-width="0.9"/><circle cx="711.36" cy="1096.70" r="1.35" fill="#6cbf2a" stroke="#6cbf2a" stroke-width="0.9"/><circle cx="717.81" cy="1096.70" r="1.35" fill="#6cbf2a" stroke="#6cbf2a" stroke-width="0.9"/><circle cx="724.27" cy="1096.70" r="1.35" fill="#6cbf2a" stroke="#6cbf2a" stroke-width="0.9"/><circle cx="730.72" cy="1096.70" r="1.35" fill="#6cbf2a" stroke="#6cbf2a" stroke-width="0.9"/><circle cx="737.17" cy="1096.70" r="1.35" fill="#6cbf2a" stroke="#6cbf2a" stroke-width="0.9"/><circle cx="743.63" cy="1096.70" r="1.35" fill="#6cbf2a" stroke="#6cbf2a" stroke-width="0.9"/><circle cx="750.08" cy="1096.70" r="1.35" fill="#6cbf2a" stroke="#6cbf2a" stroke-width="0.9"/><circle cx="756.54" cy="1096.70" r="1.35" fill="#6cbf2a" stroke="#6cbf2a" stroke-width="0.9"/><circle cx="762.99" cy="1096.70" r="1.35" fill="#6cbf2a" stroke="#6cbf2a" stroke-width="0.9"/><circle cx="769.45" cy="1096.70" r="1.35" fill="#6cbf2a" stroke="#6cbf2a" stroke-width="0.9"/><circle cx="775.90" cy="1096.70" r="1.35" fill="#6cbf2a" stroke="#6cbf2a" stroke-width="0.9"/><circle cx="782.35" cy="1096.70" r="1.35" fill="#6cbf2a" stroke="#6cbf2a" stroke-width="0.9"/><circle cx="788.81" cy="1096.70" r="1.35" fill="#6cbf2a" stroke="#6cbf2a" stroke-width="0.9"/><circle cx="795.26" cy="1096.70" r="1.35" fill="#6cbf2a" stroke="#6cbf2a" stroke-width="0.9"/><circle cx="801.72" cy="1096.70" r="1.35" fill="#6cbf2a" stroke="#6cbf2a" stroke-width="0.9"/><circle cx="808.17" cy="1096.70" r="1.35" fill="#6cbf2a" stroke="#6cbf2a" stroke-width="0.9"/><circle cx="814.62" cy="1096.70" r="1.35" fill="#6cbf2a" stroke="#6cbf2a" stroke-width="0.9"/><circle cx="821.08" cy="1096.70" r="1.35" fill="#6cbf2a" stroke="#6cbf2a" stroke-width="0.9"/><circle cx="827.53" cy="1096.70" r="1.35" fill="#6cbf2a" stroke="#6cbf2a" stroke-width="0.9"/><circle cx="833.99" cy="1096.70" r="1.35" fill="#6cbf2a" stroke="#6cbf2a" stroke-width="0.9"/><circle cx="840.44" cy="1096.70" r="1.35" fill="#6cbf2a" stroke="#6cbf2a" stroke-width="0.9"/><circle cx="846.90" cy="1096.70" r="1.35" fill="#6cbf2a" stroke="#6cbf2a" stroke-width="0.9"/><circle cx="853.35" cy="1096.70" r="1.35" fill="#6cbf2a" stroke="#6cbf2a" stroke-width="0.9"/><circle cx="859.80" cy="1096.70" r="1.35" fill="#6cbf2a" stroke="#6cbf2a" stroke-width="0.9"/><circle cx="866.26" cy="1096.70" r="1.35" fill="#6cbf2a" stroke="#6cbf2a" stroke-width="0.9"/><circle cx="872.71" cy="1096.70" r="1.35" fill="#6cbf2a" stroke="#6cbf2a" stroke-width="0.9"/><circle cx="879.17" cy="1096.70" r="1.35" fill="#6cbf2a" stroke="#6cbf2a" stroke-width="0.9"/><circle cx="885.62" cy="1096.70" r="1.35" fill="#6cbf2a" stroke="#6cbf2a" stroke-width="0.9"/><circle cx="892.08" cy="1096.70" r="1.35" fill="#6cbf2a" stroke="#6cbf2a" stroke-width="0.9"/><circle cx="898.53" cy="1096.70" r="1.35" fill="#6cbf2a" stroke="#6cbf2a" stroke-width="0.9"/><circle cx="904.98" cy="1096.70" r="1.35" fill="#6cbf2a" stroke="#6cbf2a" stroke-width="0.9"/><circle cx="911.44" cy="1096.70" r="1.35" fill="#6cbf2a" stroke="#6cbf2a" stroke-width="0.9"/><circle cx="917.89" cy="1096.70" r="1.35" fill="#6cbf2a" stroke="#6cbf2a" stroke-width="0.9"/><circle cx="924.35" cy="1096.70" r="1.35" fill="#6cbf2a" stroke="#6cbf2a" stroke-width="0.9"/><circle cx="930.80" cy="1094.22" r="1.35" fill="#6cbf2a" stroke="#6cbf2a" stroke-width="0.9"/><circle cx="937.25" cy="1096.70" r="1.35" fill="#6cbf2a" stroke="#6cbf2a" stroke-width="0.9"/><circle cx="943.71" cy="1096.70" r="1.35" fill="#6cbf2a" stroke="#6cbf2a" stroke-width="0.9"/><circle cx="950.16" cy="1096.70" r="1.35" fill="#6cbf2a" stroke="#6cbf2a" stroke-width="0.9"/><circle cx="956.62" cy="1096.70" r="1.35" fill="#6cbf2a" stroke="#6cbf2a" stroke-width="0.9"/><circle cx="963.07" cy="1096.70" r="1.35" fill="#6cbf2a" stroke="#6cbf2a" stroke-width="0.9"/><circle cx="969.53" cy="1096.70" r="1.35" fill="#6cbf2a" stroke="#6cbf2a" stroke-width="0.9"/><circle cx="975.98" cy="1096.70" r="1.35" fill="#6cbf2a" stroke="#6cbf2a" stroke-width="0.9"/><circle cx="982.43" cy="1096.70" r="1.35" fill="#6cbf2a" stroke="#6cbf2a" stroke-width="0.9"/><circle cx="988.89" cy="1096.70" r="1.35" fill="#6cbf2a" stroke="#6cbf2a" stroke-width="0.9"/><circle cx="995.34" cy="1096.70" r="1.35" fill="#6cbf2a" stroke="#6cbf2a" stroke-width="0.9"/><circle cx="1001.80" cy="1096.70" r="1.35" fill="#6cbf2a" stroke="#6cbf2a" stroke-width="0.9"/><circle cx="1008.25" cy="1096.70" r="1.35" fill="#6cbf2a" stroke="#6cbf2a" stroke-width="0.9"/><circle cx="1014.70" cy="1096.70" r="1.35" fill="#6cbf2a" stroke="#6cbf2a" stroke-width="0.9"/><circle cx="1021.16" cy="1096.70" r="1.35" fill="#6cbf2a" stroke="#6cbf2a" stroke-width="0.9"/><circle cx="1027.61" cy="1096.70" r="1.35" fill="#6cbf2a" stroke="#6cbf2a" stroke-width="0.9"/><circle cx="1034.07" cy="1096.70" r="1.35" fill="#6cbf2a" stroke="#6cbf2a" stroke-width="0.9"/><circle cx="1040.52" cy="1096.70" r="1.35" fill="#6cbf2a" stroke="#6cbf2a" stroke-width="0.9"/><circle cx="1046.97" cy="1096.70" r="1.35" fill="#6cbf2a" stroke="#6cbf2a" stroke-width="0.9"/><circle cx="1053.43" cy="1096.70" r="1.35" fill="#6cbf2a" stroke="#6cbf2a" stroke-width="0.9"/><circle cx="1059.88" cy="1096.70" r="1.35" fill="#6cbf2a" stroke="#6cbf2a" stroke-width="0.9"/><circle cx="1066.34" cy="1096.70" r="1.35" fill="#6cbf2a" stroke="#6cbf2a" stroke-width="0.9"/><circle cx="1072.79" cy="1096.70" r="1.35" fill="#6cbf2a" stroke="#6cbf2a" stroke-width="0.9"/><circle cx="1079.25" cy="1096.70" r="1.35" fill="#6cbf2a" stroke="#6cbf2a" stroke-width="0.9"/><circle cx="1085.70" cy="1096.70" r="1.35" fill="#6cbf2a" stroke="#6cbf2a" stroke-width="0.9"/><circle cx="1092.15" cy="1096.70" r="1.35" fill="#6cbf2a" stroke="#6cbf2a" stroke-width="0.9"/><circle cx="1098.61" cy="1096.70" r="1.35" fill="#6cbf2a" stroke="#6cbf2a" stroke-width="0.9"/><circle cx="1105.06" cy="1096.70" r="1.35" fill="#6cbf2a" stroke="#6cbf2a" stroke-width="0.9"/><circle cx="1111.52" cy="1096.70" r="1.35" fill="#6cbf2a" stroke="#6cbf2a" stroke-width="0.9"/><circle cx="1117.97" cy="1096.70" r="1.35" fill="#6cbf2a" stroke="#6cbf2a" stroke-width="0.9"/><circle cx="1124.42" cy="1096.70" r="1.35" fill="#6cbf2a" stroke="#6cbf2a" stroke-width="0.9"/><circle cx="1130.88" cy="1096.70" r="1.35" fill="#6cbf2a" stroke="#6cbf2a" stroke-width="0.9"/><circle cx="1137.33" cy="1096.70" r="1.35" fill="#6cbf2a" stroke="#6cbf2a" stroke-width="0.9"/><circle cx="1143.79" cy="1096.70" r="1.35" fill="#6cbf2a" stroke="#6cbf2a" stroke-width="0.9"/><circle cx="1150.24" cy="1096.70" r="1.35" fill="#6cbf2a" stroke="#6cbf2a" stroke-width="0.9"/><circle cx="1156.70" cy="1096.70" r="1.35" fill="#6cbf2a" stroke="#6cbf2a" stroke-width="0.9"/><circle cx="1163.15" cy="1096.70" r="1.35" fill="#6cbf2a" stroke="#6cbf2a" stroke-width="0.9"/><circle cx="1169.60" cy="1096.70" r="1.35" fill="#6cbf2a" stroke="#6cbf2a" stroke-width="0.9"/><circle cx="1176.06" cy="1096.70" r="1.35" fill="#6cbf2a" stroke="#6cbf2a" stroke-width="0.9"/><circle cx="1182.51" cy="1096.70" r="1.35" fill="#6cbf2a" stroke="#6cbf2a" stroke-width="0.9"/><circle cx="1188.97" cy="1096.70" r="1.35" fill="#6cbf2a" stroke="#6cbf2a" stroke-width="0.9"/><circle cx="1195.42" cy="1096.70" r="1.35" fill="#6cbf2a" stroke="#6cbf2a" stroke-width="0.9"/><circle cx="1201.88" cy="1096.70" r="1.35" fill="#6cbf2a" stroke="#6cbf2a" stroke-width="0.9"/><circle cx="1208.33" cy="1096.70" r="1.35" fill="#6cbf2a" stroke="#6cbf2a" stroke-width="0.9"/><circle cx="1214.78" cy="1096.70" r="1.35" fill="#6cbf2a" stroke="#6cbf2a" stroke-width="0.9"/><circle cx="1221.24" cy="1096.70" r="1.35" fill="#6cbf2a" stroke="#6cbf2a" stroke-width="0.9"/><circle cx="1227.69" cy="1096.70" r="1.35" fill="#6cbf2a" stroke="#6cbf2a" stroke-width="0.9"/><circle cx="1234.15" cy="1096.70" r="1.35" fill="#6cbf2a" stroke="#6cbf2a" stroke-width="0.9"/></svg>
<svg style="left:0;top:0" width="2536" height="1440"><path d="M1257.20 983.80 L1262.00 988.30 L1257.20 992.80" fill="none" stroke="#5a5f66" stroke-width="1.1"/><path d="M1271.90 976.20 H1441.60" stroke="#d6d6d6" stroke-width="1.2"/><path d="M1271.90 1011.60 H1441.60" stroke="#d6d6d6" stroke-width="1.2"/><path d="M1271.90 1045.60 H1441.60" stroke="#d6d6d6" stroke-width="1.2"/><circle cx="1283.90" cy="995.20" r="4.1" fill="#6cbf2a"/><circle cx="1283.90" cy="1029.90" r="4.1" fill="#ef5040"/></svg>
<svg style="left:0;top:0" width="2536" height="1440"><path d="M1549.50 978.50 H2272.50" stroke="#bdbdbd" stroke-width="1"/><path d="M1549.50 1008.50 H2272.50" stroke="#bdbdbd" stroke-width="1"/><path d="M1549.50 1037.50 H2272.50" stroke="#bdbdbd" stroke-width="1"/><path d="M1549.50 1067.50 H2272.50" stroke="#bdbdbd" stroke-width="1"/><path d="M1549.50 1097.50 H2272.50" stroke="#bdbdbd" stroke-width="1"/><path d="M1549.50 978.50 V1097.50" stroke="#bdbdbd" stroke-width="1"/><path d="M1610.50 978.50 V1097.50" stroke="#bdbdbd" stroke-width="1"/><path d="M1670.50 978.50 V1097.50" stroke="#bdbdbd" stroke-width="1"/><path d="M1731.50 978.50 V1097.50" stroke="#bdbdbd" stroke-width="1"/><path d="M1792.50 978.50 V1097.50" stroke="#bdbdbd" stroke-width="1"/><path d="M1852.50 978.50 V1097.50" stroke="#bdbdbd" stroke-width="1"/><path d="M1913.50 978.50 V1097.50" stroke="#bdbdbd" stroke-width="1"/><path d="M1974.50 978.50 V1097.50" stroke="#bdbdbd" stroke-width="1"/><path d="M2034.50 978.50 V1097.50" stroke="#bdbdbd" stroke-width="1"/><path d="M2095.50 978.50 V1097.50" stroke="#bdbdbd" stroke-width="1"/><path d="M2156.50 978.50 V1097.50" stroke="#bdbdbd" stroke-width="1"/><path d="M2217.50 978.50 V1097.50" stroke="#bdbdbd" stroke-width="1"/><path d="M2272.50 978.50 V1097.50" stroke="#bdbdbd" stroke-width="1"/><path d="M1680.82 1081.08 L1685.88 1097.20 L1680.82 1097.20 Z" fill="#a9c0dd" fill-opacity="0.9"/><path d="M1680.82 1078.04 L1685.88 1097.20" stroke="#f7a5f5" stroke-width="1.3" fill="none"/><path d="M1680.82 1081.08 L1685.88 1097.20" stroke="#6ccbc7" stroke-width="1.3" fill="none"/><circle cx="1680.82" cy="1078.04" r="1.9" fill="#fff" stroke="#f7a5f5" stroke-width="1.1"/><circle cx="1680.82" cy="1081.08" r="1.9" fill="#fff" stroke="#6ccbc7" stroke-width="1.1"/><path d="M2191.71 1068.61 L2196.77 1097.20 L2191.71 1097.20 Z" fill="#a9c0dd" fill-opacity="0.9"/><path d="M2191.71 1040.33 L2196.77 1097.20" stroke="#f7a5f5" stroke-width="1.3" fill="none"/><path d="M2191.71 1068.61 L2196.77 1097.20" stroke="#6ccbc7" stroke-width="1.3" fill="none"/><circle cx="2191.71" cy="1040.33" r="1.9" fill="#fff" stroke="#f7a5f5" stroke-width="1.1"/><circle cx="2191.71" cy="1068.61" r="1.9" fill="#fff" stroke="#6ccbc7" stroke-width="1.1"/><circle cx="1554.36" cy="1095.68" r="1.9" fill="#fff" stroke="#6ccbc7" stroke-width="1.1"/><circle cx="1564.47" cy="1095.98" r="1.9" fill="#fff" stroke="#6ccbc7" stroke-width="1.1"/><circle cx="1579.65" cy="1095.38" r="1.9" fill="#fff" stroke="#6ccbc7" stroke-width="1.1"/><circle cx="1589.77" cy="1096.29" r="1.9" fill="#fff" stroke="#6ccbc7" stroke-width="1.1"/><circle cx="1604.94" cy="1096.29" r="1.9" fill="#fff" stroke="#6ccbc7" stroke-width="1.1"/><circle cx="1625.17" cy="1095.07" r="1.9" fill="#fff" stroke="#6ccbc7" stroke-width="1.1"/><circle cx="1635.29" cy="1096.29" r="1.9" fill="#fff" stroke="#6ccbc7" stroke-width="1.1"/><circle cx="1640.35" cy="1095.68" r="1.9" fill="#fff" stroke="#6ccbc7" stroke-width="1.1"/><circle cx="1660.58" cy="1095.07" r="1.9" fill="#fff" stroke="#6ccbc7" stroke-width="1.1"/><circle cx="1670.70" cy="1096.29" r="1.9" fill="#fff" stroke="#6ccbc7" stroke-width="1.1"/><circle cx="1685.88" cy="1095.07" r="1.9" fill="#fff" stroke="#6ccbc7" stroke-width="1.1"/><circle cx="1695.99" cy="1095.98" r="1.9" fill="#fff" stroke="#6ccbc7" stroke-width="1.1"/><circle cx="1701.05" cy="1096.29" r="1.9" fill="#fff" stroke="#6ccbc7" stroke-width="1.1"/><circle cx="1711.17" cy="1096.29" r="1.9" fill="#fff" stroke="#6ccbc7" stroke-width="1.1"/><circle cx="1721.28" cy="1095.38" r="1.9" fill="#fff" stroke="#6ccbc7" stroke-width="1.1"/><circle cx="1726.34" cy="1095.38" r="1.9" fill="#fff" stroke="#6ccbc7" stroke-width="1.1"/><circle cx="1751.63" cy="1096.29" r="1.9" fill="#fff" stroke="#6ccbc7" stroke-width="1.1"/><circle cx="1756.69" cy="1095.98" r="1.9" fill="#fff" stroke="#6ccbc7" stroke-width="1.1"/><circle cx="1761.75" cy="1096.29" r="1.9" fill="#fff" stroke="#6ccbc7" stroke-width="1.1"/><circle cx="1766.81" cy="1095.07" r="1.9" fill="#fff" stroke="#6ccbc7" stroke-width="1.1"/><circle cx="1781.98" cy="1095.38" r="1.9" fill="#fff" stroke="#6ccbc7" stroke-width="1.1"/><circle cx="1787.04" cy="1096.29" r="1.9" fill="#fff" stroke="#6ccbc7" stroke-width="1.1"/><circle cx="1797.16" cy="1095.07" r="1.9" fill="#fff" stroke="#6ccbc7" stroke-width="1.1"/><circle cx="1817.39" cy="1096.29" r="1.9" fill="#fff" stroke="#6ccbc7" stroke-width="1.1"/><circle cx="1827.51" cy="1095.98" r="1.9" fill="#fff" stroke="#6ccbc7" stroke-width="1.1"/><circle cx="1842.68" cy="1095.07" r="1.9" fill="#fff" stroke="#6ccbc7" stroke-width="1.1"/><circle cx="1857.86" cy="1096.29" r="1.9" fill="#fff" stroke="#6ccbc7" stroke-width="1.1"/><circle cx="1862.92" cy="1095.07" r="1.9" fill="#fff" stroke="#6ccbc7" stroke-width="1.1"/><circle cx="1883.15" cy="1095.07" r="1.9" fill="#fff" stroke="#6ccbc7" stroke-width="1.1"/><circle cx="1893.27" cy="1095.38" r="1.9" fill="#fff" stroke="#6ccbc7" stroke-width="1.1"/><circle cx="1898.33" cy="1096.29" r="1.9" fill="#fff" stroke="#6ccbc7" stroke-width="1.1"/><circle cx="1933.73" cy="1095.98" r="1.9" fill="#fff" stroke="#6ccbc7" stroke-width="1.1"/><circle cx="1964.08" cy="1096.29" r="1.9" fill="#fff" stroke="#6ccbc7" stroke-width="1.1"/><circle cx="1999.49" cy="1095.07" r="1.9" fill="#fff" stroke="#6ccbc7" stroke-width="1.1"/><circle cx="2024.78" cy="1095.98" r="1.9" fill="#fff" stroke="#6ccbc7" stroke-width="1.1"/><circle cx="2055.13" cy="1095.68" r="1.9" fill="#fff" stroke="#6ccbc7" stroke-width="1.1"/><circle cx="2075.37" cy="1095.38" r="1.9" fill="#fff" stroke="#6ccbc7" stroke-width="1.1"/><circle cx="2090.54" cy="1095.98" r="1.9" fill="#fff" stroke="#6ccbc7" stroke-width="1.1"/><circle cx="2171.47" cy="1095.07" r="1.9" fill="#fff" stroke="#6ccbc7" stroke-width="1.1"/><circle cx="2196.77" cy="1096.29" r="1.9" fill="#fff" stroke="#6ccbc7" stroke-width="1.1"/><circle cx="2206.88" cy="1095.07" r="1.9" fill="#fff" stroke="#6ccbc7" stroke-width="1.1"/><circle cx="2227.12" cy="1095.68" r="1.9" fill="#fff" stroke="#6ccbc7" stroke-width="1.1"/><circle cx="2232.18" cy="1095.07" r="1.9" fill="#fff" stroke="#6ccbc7" stroke-width="1.1"/><circle cx="2247.35" cy="1095.98" r="1.9" fill="#fff" stroke="#6ccbc7" stroke-width="1.1"/><circle cx="2257.47" cy="1096.29" r="1.9" fill="#fff" stroke="#6ccbc7" stroke-width="1.1"/><circle cx="1918.56" cy="1024.21" r="1.9" fill="#fff" stroke="#6ccbc7" stroke-width="1.1"/><circle cx="2034.90" cy="998.51" r="1.9" fill="#fff" stroke="#6ccbc7" stroke-width="1.1"/></svg>
<svg style="left:0;top:0" width="2536" height="1440"><path d="M2297.90 983.80 L2302.70 988.30 L2297.90 992.80" fill="none" stroke="#5a5f66" stroke-width="1.1"/><path d="M2310.00 976.20 H2480.00" stroke="#d6d6d6" stroke-width="1.2"/><path d="M2310.00 1011.40 H2480.00" stroke="#d6d6d6" stroke-width="1.2"/><path d="M2310.00 1045.70 H2480.00" stroke="#d6d6d6" stroke-width="1.2"/><circle cx="2322.00" cy="995.90" r="4.1" fill="#6ccbc7"/><circle cx="2322.00" cy="1030.20" r="4.1" fill="#f7a5f5"/></svg>
<svg style="left:0;top:0" width="2536" height="1440"><rect x="296.5" y="1310" width="6" height="140" fill="#e6e6e6"/><path d="M296 1310 V1440" stroke="#d0d0d0" stroke-width="1"/><path d="M290.5 1309.5 H296" stroke="#e0e0e0" stroke-width="1.5"/><path d="M290.5 1349.5 H296" stroke="#d8d8d8" stroke-width="1"/><path d="M290.5 1398.5 H296" stroke="#d8d8d8" stroke-width="1"/><path d="M459 1310.5 L471 1442" stroke="#57c17b" stroke-width="1.6" fill="none"/><path d="M456.5 1310 H461.5" stroke="#57c17b" stroke-width="1.2"/><circle cx="1293.3" cy="1317.4" r="7.5" fill="#c6c6c6"/><path d="M1291.3 1313.6 L1295 1317.4 L1291.3 1321.2" stroke="#fff" stroke-width="2" fill="none"/><circle cx="1317" cy="1317.5" r="7.2" fill="#663db8"/><circle cx="1317" cy="1343.5" r="7.2" fill="#6f87d8"/><circle cx="1317" cy="1369.5" r="7.2" fill="#57c17b"/><circle cx="1317" cy="1395.5" r="7.2" fill="#bc52bc"/><circle cx="1317" cy="1421.5" r="7.2" fill="#9e3533"/><path d="M1902.86 1316.91 A32.9 32.9 0 1 1 1874.10 1332.37 L1880.63 1336.45 A25.2 25.2 0 1 0 1902.66 1324.61 Z" fill="#57c17b"/><path d="M1876.11 1331.67 A31.6 31.6 0 0 1 1884.79 1323.30 L1888.28 1328.67 A25.2 25.2 0 0 0 1881.36 1335.35 Z" fill="#6f87d8"/><path d="M1886.34 1322.12 A31.8 31.8 0 0 1 1895.39 1318.69 L1896.76 1325.15 A25.2 25.2 0 0 0 1889.59 1327.87 Z" fill="#663db8"/><path d="M1897.52 1317.91 A32.2 32.2 0 0 1 1900.03 1317.66 L1900.46 1324.65 A25.2 25.2 0 0 0 1898.49 1324.85 Z" fill="#bc52bc"/><circle cx="2332.4" cy="1317.4" r="7.5" fill="#c6c6c6"/><path d="M2330.4 1313.6 L2334.1 1317.4 L2330.4 1321.2" stroke="#fff" stroke-width="2" fill="none"/><circle cx="2355.5" cy="1317.5" r="7.2" fill="#57c17b"/><circle cx="2355.5" cy="1343.5" r="7.2" fill="#6f87d8"/><circle cx="2355.5" cy="1369.5" r="7.2" fill="#663db8"/><clipPath id="clp"><rect x="2300" y="1380" width="200" height="18.3"/></clipPath><circle cx="2355.5" cy="1395.5" r="7.2" fill="#bc52bc" clip-path="url(#clp)"/></svg>
<div class="t" style="left:258.5px;top:1455px;font-size:14.5px;font-weight:bold;color:#9a9a9a;line-height:0;transform:rotate(-90deg);transform-origin:0 0;letter-spacing:0.6px">Count</div>
<div class="t" style="left:53.36px;top:33.00px;font-size:26.30px;color:#fff;letter-spacing:-0.405px;-webkit-text-stroke:0.5px #fff">kibana</div>
<div class="t" style="left:58.51px;top:92.00px;font-size:19.13px;color:#fff;letter-spacing:-0.403px">Discover</div>
<div class="t" style="left:60.00px;top:136.00px;font-size:19.13px;color:#fff;letter-spacing:-0.586px">Visualize</div>
<div class="t" style="left:58.51px;top:180.00px;font-size:19.13px;color:#fff;letter-spacing:-0.127px">Dashboard</div>
<div class="t" style="left:59.70px;top:224.00px;font-size:19.13px;color:#fff;letter-spacing:0.028px">Timelion</div>
<div class="t" style="left:59.10px;top:268.00px;font-size:19.13px;color:#fff;letter-spacing:-0.954px">Canvas</div>
<div class="t" style="left:58.51px;top:312.00px;font-size:19.13px;color:#fff">Maps</div>
<div class="t" style="left:58.51px;top:356.00px;font-size:19.13px;color:#fff;letter-spacing:-0.352px">Machine Le...</div>
<div class="t" style="left:58.51px;top:400.00px;font-size:19.13px;color:#fff;letter-spacing:0.252px">Infrastructure</div>
<div class="t" style="left:58.51px;top:444.00px;font-size:19.13px;color:#fff;letter-spacing:-0.797px">Logs</div>
<div class="t" style="left:60.00px;top:488.00px;font-size:19.13px;color:#fff;letter-spacing:-1.883px">APM</div>
<div class="t" style="left:58.80px;top:532.00px;font-size:19.13px;color:#fff;letter-spacing:0.215px">Uptime</div>
<div class="t" style="left:59.10px;top:576.00px;font-size:19.13px;color:#fff;letter-spacing:-0.050px">Graph</div>
<div class="t" style="left:58.51px;top:620.00px;font-size:19.13px;color:#fff;letter-spacing:-0.288px">Dev Tools</div>
<div class="t" style="left:58.51px;top:664.00px;font-size:19.13px;color:#fff;letter-spacing:0.461px">Monitoring</div>
<div class="t" style="left:58.51px;top:708.00px;font-size:19.13px;color:#fff;letter-spacing:-0.104px">Management</div>
<div class="t" style="left:58.90px;top:1288.00px;font-size:19.13px;color:#fff;letter-spacing:-0.288px">elastic</div>
<div class="t" style="left:58.01px;top:1332.00px;font-size:19.13px;color:#fff;letter-spacing:0.083px">Logout</div>
<div class="t" style="left:58.01px;top:1376.00px;font-size:19.13px;color:#fff;letter-spacing:0.236px">Default</div>
<div class="t" style="left:58.60px;top:1420.00px;font-size:19.13px;color:#fff;letter-spacing:-0.481px">Collapse</div>
<div class="t" style="left:21.06px;top:1379.00px;font-size:18.12px;color:#000">D</div>
<div class="t" style="left:267.89px;top:103.00px;font-size:28.99px;color:#404041;font-weight:bold;letter-spacing:5.779px;-webkit-text-stroke:1.1px #404041">CLOUDFLARE</div>
<div class="t" style="left:524.00px;top:96.00px;font-size:7.00px;color:#404041">®</div>
<div class="t" style="left:604.08px;top:54.00px;font-size:22.75px;color:#1a1c21;font-weight:bold;letter-spacing:-0.241px">Performance Overview</div>
<div class="t" style="left:245.69px;top:150.00px;font-size:19.28px;color:#69707d;letter-spacing:-0.294px">Filters</div>
<div class="t" style="left:249.53px;top:190.00px;font-size:18.84px;color:#1a1c21;letter-spacing:-0.043px;-webkit-text-stroke:0.55px #1a1c21">Device Type</div>
<div class="t" style="left:258.22px;top:226.00px;font-size:18.41px;color:#98a2b3;letter-spacing:-0.382px">Select...</div>
<div class="t" style="left:530.98px;top:190.00px;font-size:18.84px;color:#1a1c21;letter-spacing:0.552px;-webkit-text-stroke:0.55px #1a1c21">Country</div>
<div class="t" style="left:539.08px;top:226.00px;font-size:18.41px;color:#98a2b3;letter-spacing:-0.382px">Select...</div>
<div class="t" style="left:811.25px;top:190.00px;font-size:18.84px;color:#1a1c21;letter-spacing:0.567px;-webkit-text-stroke:0.55px #1a1c21">Hostname</div>
<div class="t" style="left:819.94px;top:226.00px;font-size:18.41px;color:#98a2b3;letter-spacing:-0.382px">Select...</div>
<div class="t" style="left:1092.70px;top:190.00px;font-size:18.84px;color:#1a1c21;-webkit-text-stroke:0.55px #1a1c21">Client IP</div>
<div class="t" style="left:1100.80px;top:226.00px;font-size:18.41px;color:#98a2b3;letter-spacing:-0.382px">Select...</div>
<div class="t" style="left:1373.26px;top:190.00px;font-size:18.84px;color:#1a1c21;letter-spacing:0.074px;-webkit-text-stroke:0.55px #1a1c21">User Agent</div>
<div class="t" style="left:1381.66px;top:226.00px;font-size:18.41px;color:#98a2b3;letter-spacing:-0.382px">Select...</div>
<div class="t" style="left:1653.83px;top:190.00px;font-size:18.84px;color:#1a1c21;letter-spacing:-0.128px;-webkit-text-stroke:0.55px #1a1c21">Request URI</div>
<div class="t" style="left:1662.52px;top:226.00px;font-size:18.41px;color:#98a2b3;letter-spacing:-0.382px">Select...</div>
<div class="t" style="left:1934.69px;top:190.00px;font-size:18.84px;color:#1a1c21;letter-spacing:-0.266px;-webkit-text-stroke:0.55px #1a1c21">Edge Response Status</div>
<div class="t" style="left:1943.38px;top:226.00px;font-size:18.41px;color:#98a2b3;letter-spacing:-0.382px">Select...</div>
<div class="t" style="left:2216.14px;top:190.00px;font-size:18.84px;color:#1a1c21;letter-spacing:0.009px;-webkit-text-stroke:0.55px #1a1c21">Origin Response Status</div>
<div class="t" style="left:2224.24px;top:226.00px;font-size:18.41px;color:#98a2b3;letter-spacing:-0.382px">Select...</div>
<div class="t" style="left:258.17px;top:306.00px;font-size:22.90px;color:#1a1c21;font-weight:bold;letter-spacing:-0.874px">Requests</div>
<div class="t" style="left:258.17px;top:754.00px;font-size:22.90px;color:#1a1c21;font-weight:bold;letter-spacing:-0.235px">Bandwidth</div>
<div class="t" style="left:257.68px;top:1202.00px;font-size:22.90px;color:#1a1c21;font-weight:bold;letter-spacing:-1.086px">Cache</div>
<div class="t" style="left:245.80px;top:374.00px;font-size:18.99px;color:#69707d;letter-spacing:-0.096px">Total Number of Requests</div>
<div class="t" style="left:740.91px;top:374.00px;font-size:18.99px;color:#69707d;letter-spacing:-0.617px">Cached Requests</div>
<div class="t" style="left:1382.61px;top:374.00px;font-size:18.99px;color:#69707d;letter-spacing:-0.437px">Uncached Requests</div>
<div class="t" style="left:438.20px;top:415.00px;font-size:43.19px;color:#2b2b2b;font-weight:bold;letter-spacing:-2.391px">433</div>
<div class="t" style="left:1016.10px;top:413.00px;font-size:42.75px;color:#2b2b2b;font-weight:bold">11</div>
<div class="t" style="left:1649.30px;top:413.00px;font-size:42.75px;color:#2b2b2b;font-weight:bold;letter-spacing:-1.784px">422</div>
<div class="t" style="left:446.74px;top:446.00px;font-size:18.41px;color:#1a1c21;letter-spacing:0.196px">Count</div>
<div class="t" style="left:1015.94px;top:444.00px;font-size:18.41px;color:#1a1c21;letter-spacing:0.171px">Count</div>
<div class="t" style="left:1657.64px;top:444.00px;font-size:18.41px;color:#1a1c21;letter-spacing:0.171px">Count</div>
<div class="t" style="left:246.10px;top:822.00px;font-size:18.99px;color:#69707d;letter-spacing:0.123px">Total Bandwidth</div>
<div class="t" style="left:938.01px;top:822.00px;font-size:18.99px;color:#69707d;letter-spacing:-0.201px">Cached Bandwidth</div>
<div class="t" style="left:1629.41px;top:822.00px;font-size:18.99px;color:#69707d;letter-spacing:-0.057px">Uncached Bandwidth</div>
<div class="t" style="left:475.86px;top:861.00px;font-size:42.75px;color:#2b2b2b;font-weight:bold;letter-spacing:-1.105px">27.627MB</div>
<div class="t" style="left:1162.26px;top:859.00px;font-size:42.75px;color:#2b2b2b;font-weight:bold;letter-spacing:-1.847px">675.535KB</div>
<div class="t" style="left:1958.26px;top:859.00px;font-size:42.75px;color:#2b2b2b;font-weight:bold;letter-spacing:-0.962px">26.968MB</div>
<div class="t" style="left:502.71px;top:892.00px;font-size:18.41px;color:#1a1c21;letter-spacing:0.484px">Total Bandwidth</div>
<div class="t" style="left:1185.34px;top:889.00px;font-size:18.41px;color:#1a1c21;letter-spacing:0.059px">Cached Bandwidth</div>
<div class="t" style="left:1939.12px;top:889.00px;font-size:18.41px;color:#1a1c21;letter-spacing:-0.242px">Sum of EdgeResponseBytes</div>
<div class="t" style="left:246.30px;top:486.00px;font-size:18.99px;color:#69707d;letter-spacing:-0.152px">Total number of requests vs cached vs uncached over time</div>
<div class="t" style="left:1432.00px;top:486.00px;font-size:18.99px;color:#69707d;letter-spacing:-0.261px">Total Requests vs. Origin Requests in rps last 24 hours</div>
<div class="t" style="left:245.51px;top:935.00px;font-size:18.99px;color:#69707d;letter-spacing:-0.290px">Cached vs Uncached Bandwidth Over Time</div>
<div class="t" style="left:1482.30px;top:935.00px;font-size:18.99px;color:#69707d;letter-spacing:-0.059px">Total Bandwidth vs Origin Bandwidth in Mbps last 24 hours</div>
<div class="t" style="left:245.71px;top:1270.00px;font-size:18.99px;color:#69707d;letter-spacing:-0.205px">Cache status over time</div>
<div class="t" style="left:1481.51px;top:1270.00px;font-size:18.99px;color:#69707d;letter-spacing:-0.524px">Cache Status Ratio</div>
<div class="t" style="left:1481.70px;top:1438.00px;font-size:18.99px;color:#69707d;letter-spacing:-0.426px">Top URIs with Cache Status Miss</div>
<div class="t" style="left:255.49px;top:530.00px;font-size:10.90px;color:#9a9a9a">250</div>
<div class="t" style="left:255.49px;top:554.00px;font-size:10.90px;color:#9a9a9a">200</div>
<div class="t" style="left:255.49px;top:578.00px;font-size:10.90px;color:#9a9a9a">150</div>
<div class="t" style="left:255.49px;top:601.00px;font-size:10.90px;color:#9a9a9a">100</div>
<div class="t" style="left:261.55px;top:625.00px;font-size:10.90px;color:#9a9a9a">50</div>
<div class="t" style="left:267.61px;top:649.00px;font-size:10.90px;color:#9a9a9a">0</div>
<div class="t" style="left:264.44px;top:660.00px;font-size:10.60px;color:#9a9a9a;letter-spacing:0.300px">16:00</div>
<div class="t" style="left:340.44px;top:660.00px;font-size:10.60px;color:#9a9a9a;letter-spacing:0.300px">18:00</div>
<div class="t" style="left:416.60px;top:660.00px;font-size:10.60px;color:#9a9a9a;letter-spacing:0.259px">20:00</div>
<div class="t" style="left:492.60px;top:660.00px;font-size:10.60px;color:#9a9a9a;letter-spacing:0.259px">22:00</div>
<div class="t" style="left:568.77px;top:660.00px;font-size:10.60px;color:#9a9a9a;letter-spacing:0.217px">00:00</div>
<div class="t" style="left:644.77px;top:660.00px;font-size:10.60px;color:#9a9a9a;letter-spacing:0.217px">02:00</div>
<div class="t" style="left:720.77px;top:660.00px;font-size:10.60px;color:#9a9a9a;letter-spacing:0.217px">04:00</div>
<div class="t" style="left:796.77px;top:660.00px;font-size:10.60px;color:#9a9a9a;letter-spacing:0.217px">06:00</div>
<div class="t" style="left:872.77px;top:660.00px;font-size:10.60px;color:#9a9a9a;letter-spacing:0.217px">08:00</div>
<div class="t" style="left:948.44px;top:660.00px;font-size:10.60px;color:#9a9a9a;letter-spacing:0.300px">10:00</div>
<div class="t" style="left:1024.44px;top:660.00px;font-size:10.60px;color:#9a9a9a;letter-spacing:0.300px">12:00</div>
<div class="t" style="left:1100.44px;top:660.00px;font-size:10.60px;color:#9a9a9a;letter-spacing:0.300px">14:00</div>
<div class="t" style="left:662.67px;top:681.00px;font-size:18.00px;color:#999999;letter-spacing:0.556px">per 10 minutes</div>
<div class="t" style="left:1246.70px;top:546.00px;font-size:18.60px;color:#2f3033;letter-spacing:0.255px">total requests</div>
<div class="t" style="left:1246.12px;top:582.00px;font-size:18.60px;color:#2f3033;letter-spacing:-0.024px">cached requ...</div>
<div class="t" style="left:1245.54px;top:616.00px;font-size:18.60px;color:#2f3033;letter-spacing:0.021px">uncached re...</div>
<div class="t" style="left:1377.94px;top:546.00px;font-size:18.00px;color:#2f3033">0</div>
<div class="t" style="left:1377.94px;top:582.00px;font-size:18.00px;color:#2f3033">0</div>
<div class="t" style="left:1377.94px;top:616.00px;font-size:18.00px;color:#2f3033">0</div>
<div class="t" style="left:1441.39px;top:530.00px;font-size:10.90px;color:#9a9a9a">250</div>
<div class="t" style="left:1441.39px;top:554.00px;font-size:10.90px;color:#9a9a9a">200</div>
<div class="t" style="left:1441.39px;top:578.00px;font-size:10.90px;color:#9a9a9a">150</div>
<div class="t" style="left:1441.39px;top:601.00px;font-size:10.90px;color:#9a9a9a">100</div>
<div class="t" style="left:1447.45px;top:625.00px;font-size:10.90px;color:#9a9a9a">50</div>
<div class="t" style="left:1453.51px;top:649.00px;font-size:10.90px;color:#9a9a9a">0</div>
<div class="t" style="left:1450.34px;top:660.00px;font-size:10.60px;color:#9a9a9a;letter-spacing:0.300px">16:00</div>
<div class="t" style="left:1518.14px;top:660.00px;font-size:10.60px;color:#9a9a9a;letter-spacing:0.300px">18:00</div>
<div class="t" style="left:1586.10px;top:660.00px;font-size:10.60px;color:#9a9a9a;letter-spacing:0.259px">20:00</div>
<div class="t" style="left:1653.90px;top:660.00px;font-size:10.60px;color:#9a9a9a;letter-spacing:0.259px">22:00</div>
<div class="t" style="left:1721.87px;top:660.00px;font-size:10.60px;color:#9a9a9a;letter-spacing:0.217px">00:00</div>
<div class="t" style="left:1789.67px;top:660.00px;font-size:10.60px;color:#9a9a9a;letter-spacing:0.217px">02:00</div>
<div class="t" style="left:1857.47px;top:660.00px;font-size:10.60px;color:#9a9a9a;letter-spacing:0.217px">04:00</div>
<div class="t" style="left:1925.27px;top:660.00px;font-size:10.60px;color:#9a9a9a;letter-spacing:0.217px">06:00</div>
<div class="t" style="left:1993.07px;top:660.00px;font-size:10.60px;color:#9a9a9a;letter-spacing:0.217px">08:00</div>
<div class="t" style="left:2060.54px;top:660.00px;font-size:10.60px;color:#9a9a9a;letter-spacing:0.300px">10:00</div>
<div class="t" style="left:2128.34px;top:660.00px;font-size:10.60px;color:#9a9a9a;letter-spacing:0.300px">12:00</div>
<div class="t" style="left:2196.14px;top:660.00px;font-size:10.60px;color:#9a9a9a;letter-spacing:0.300px">14:00</div>
<div class="t" style="left:1798.88px;top:681.00px;font-size:18.00px;color:#999999;letter-spacing:0.556px">per 10 minutes</div>
<div class="t" style="left:2333.50px;top:546.00px;font-size:18.60px;color:#2f3033;letter-spacing:0.271px">total requests</div>
<div class="t" style="left:2332.92px;top:582.00px;font-size:18.60px;color:#2f3033;letter-spacing:0.283px">origin requests</div>
<div class="t" style="left:2464.44px;top:546.00px;font-size:18.00px;color:#2f3033">0</div>
<div class="t" style="left:2464.44px;top:582.00px;font-size:18.00px;color:#2f3033">0</div>
<div class="t" style="left:262.53px;top:978.00px;font-size:10.90px;color:#9a9a9a">28.61MB</div>
<div class="t" style="left:256.47px;top:998.00px;font-size:10.90px;color:#9a9a9a">23.842MB</div>
<div class="t" style="left:256.47px;top:1018.00px;font-size:10.90px;color:#9a9a9a">19.073MB</div>
<div class="t" style="left:256.47px;top:1037.00px;font-size:10.90px;color:#9a9a9a">14.305MB</div>
<div class="t" style="left:262.53px;top:1057.00px;font-size:10.90px;color:#9a9a9a">9.537MB</div>
<div class="t" style="left:262.53px;top:1077.00px;font-size:10.90px;color:#9a9a9a">4.768MB</div>
<div class="t" style="left:292.83px;top:1096.00px;font-size:10.90px;color:#9a9a9a">0B</div>
<div class="t" style="left:297.14px;top:1108.00px;font-size:10.60px;color:#9a9a9a;letter-spacing:0.300px">16:00</div>
<div class="t" style="left:374.59px;top:1108.00px;font-size:10.60px;color:#9a9a9a;letter-spacing:0.300px">18:00</div>
<div class="t" style="left:452.20px;top:1108.00px;font-size:10.60px;color:#9a9a9a;letter-spacing:0.259px">20:00</div>
<div class="t" style="left:529.65px;top:1108.00px;font-size:10.60px;color:#9a9a9a;letter-spacing:0.259px">22:00</div>
<div class="t" style="left:607.27px;top:1108.00px;font-size:10.60px;color:#9a9a9a;letter-spacing:0.217px">00:00</div>
<div class="t" style="left:684.72px;top:1108.00px;font-size:10.60px;color:#9a9a9a;letter-spacing:0.217px">02:00</div>
<div class="t" style="left:762.17px;top:1108.00px;font-size:10.60px;color:#9a9a9a;letter-spacing:0.217px">04:00</div>
<div class="t" style="left:839.62px;top:1108.00px;font-size:10.60px;color:#9a9a9a;letter-spacing:0.217px">06:00</div>
<div class="t" style="left:917.07px;top:1108.00px;font-size:10.60px;color:#9a9a9a;letter-spacing:0.217px">08:00</div>
<div class="t" style="left:994.19px;top:1108.00px;font-size:10.60px;color:#9a9a9a;letter-spacing:0.300px">10:00</div>
<div class="t" style="left:1071.64px;top:1108.00px;font-size:10.60px;color:#9a9a9a;letter-spacing:0.300px">12:00</div>
<div class="t" style="left:1149.09px;top:1108.00px;font-size:10.60px;color:#9a9a9a;letter-spacing:0.300px">14:00</div>
<div class="t" style="left:686.88px;top:1130.00px;font-size:18.00px;color:#999999;letter-spacing:0.556px">per 10 minutes</div>
<div class="t" style="left:1295.31px;top:994.00px;font-size:18.60px;color:#2f3033;letter-spacing:-0.059px">saved band...</div>
<div class="t" style="left:1294.44px;top:1030.00px;font-size:18.60px;color:#2f3033;letter-spacing:0.080px">uncached b...</div>
<div class="t" style="left:1415.24px;top:994.00px;font-size:18.00px;color:#2f3033;letter-spacing:-0.198px">0B</div>
<div class="t" style="left:1415.24px;top:1030.00px;font-size:18.00px;color:#2f3033;letter-spacing:-0.198px">0B</div>
<div class="t" style="left:1497.18px;top:978.00px;font-size:10.90px;color:#9a9a9a">781.25KB</div>
<div class="t" style="left:1491.12px;top:1008.00px;font-size:10.90px;color:#9a9a9a">585.938KB</div>
<div class="t" style="left:1491.12px;top:1038.00px;font-size:10.90px;color:#9a9a9a">390.625KB</div>
<div class="t" style="left:1491.12px;top:1067.00px;font-size:10.90px;color:#9a9a9a">195.313KB</div>
<div class="t" style="left:1531.73px;top:1097.00px;font-size:10.90px;color:#9a9a9a">0B</div>
<div class="t" style="left:1535.24px;top:1108.00px;font-size:10.60px;color:#9a9a9a;letter-spacing:0.300px">16:00</div>
<div class="t" style="left:1595.94px;top:1108.00px;font-size:10.60px;color:#9a9a9a;letter-spacing:0.300px">18:00</div>
<div class="t" style="left:1656.80px;top:1108.00px;font-size:10.60px;color:#9a9a9a;letter-spacing:0.259px">20:00</div>
<div class="t" style="left:1717.50px;top:1108.00px;font-size:10.60px;color:#9a9a9a;letter-spacing:0.259px">22:00</div>
<div class="t" style="left:1778.37px;top:1108.00px;font-size:10.60px;color:#9a9a9a;letter-spacing:0.217px">00:00</div>
<div class="t" style="left:1839.07px;top:1108.00px;font-size:10.60px;color:#9a9a9a;letter-spacing:0.217px">02:00</div>
<div class="t" style="left:1899.77px;top:1108.00px;font-size:10.60px;color:#9a9a9a;letter-spacing:0.217px">04:00</div>
<div class="t" style="left:1960.47px;top:1108.00px;font-size:10.60px;color:#9a9a9a;letter-spacing:0.217px">06:00</div>
<div class="t" style="left:2021.17px;top:1108.00px;font-size:10.60px;color:#9a9a9a;letter-spacing:0.217px">08:00</div>
<div class="t" style="left:2081.54px;top:1108.00px;font-size:10.60px;color:#9a9a9a;letter-spacing:0.300px">10:00</div>
<div class="t" style="left:2142.24px;top:1108.00px;font-size:10.60px;color:#9a9a9a;letter-spacing:0.300px">12:00</div>
<div class="t" style="left:2202.94px;top:1108.00px;font-size:10.60px;color:#9a9a9a;letter-spacing:0.300px">14:00</div>
<div class="t" style="left:1825.08px;top:1129.00px;font-size:18.00px;color:#999999;letter-spacing:0.556px">per 10 minutes</div>
<div class="t" style="left:2334.60px;top:993.00px;font-size:18.60px;color:#2f3033;letter-spacing:0.367px">total badnw...</div>
<div class="t" style="left:2334.02px;top:1029.00px;font-size:18.60px;color:#2f3033;letter-spacing:0.271px">origin band...</div>
<div class="t" style="left:2453.84px;top:993.00px;font-size:18.00px;color:#2f3033;letter-spacing:0.202px">0B</div>
<div class="t" style="left:2453.84px;top:1029.00px;font-size:18.00px;color:#2f3033;letter-spacing:0.202px">0B</div>
<div class="t" style="left:1329.23px;top:1318.00px;font-size:18.30px;color:#8f8f8f;letter-spacing:0.430px">expired</div>
<div class="t" style="left:1328.66px;top:1344.00px;font-size:18.30px;color:#8f8f8f;letter-spacing:0.269px">miss</div>
<div class="t" style="left:1328.66px;top:1370.00px;font-size:18.30px;color:#8f8f8f;letter-spacing:0.836px">unknown</div>
<div class="t" style="left:1328.66px;top:1396.00px;font-size:18.30px;color:#8f8f8f;letter-spacing:1.077px">hit</div>
<div class="t" style="left:1328.66px;top:1422.00px;font-size:18.30px;color:#8f8f8f;letter-spacing:0.375px">revalidated</div>
<div class="t" style="left:2367.56px;top:1318.00px;font-size:18.30px;color:#8f8f8f;letter-spacing:0.786px">unknown</div>
<div class="t" style="left:2367.56px;top:1344.00px;font-size:18.30px;color:#8f8f8f;letter-spacing:0.202px">miss</div>
<div class="t" style="left:2368.13px;top:1370.00px;font-size:18.30px;color:#8f8f8f;letter-spacing:0.497px">expired</div>
<div class="a" style="left:2360px;top:1380px;width:100px;height:18px;overflow:hidden"><div class="t" style="left:7.56px;top:16.00px;font-size:18.30px;color:#8f8f8f;letter-spacing:1.077px">hit</div></div>
<div class="t" style="left:268.59px;top:1349.00px;font-size:10.90px;color:#444">200</div>
<div class="t" style="left:268.59px;top:1398.00px;font-size:10.90px;color:#444">150</div>
</body></html>
